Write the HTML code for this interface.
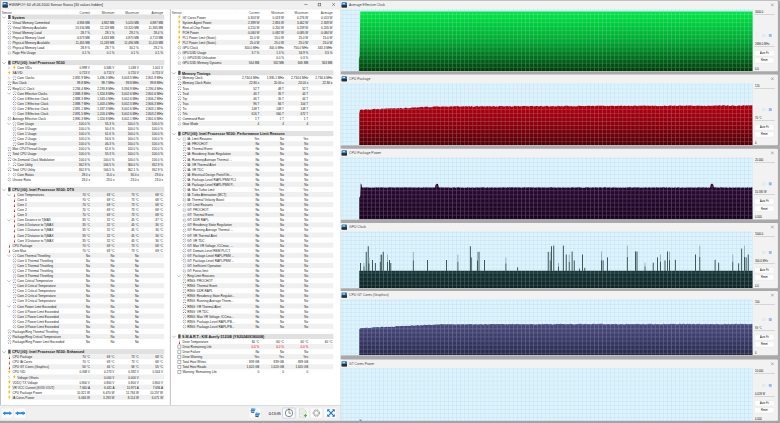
<!DOCTYPE html>
<html><head><meta charset="utf-8"><title>HWiNFO Sensor Status</title>
<style>
html,body{margin:0;padding:0;background:#c4c4c4;}
body{width:780px;height:423px;overflow:hidden;position:relative;}
svg{position:absolute;left:0;top:0;display:block;}
text{font-family:"Liberation Sans",sans-serif;white-space:pre;}
</style></head><body>
<svg width="780" height="423" viewBox="0 0 780 423">
<rect x="0" y="0" width="780" height="423" fill="#c4c4c4"/>
<defs><linearGradient id="g0" x1="0" y1="0" x2="0" y2="1"><stop offset="0" stop-color="#00e844"/><stop offset="0.5" stop-color="#00a830"/><stop offset="1" stop-color="#003c08"/></linearGradient><pattern id="p0" patternUnits="userSpaceOnUse" x="342.550" y="10.050" width="4.056" height="4.056"><rect x="0" y="0" width="0.5" height="4.056" fill="#c6e0f4"/><rect x="0.5" y="0" width="3.556" height="0.5" fill="#c6e0f4"/></pattern><pattern id="q0" patternUnits="userSpaceOnUse" x="342.550" y="10.050" width="4.056" height="4.056"><rect x="0" y="0" width="0.5" height="4.056" fill="rgba(215,225,255,0.33)"/><rect x="0.5" y="0" width="3.556" height="0.5" fill="rgba(215,225,255,0.33)"/></pattern><clipPath id="c0"><path d="M358.90 71.00 L358.90 59.00 L359.60 56.00 L360.30 11.60 L752.60 11.50 L752.60 71.00 Z"/></clipPath><linearGradient id="g1" x1="0" y1="0" x2="0" y2="1"><stop offset="0" stop-color="#b4000e"/><stop offset="0.5" stop-color="#8a000a"/><stop offset="1" stop-color="#520006"/></linearGradient><pattern id="p1" patternUnits="userSpaceOnUse" x="342.550" y="84.550" width="4.056" height="4.056"><rect x="0" y="0" width="0.5" height="4.056" fill="#c6e0f4"/><rect x="0.5" y="0" width="3.556" height="0.5" fill="#c6e0f4"/></pattern><pattern id="q1" patternUnits="userSpaceOnUse" x="342.550" y="84.550" width="4.056" height="4.056"><rect x="0" y="0" width="0.5" height="4.056" fill="rgba(215,225,255,0.33)"/><rect x="0.5" y="0" width="3.556" height="0.5" fill="rgba(215,225,255,0.33)"/></pattern><clipPath id="c1"><path d="M359.20 145.10 L359.20 113.50 L360.00 110.01 L361.20 110.11 L362.40 109.61 L363.60 110.08 L364.80 109.61 L366.00 109.72 L367.20 109.94 L368.40 109.49 L369.60 109.86 L370.80 109.45 L372.00 109.73 L373.20 109.66 L374.40 109.31 L375.60 108.89 L376.80 109.47 L378.00 109.33 L379.20 108.92 L380.40 108.58 L381.60 108.86 L382.80 108.97 L384.00 108.40 L385.20 109.19 L386.40 108.41 L387.60 108.87 L388.80 108.95 L390.00 108.92 L391.20 108.70 L392.40 108.19 L393.60 108.71 L394.80 108.30 L396.00 108.19 L397.20 108.38 L398.40 108.18 L399.60 108.56 L400.80 108.51 L402.00 108.33 L403.20 107.85 L404.40 108.03 L405.60 108.08 L406.80 107.78 L408.00 107.85 L409.20 107.94 L410.40 107.44 L411.60 107.48 L412.80 107.84 L414.00 107.49 L415.20 107.48 L416.40 107.12 L417.60 107.20 L418.80 107.54 L420.00 106.87 L421.20 107.59 L422.40 107.27 L423.60 106.92 L424.80 107.41 L426.00 107.05 L427.20 107.41 L428.40 106.79 L429.60 106.65 L430.80 106.78 L432.00 106.45 L433.20 106.91 L434.40 106.51 L435.60 106.55 L436.80 106.51 L438.00 106.57 L439.20 106.18 L440.40 106.05 L441.60 106.47 L442.80 106.29 L444.00 106.83 L445.20 106.25 L446.40 106.30 L447.60 105.98 L448.80 106.13 L450.00 106.62 L451.20 106.52 L452.40 106.26 L453.60 106.84 L454.80 106.44 L456.00 106.70 L457.20 106.74 L458.40 106.79 L459.60 106.15 L460.80 106.72 L462.00 106.61 L463.20 106.48 L464.40 106.05 L465.60 106.75 L466.80 106.42 L468.00 106.32 L469.20 106.02 L470.40 106.07 L471.60 106.03 L472.80 106.55 L474.00 106.43 L475.20 106.48 L476.40 106.00 L477.60 105.93 L478.80 106.65 L480.00 106.63 L481.20 106.57 L482.40 106.57 L483.60 106.34 L484.80 106.24 L486.00 106.53 L487.20 106.76 L488.40 106.38 L489.60 106.42 L490.80 106.24 L492.00 105.89 L493.20 106.13 L494.40 106.28 L495.60 106.18 L496.80 106.13 L498.00 106.68 L499.20 105.92 L500.40 106.02 L501.60 105.94 L502.80 106.00 L504.00 106.36 L505.20 106.35 L506.40 106.62 L507.60 106.13 L508.80 106.65 L510.00 106.64 L511.20 106.51 L512.40 106.55 L513.60 106.38 L514.80 106.64 L516.00 106.68 L517.20 106.54 L518.40 106.58 L519.60 106.34 L520.80 106.64 L522.00 105.88 L523.20 106.11 L524.40 106.52 L525.60 106.43 L526.80 106.34 L528.00 106.32 L529.20 106.53 L530.40 105.88 L531.60 105.74 L532.80 106.21 L534.00 106.19 L535.20 106.55 L536.40 106.53 L537.60 106.31 L538.80 106.38 L540.00 105.87 L541.20 106.46 L542.40 106.58 L543.60 105.75 L544.80 106.12 L546.00 106.46 L547.20 106.10 L548.40 106.56 L549.60 106.11 L550.80 105.70 L552.00 105.80 L553.20 105.95 L554.40 106.33 L555.60 106.24 L556.80 106.41 L558.00 105.86 L559.20 106.08 L560.40 105.85 L561.60 106.25 L562.80 106.35 L564.00 105.81 L565.20 105.65 L566.40 105.77 L567.60 105.81 L568.80 105.79 L570.00 105.86 L571.20 106.32 L572.40 106.05 L573.60 106.19 L574.80 106.49 L576.00 106.48 L577.20 106.25 L578.40 106.27 L579.60 105.87 L580.80 105.63 L582.00 106.09 L583.20 105.64 L584.40 105.59 L585.60 105.62 L586.80 106.15 L588.00 106.27 L589.20 106.27 L590.40 106.29 L591.60 106.28 L592.80 105.90 L594.00 105.65 L595.20 105.70 L596.40 106.02 L597.60 105.86 L598.80 105.72 L600.00 106.36 L601.20 105.84 L602.40 105.61 L603.60 105.72 L604.80 105.75 L606.00 105.99 L607.20 106.26 L608.40 105.70 L609.60 106.11 L610.80 105.69 L612.00 105.53 L613.20 106.04 L614.40 106.04 L615.60 105.54 L616.80 105.74 L618.00 106.23 L619.20 106.27 L620.40 106.24 L621.60 105.56 L622.80 105.65 L624.00 106.24 L625.20 105.62 L626.40 105.48 L627.60 105.77 L628.80 106.04 L630.00 105.86 L631.20 106.23 L632.40 106.33 L633.60 105.47 L634.80 105.75 L636.00 105.86 L637.20 105.49 L638.40 105.94 L639.60 105.54 L640.80 105.58 L642.00 106.13 L643.20 106.09 L644.40 106.05 L645.60 106.09 L646.80 105.78 L648.00 106.07 L649.20 105.92 L650.40 106.18 L651.60 105.47 L652.80 105.97 L654.00 105.87 L655.20 105.75 L656.40 105.46 L657.60 105.89 L658.80 105.44 L660.00 105.81 L661.20 105.78 L662.40 105.79 L663.60 106.24 L664.80 105.86 L666.00 106.08 L667.20 106.24 L668.40 105.52 L669.60 106.08 L670.80 105.81 L672.00 105.58 L673.20 105.73 L674.40 105.93 L675.60 105.75 L676.80 105.72 L678.00 105.51 L679.20 106.11 L680.40 105.70 L681.60 105.98 L682.80 105.95 L684.00 105.50 L685.20 105.74 L686.40 105.68 L687.60 105.50 L688.80 105.36 L690.00 105.78 L691.20 105.62 L692.40 105.72 L693.60 105.71 L694.80 105.54 L696.00 105.75 L697.20 105.68 L698.40 105.72 L699.60 105.30 L700.80 105.52 L702.00 105.36 L703.20 105.29 L704.40 105.90 L705.60 105.63 L706.80 105.28 L708.00 105.37 L709.20 106.00 L710.40 106.01 L711.60 105.72 L712.80 106.05 L714.00 105.89 L715.20 106.04 L716.40 105.50 L717.60 105.39 L718.80 105.29 L720.00 105.95 L721.20 105.44 L722.40 105.49 L723.60 105.95 L724.80 105.28 L726.00 105.20 L727.20 105.87 L728.40 105.21 L729.60 105.71 L730.80 105.62 L732.00 105.17 L733.20 105.31 L734.40 105.91 L735.60 105.66 L736.80 105.58 L738.00 105.74 L739.20 105.86 L740.40 105.75 L741.60 105.38 L742.80 106.01 L744.00 105.52 L745.20 105.62 L746.40 106.00 L747.60 105.71 L748.80 105.45 L750.00 105.54 L751.20 105.94 L752.40 105.11 L752.60 145.10 Z"/></clipPath><linearGradient id="g2" x1="0" y1="0" x2="0" y2="1"><stop offset="0" stop-color="#2a0830"/><stop offset="0.5" stop-color="#230628"/><stop offset="1" stop-color="#1a0420"/></linearGradient><pattern id="p2" patternUnits="userSpaceOnUse" x="342.550" y="157.950" width="4.056" height="4.056"><rect x="0" y="0" width="0.5" height="4.056" fill="#c6e0f4"/><rect x="0.5" y="0" width="3.556" height="0.5" fill="#c6e0f4"/></pattern><pattern id="q2" patternUnits="userSpaceOnUse" x="342.550" y="157.950" width="4.056" height="4.056"><rect x="0" y="0" width="0.5" height="4.056" fill="rgba(215,225,255,0.33)"/><rect x="0.5" y="0" width="3.556" height="0.5" fill="rgba(215,225,255,0.33)"/></pattern><clipPath id="c2"><path d="M359.20 219.30 L359.20 198.00 L360.20 196.00 L360.70 183.30 L361.50 184.50 L362.00 186.80 L362.00 187.38 L362.80 187.31 L363.60 187.66 L364.40 187.59 L365.20 187.68 L366.00 187.39 L366.80 187.59 L367.60 187.65 L368.40 187.53 L369.20 187.34 L370.00 187.37 L370.80 187.60 L371.60 187.64 L372.40 187.33 L373.20 187.47 L374.00 187.42 L374.80 187.66 L375.60 187.68 L376.40 187.42 L377.20 187.53 L378.00 187.67 L378.80 187.32 L379.60 187.45 L380.40 187.38 L381.20 187.67 L382.00 187.36 L382.80 187.67 L383.60 187.35 L384.40 187.52 L385.20 187.56 L386.00 187.48 L386.80 187.33 L387.60 187.59 L388.40 187.65 L389.20 187.49 L390.00 187.60 L390.80 187.66 L391.60 187.64 L392.40 187.68 L393.20 187.62 L394.00 187.58 L394.80 187.58 L395.60 187.40 L396.40 187.58 L397.20 187.50 L398.00 187.63 L398.80 187.56 L399.60 187.69 L400.40 187.60 L401.20 187.69 L402.00 187.41 L402.80 187.48 L403.60 187.62 L404.40 187.51 L405.20 187.33 L406.00 187.66 L406.80 187.37 L407.60 187.53 L408.40 187.50 L409.20 187.37 L410.00 187.54 L410.80 187.50 L411.60 187.42 L412.40 187.31 L413.20 187.56 L414.00 187.37 L414.80 187.42 L415.60 187.45 L416.40 187.54 L417.20 187.56 L418.00 187.68 L418.80 187.65 L419.60 187.67 L420.40 187.40 L421.20 187.60 L422.00 187.63 L422.80 187.67 L423.60 187.36 L424.40 187.35 L425.20 187.43 L426.00 187.59 L426.80 187.60 L427.60 187.58 L428.40 187.52 L429.20 187.64 L430.00 187.52 L430.80 187.59 L431.60 187.32 L432.40 187.31 L433.20 187.48 L434.00 187.60 L434.80 187.31 L435.60 184.60 L436.40 183.94 L437.20 183.76 L438.00 184.25 L438.80 187.51 L439.60 187.50 L440.40 187.62 L441.20 187.50 L442.00 187.70 L442.80 187.59 L443.60 187.66 L444.40 187.54 L445.20 187.68 L446.00 187.69 L446.80 187.58 L447.60 187.61 L448.40 187.47 L449.20 187.49 L450.00 187.40 L450.80 187.44 L451.60 187.41 L452.40 187.35 L453.20 187.54 L454.00 187.57 L454.80 187.31 L455.60 187.64 L456.40 187.41 L457.20 187.44 L458.00 187.68 L458.80 187.37 L459.60 187.34 L460.40 187.45 L461.20 187.41 L462.00 187.38 L462.80 187.64 L463.60 187.49 L464.40 187.50 L465.20 187.37 L466.00 187.38 L466.80 187.37 L467.60 187.47 L468.40 187.34 L469.20 187.43 L470.00 187.42 L470.80 187.61 L471.60 187.69 L472.40 187.65 L473.20 187.56 L474.00 187.66 L474.80 187.37 L475.60 187.48 L476.40 187.45 L477.20 187.45 L478.00 187.43 L478.80 187.50 L479.60 187.70 L480.40 187.38 L481.20 187.40 L482.00 187.50 L482.80 187.49 L483.60 187.44 L484.40 187.67 L485.20 187.41 L486.00 187.60 L486.80 187.67 L487.60 187.59 L488.40 187.41 L489.20 187.62 L490.00 187.40 L490.80 187.31 L491.60 187.50 L492.40 187.55 L493.20 187.51 L494.00 187.43 L494.80 187.39 L495.60 187.45 L496.40 187.44 L497.20 187.67 L498.00 187.64 L498.80 187.60 L499.60 187.40 L500.40 187.58 L501.20 187.47 L502.00 187.70 L502.80 187.68 L503.60 187.59 L504.40 187.43 L505.20 187.42 L506.00 187.43 L506.80 187.58 L507.60 187.49 L508.40 187.51 L509.20 187.51 L510.00 187.65 L510.80 187.34 L511.60 187.62 L512.40 187.31 L513.20 187.33 L514.00 187.69 L514.80 187.52 L515.60 187.37 L516.40 187.31 L517.20 187.52 L518.00 187.59 L518.80 187.62 L519.60 187.32 L520.40 187.62 L521.20 187.47 L522.00 187.64 L522.80 187.49 L523.60 187.32 L524.40 187.65 L525.20 187.37 L526.00 187.50 L526.80 187.35 L527.60 187.42 L528.40 187.61 L529.20 187.34 L530.00 187.51 L530.80 187.69 L531.60 187.70 L532.40 187.50 L533.20 187.52 L534.00 187.58 L534.80 187.64 L535.60 187.56 L536.40 187.57 L537.20 187.36 L538.00 187.70 L538.80 187.40 L539.60 187.36 L540.40 187.65 L541.20 187.33 L542.00 187.41 L542.80 187.34 L543.60 187.58 L544.40 187.55 L545.20 187.54 L546.00 187.30 L546.80 187.46 L547.60 187.56 L548.40 187.53 L549.20 187.59 L550.00 187.68 L550.80 187.66 L551.60 187.37 L552.40 187.59 L553.20 187.33 L554.00 187.60 L554.80 187.59 L555.60 187.50 L556.40 187.62 L557.20 187.55 L558.00 187.32 L558.80 187.35 L559.60 187.38 L560.40 187.45 L561.20 187.33 L562.00 187.32 L562.80 187.48 L563.60 187.41 L564.40 187.68 L565.20 187.41 L566.00 187.52 L566.80 187.40 L567.60 187.44 L568.40 187.59 L569.20 187.68 L570.00 187.33 L570.80 187.65 L571.60 187.51 L572.40 187.56 L573.20 187.58 L574.00 187.40 L574.80 187.31 L575.60 187.60 L576.40 187.44 L577.20 187.58 L578.00 187.48 L578.80 187.54 L579.60 187.63 L580.40 187.64 L581.20 187.62 L582.00 187.34 L582.80 187.50 L583.60 187.61 L584.40 187.34 L585.20 187.30 L586.00 187.52 L586.80 187.64 L587.60 187.62 L588.40 187.66 L589.20 187.56 L590.00 187.66 L590.80 187.60 L591.60 187.60 L592.40 187.47 L593.20 187.35 L594.00 187.40 L594.80 187.53 L595.60 187.53 L596.40 187.49 L597.20 187.55 L598.00 187.56 L598.80 187.68 L599.60 187.59 L600.40 187.31 L601.20 187.65 L602.00 187.50 L602.80 187.45 L603.60 187.35 L604.40 187.61 L605.20 187.59 L606.00 187.60 L606.80 187.54 L607.60 187.52 L608.40 187.32 L609.20 187.36 L610.00 187.35 L610.80 187.69 L611.60 187.69 L612.40 187.42 L613.20 187.34 L614.00 187.51 L614.80 187.47 L615.60 187.70 L616.40 187.54 L617.20 187.33 L618.00 187.37 L618.80 187.36 L619.60 187.31 L620.40 187.60 L621.20 187.66 L622.00 187.64 L622.80 187.49 L623.60 187.43 L624.40 187.32 L625.20 187.41 L626.00 187.44 L626.80 187.39 L627.60 187.52 L628.40 187.48 L629.20 187.68 L630.00 187.39 L630.80 187.61 L631.60 187.33 L632.40 187.44 L633.20 187.58 L634.00 187.65 L634.80 187.60 L635.60 187.45 L636.40 187.42 L637.20 187.66 L638.00 187.67 L638.80 187.49 L639.60 187.47 L640.40 187.54 L641.20 187.61 L642.00 187.46 L642.80 187.70 L643.60 187.58 L644.40 187.52 L645.20 187.32 L646.00 187.44 L646.80 187.35 L647.60 187.51 L648.40 187.61 L649.20 187.60 L650.00 187.32 L650.80 187.42 L651.60 187.58 L652.40 187.69 L653.20 187.50 L654.00 187.43 L654.80 187.53 L655.60 187.60 L656.40 187.43 L657.20 187.33 L658.00 187.61 L658.80 187.69 L659.60 187.56 L660.40 187.53 L661.20 187.43 L662.00 187.62 L662.80 187.38 L663.60 187.40 L664.40 187.50 L665.20 187.62 L666.00 187.31 L666.80 187.58 L667.60 187.37 L668.40 187.61 L669.20 187.61 L670.00 187.40 L670.80 187.58 L671.60 187.32 L672.40 187.50 L673.20 187.63 L674.00 187.61 L674.80 187.53 L675.60 187.43 L676.40 187.32 L677.20 187.64 L678.00 187.54 L678.80 187.61 L679.60 187.31 L680.40 187.64 L681.20 187.68 L682.00 187.68 L682.80 187.54 L683.60 187.34 L684.40 187.35 L685.20 187.41 L686.00 187.30 L686.80 187.33 L687.60 187.57 L688.40 187.63 L689.20 187.33 L690.00 187.40 L690.80 187.69 L691.60 187.43 L692.40 187.55 L693.20 187.55 L694.00 187.57 L694.80 187.63 L695.60 187.70 L696.40 187.59 L697.20 187.56 L698.00 187.32 L698.80 187.65 L699.60 187.31 L700.40 187.62 L701.20 187.56 L702.00 187.37 L702.80 187.37 L703.60 187.53 L704.40 187.68 L705.20 187.51 L706.00 187.55 L706.80 187.33 L707.60 187.62 L708.40 187.55 L709.20 187.34 L710.00 187.69 L710.80 184.40 L711.60 183.60 L712.40 183.61 L713.20 184.54 L714.00 187.69 L714.80 187.67 L715.60 187.33 L716.40 187.60 L717.20 187.40 L718.00 187.34 L718.80 187.56 L719.60 187.59 L720.40 187.32 L721.20 187.45 L722.00 187.60 L722.80 187.41 L723.60 187.57 L724.40 187.59 L725.20 187.70 L726.00 187.40 L726.80 187.33 L727.60 187.45 L728.40 187.32 L729.20 187.69 L730.00 187.61 L730.80 187.51 L731.60 187.32 L732.40 187.32 L733.20 187.55 L734.00 187.60 L734.80 187.53 L735.60 187.50 L736.40 187.33 L737.20 187.63 L738.00 187.38 L738.80 187.40 L739.60 187.37 L740.40 187.39 L741.20 187.46 L742.00 187.57 L742.80 187.57 L743.60 187.56 L744.40 187.39 L745.20 187.67 L746.00 187.62 L746.80 187.40 L747.60 187.60 L748.40 187.67 L749.20 187.69 L750.00 187.48 L750.80 187.57 L751.60 187.31 L752.40 187.35 L752.60 219.30 Z"/></clipPath><linearGradient id="g3" x1="0" y1="0" x2="0" y2="1"><stop offset="0" stop-color="#173434"/><stop offset="0.5" stop-color="#122c2c"/><stop offset="1" stop-color="#0e2424"/></linearGradient><pattern id="p3" patternUnits="userSpaceOnUse" x="342.550" y="232.050" width="4.056" height="4.056"><rect x="0" y="0" width="0.5" height="4.056" fill="#c6e0f4"/><rect x="0.5" y="0" width="3.556" height="0.5" fill="#c6e0f4"/></pattern><pattern id="q3" patternUnits="userSpaceOnUse" x="342.550" y="232.050" width="4.056" height="4.056"><rect x="0" y="0" width="0.5" height="4.056" fill="rgba(215,225,255,0.33)"/><rect x="0.5" y="0" width="3.556" height="0.5" fill="rgba(215,225,255,0.33)"/></pattern><clipPath id="c3"><path d="M359.20 288.00 L359.20 270.80 L752.60 270.80 L752.60 288.00 Z"/></clipPath><linearGradient id="g4" x1="0" y1="0" x2="0" y2="1"><stop offset="0" stop-color="#4c4c7c"/><stop offset="0.5" stop-color="#3a3a66"/><stop offset="1" stop-color="#28284a"/></linearGradient><pattern id="p4" patternUnits="userSpaceOnUse" x="342.550" y="300.050" width="4.056" height="4.056"><rect x="0" y="0" width="0.5" height="4.056" fill="#c6e0f4"/><rect x="0.5" y="0" width="3.556" height="0.5" fill="#c6e0f4"/></pattern><pattern id="q4" patternUnits="userSpaceOnUse" x="342.550" y="300.050" width="4.056" height="4.056"><rect x="0" y="0" width="0.5" height="4.056" fill="rgba(215,225,255,0.33)"/><rect x="0.5" y="0" width="3.556" height="0.5" fill="rgba(215,225,255,0.33)"/></pattern><clipPath id="c4"><path d="M359.20 355.10 L359.20 329.50 L360.00 327.91 L361.20 328.35 L362.40 328.42 L363.60 328.35 L364.80 328.01 L366.00 327.80 L367.20 327.93 L368.40 328.02 L369.60 327.83 L370.80 327.63 L372.00 327.53 L373.20 327.42 L374.40 327.29 L375.60 327.35 L376.80 327.68 L378.00 327.11 L379.20 327.43 L380.40 327.18 L381.60 327.26 L382.80 326.94 L384.00 327.26 L385.20 327.17 L386.40 327.11 L387.60 327.11 L388.80 326.54 L390.00 326.70 L391.20 326.81 L392.40 326.70 L393.60 326.23 L394.80 326.50 L396.00 326.64 L397.20 326.17 L398.40 326.22 L399.60 325.93 L400.80 326.49 L402.00 326.17 L403.20 325.87 L404.40 325.79 L405.60 325.68 L406.80 326.23 L408.00 325.99 L409.20 326.06 L410.40 325.95 L411.60 325.34 L412.80 325.55 L414.00 325.25 L415.20 325.58 L416.40 325.17 L417.60 325.41 L418.80 325.48 L420.00 325.06 L421.20 324.88 L422.40 325.41 L423.60 325.00 L424.80 324.93 L426.00 325.15 L427.20 324.98 L428.40 325.08 L429.60 324.98 L430.80 324.88 L432.00 324.58 L433.20 324.48 L434.40 324.74 L435.60 324.81 L436.80 324.53 L438.00 324.23 L439.20 324.51 L440.40 324.38 L441.60 324.46 L442.80 324.04 L444.00 324.21 L445.20 324.55 L446.40 324.52 L447.60 324.32 L448.80 324.21 L450.00 324.14 L451.20 324.53 L452.40 324.47 L453.60 324.10 L454.80 324.30 L456.00 324.39 L457.20 324.37 L458.40 323.92 L459.60 324.36 L460.80 324.18 L462.00 324.33 L463.20 324.29 L464.40 323.97 L465.60 323.88 L466.80 324.32 L468.00 324.44 L469.20 324.06 L470.40 324.43 L471.60 324.57 L472.80 323.94 L474.00 324.27 L475.20 323.99 L476.40 324.28 L477.60 323.95 L478.80 324.24 L480.00 324.45 L481.20 324.55 L482.40 324.17 L483.60 324.11 L484.80 323.92 L486.00 324.49 L487.20 324.12 L488.40 324.29 L489.60 324.20 L490.80 324.45 L492.00 324.35 L493.20 324.18 L494.40 323.90 L495.60 324.47 L496.80 324.20 L498.00 323.98 L499.20 323.87 L500.40 324.40 L501.60 324.45 L502.80 323.88 L504.00 323.86 L505.20 324.20 L506.40 324.50 L507.60 323.89 L508.80 324.26 L510.00 323.90 L511.20 324.10 L512.40 323.95 L513.60 324.42 L514.80 323.98 L516.00 324.37 L517.20 324.24 L518.40 323.93 L519.60 323.94 L520.80 324.39 L522.00 324.37 L523.20 324.24 L524.40 324.16 L525.60 324.25 L526.80 324.43 L528.00 324.34 L529.20 324.01 L530.40 323.88 L531.60 324.48 L532.80 324.12 L534.00 323.98 L535.20 324.48 L536.40 323.92 L537.60 324.42 L538.80 324.09 L540.00 324.12 L541.20 324.06 L542.40 324.29 L543.60 324.21 L544.80 324.09 L546.00 324.20 L547.20 324.04 L548.40 324.18 L549.60 324.19 L550.80 324.48 L552.00 324.06 L553.20 324.15 L554.40 324.33 L555.60 323.95 L556.80 323.94 L558.00 324.17 L559.20 324.36 L560.40 324.15 L561.60 324.41 L562.80 324.39 L564.00 324.18 L565.20 324.42 L566.40 324.17 L567.60 324.12 L568.80 324.45 L570.00 324.03 L571.20 324.42 L572.40 323.96 L573.60 323.93 L574.80 324.11 L576.00 324.43 L577.20 324.12 L578.40 324.20 L579.60 323.80 L580.80 324.37 L582.00 323.86 L583.20 323.77 L584.40 323.95 L585.60 323.89 L586.80 324.32 L588.00 323.77 L589.20 324.11 L590.40 323.79 L591.60 323.81 L592.80 324.34 L594.00 323.90 L595.20 323.80 L596.40 324.40 L597.60 324.20 L598.80 323.92 L600.00 324.34 L601.20 323.82 L602.40 324.25 L603.60 323.87 L604.80 324.34 L606.00 324.09 L607.20 323.80 L608.40 324.29 L609.60 324.25 L610.80 324.08 L612.00 324.21 L613.20 324.41 L614.40 324.30 L615.60 324.32 L616.80 323.77 L618.00 323.95 L619.20 323.80 L620.40 324.31 L621.60 323.88 L622.80 324.34 L624.00 324.05 L625.20 323.98 L626.40 324.17 L627.60 323.81 L628.80 324.03 L630.00 324.01 L631.20 323.80 L632.40 324.34 L633.60 323.72 L634.80 323.97 L636.00 324.14 L637.20 323.85 L638.40 324.22 L639.60 323.71 L640.80 324.00 L642.00 324.15 L643.20 323.87 L644.40 324.09 L645.60 324.28 L646.80 323.88 L648.00 324.37 L649.20 323.82 L650.40 324.22 L651.60 323.95 L652.80 323.71 L654.00 323.98 L655.20 323.93 L656.40 324.17 L657.60 324.39 L658.80 324.37 L660.00 324.28 L661.20 323.96 L662.40 324.08 L663.60 324.03 L664.80 323.76 L666.00 324.29 L667.20 324.22 L668.40 323.92 L669.60 324.36 L670.80 324.38 L672.00 324.13 L673.20 324.30 L674.40 324.12 L675.60 324.22 L676.80 323.96 L678.00 323.96 L679.20 324.23 L680.40 323.93 L681.60 324.04 L682.80 324.27 L684.00 323.71 L685.20 324.19 L686.40 324.26 L687.60 324.29 L688.80 323.91 L690.00 323.75 L691.20 323.81 L692.40 324.08 L693.60 324.17 L694.80 324.35 L696.00 323.90 L697.20 323.96 L698.40 324.11 L699.60 323.90 L700.80 324.04 L702.00 323.69 L703.20 323.83 L704.40 324.17 L705.60 323.71 L706.80 324.31 L708.00 323.97 L709.20 324.06 L710.40 324.17 L711.60 324.30 L712.80 323.79 L714.00 324.33 L715.20 323.95 L716.40 323.68 L717.60 324.23 L718.80 324.19 L720.00 323.91 L721.20 323.97 L722.40 323.88 L723.60 323.76 L724.80 324.20 L726.00 324.11 L727.20 324.11 L728.40 324.29 L729.60 323.70 L730.80 323.77 L732.00 323.82 L733.20 324.31 L734.40 323.73 L735.60 323.79 L736.80 323.99 L738.00 323.79 L739.20 324.00 L740.40 324.15 L741.60 324.24 L742.80 324.15 L744.00 324.28 L745.20 324.07 L746.40 323.78 L747.60 323.82 L748.80 323.71 L750.00 323.80 L751.20 324.11 L752.40 323.91 L752.60 355.10 Z"/></clipPath><pattern id="p5" patternUnits="userSpaceOnUse" x="342.550" y="368.450" width="4.056" height="4.056"><rect x="0" y="0" width="0.5" height="4.056" fill="#c6e0f4"/><rect x="0.5" y="0" width="3.556" height="0.5" fill="#c6e0f4"/></pattern><pattern id="q5" patternUnits="userSpaceOnUse" x="342.550" y="368.450" width="4.056" height="4.056"><rect x="0" y="0" width="0.5" height="4.056" fill="rgba(215,225,255,0.33)"/><rect x="0.5" y="0" width="3.556" height="0.5" fill="rgba(215,225,255,0.33)"/></pattern></defs>
<rect x="340.5" y="0" width="439.5" height="423" fill="#a9a9a9"/>
<rect x="340.5" y="0" width="439.5" height="0.9" fill="#c4c4c4"/>
<rect x="340.5" y="0.90" width="437.40" height="70.30" rx="1.2" fill="#f2f2f2"/>
<rect x="340.5" y="0.90" width="2" height="70.30" fill="#f2f2f2"/>
<rect x="341.6" y="2.30" width="5.4" height="5.2" rx="0.8" fill="#2a74b8"/>
<rect x="341.6" y="5.10" width="5.4" height="2.4" fill="#2e2e2e"/>
<rect x="342.6" y="3.20" width="2.4" height="1.1" fill="#d0e8ff"/>
<text transform="translate(349.00,6.20) scale(0.95,1)" font-size="3.6" fill="#555" stroke="#555" stroke-width="0.03">Average Effective Clock</text>
<path d="M771.10 3.60 L773.70 6.20 M773.70 3.60 L771.10 6.20" stroke="#555" stroke-width="0.4"/>
<rect x="340.9" y="8.90" width="411.70" height="62.10" fill="#ddf4fc"/>
<rect x="340.9" y="8.90" width="411.70" height="62.10" fill="url(#p0)"/>
<rect x="340.5" y="8.90" width="0.6" height="62.10" fill="#b4c8d4"/>
<path d="M358.90 71.00 L358.90 59.00 L359.60 56.00 L360.30 11.60 L752.60 11.50 L752.60 71.00 Z" fill="url(#g0)"/>
<rect x="340.9" y="8.90" width="411.70" height="62.10" fill="url(#q0)" clip-path="url(#c0)"/>
<text transform="translate(755.00,12.80) scale(0.9,1)" font-size="3.0" fill="#333" stroke="#333" stroke-width="0.02">3000.0</text>
<rect x="754.2" y="14.30" width="20.6" height="0.35" fill="#a0a0a0"/>
<rect x="756.3" y="34.20" width="2.6" height="2.6" fill="#f6f8f6" stroke="#e0e0e0" stroke-width="0.25"/>
<rect x="762.5" y="34.20" width="2.6" height="2.6" fill="#d8f0fa" stroke="#d0e0e8" stroke-width="0.25"/>
<rect x="769.0" y="34.20" width="2.6" height="2.6" fill="#9cb8e8" stroke="#88a8d8" stroke-width="0.25"/>
<text transform="translate(755.00,44.80) scale(0.9,1)" font-size="3.0" fill="#333" stroke="#333" stroke-width="0.02">2686.0 MHz</text>
<rect x="754.2" y="46.10" width="20.6" height="0.35" fill="#a0a0a0"/>
<rect x="754.6" y="50.50" width="19.6" height="5.4" rx="0.6" fill="#fdfdfd" stroke="#dadada" stroke-width="0.3"/>
<text transform="translate(764.40,54.10) scale(0.9,1)" font-size="2.8" fill="#222" text-anchor="middle" stroke="#222" stroke-width="0.02">Auto Fit</text>
<rect x="754.6" y="57.70" width="19.6" height="5.4" rx="0.6" fill="#fdfdfd" stroke="#dadada" stroke-width="0.3"/>
<text transform="translate(764.40,61.30) scale(0.9,1)" font-size="2.8" fill="#222" text-anchor="middle" stroke="#222" stroke-width="0.02">Reset</text>
<text transform="translate(755.00,69.60) scale(0.9,1)" font-size="3.0" fill="#333" stroke="#333" stroke-width="0.02">0.0</text>
<rect x="340.5" y="74.50" width="437.40" height="70.80" rx="1.2" fill="#f2f2f2"/>
<rect x="340.5" y="74.50" width="2" height="70.80" fill="#f2f2f2"/>
<rect x="341.6" y="76.15" width="5.4" height="5.2" rx="0.8" fill="#2a74b8"/>
<rect x="341.6" y="78.95" width="5.4" height="2.4" fill="#2e2e2e"/>
<rect x="342.6" y="77.05" width="2.4" height="1.1" fill="#d0e8ff"/>
<text transform="translate(349.00,80.05) scale(0.95,1)" font-size="3.6" fill="#555" stroke="#555" stroke-width="0.03">CPU Package</text>
<path d="M771.10 77.45 L773.70 80.05 M773.70 77.45 L771.10 80.05" stroke="#555" stroke-width="0.4"/>
<rect x="340.9" y="83.00" width="411.70" height="62.10" fill="#ddf4fc"/>
<rect x="340.9" y="83.00" width="411.70" height="62.10" fill="url(#p1)"/>
<rect x="340.5" y="83.00" width="0.6" height="62.10" fill="#b4c8d4"/>
<path d="M359.20 145.10 L359.20 113.50 L360.00 109.91 L361.20 109.54 L362.40 109.73 L363.60 109.91 L364.80 109.52 L366.00 109.18 L367.20 109.80 L368.40 109.15 L369.60 109.88 L370.80 109.61 L372.00 109.58 L373.20 109.07 L374.40 108.84 L375.60 108.97 L376.80 109.29 L378.00 108.74 L379.20 109.19 L380.40 109.22 L381.60 108.57 L382.80 108.76 L384.00 108.66 L385.20 108.63 L386.40 108.30 L387.60 108.70 L388.80 108.32 L390.00 108.40 L391.20 108.20 L392.40 108.53 L393.60 108.22 L394.80 108.31 L396.00 108.49 L397.20 108.53 L398.40 108.11 L399.60 108.55 L400.80 107.75 L402.00 108.38 L403.20 108.44 L404.40 108.32 L405.60 107.53 L406.80 108.00 L408.00 108.13 L409.20 108.18 L410.40 108.12 L411.60 107.48 L412.80 107.49 L414.00 107.38 L415.20 107.29 L416.40 107.84 L417.60 107.32 L418.80 107.47 L420.00 107.01 L421.20 106.96 L422.40 106.85 L423.60 107.54 L424.80 106.76 L426.00 106.67 L427.20 106.59 L428.40 107.30 L429.60 107.16 L430.80 107.19 L432.00 107.21 L433.20 106.43 L434.40 106.41 L435.60 106.52 L436.80 106.29 L438.00 106.42 L439.20 106.68 L440.40 106.81 L441.60 106.81 L442.80 106.21 L444.00 106.70 L445.20 106.60 L446.40 106.50 L447.60 106.86 L448.80 106.64 L450.00 106.62 L451.20 106.22 L452.40 106.53 L453.60 106.57 L454.80 105.99 L456.00 106.40 L457.20 106.08 L458.40 106.29 L459.60 106.82 L460.80 106.47 L462.00 106.44 L463.20 106.14 L464.40 106.52 L465.60 106.19 L466.80 106.34 L468.00 106.62 L469.20 106.04 L470.40 106.73 L471.60 106.07 L472.80 106.65 L474.00 106.80 L475.20 106.62 L476.40 106.11 L477.60 105.91 L478.80 106.78 L480.00 106.34 L481.20 106.34 L482.40 106.06 L483.60 106.61 L484.80 106.33 L486.00 106.45 L487.20 106.02 L488.40 106.53 L489.60 105.91 L490.80 106.50 L492.00 106.56 L493.20 106.12 L494.40 106.29 L495.60 106.64 L496.80 106.16 L498.00 106.66 L499.20 106.02 L500.40 106.10 L501.60 106.01 L502.80 106.15 L504.00 106.40 L505.20 106.35 L506.40 106.35 L507.60 105.90 L508.80 106.62 L510.00 105.90 L511.20 106.67 L512.40 106.51 L513.60 106.45 L514.80 105.87 L516.00 106.23 L517.20 106.34 L518.40 105.88 L519.60 106.46 L520.80 106.25 L522.00 106.19 L523.20 105.98 L524.40 105.98 L525.60 106.07 L526.80 106.34 L528.00 106.35 L529.20 106.50 L530.40 105.88 L531.60 106.04 L532.80 105.96 L534.00 106.48 L535.20 106.23 L536.40 105.93 L537.60 106.10 L538.80 106.50 L540.00 106.20 L541.20 105.81 L542.40 106.39 L543.60 106.43 L544.80 106.33 L546.00 105.96 L547.20 105.83 L548.40 106.45 L549.60 106.44 L550.80 106.36 L552.00 106.28 L553.20 106.10 L554.40 106.43 L555.60 106.27 L556.80 106.39 L558.00 105.68 L559.20 105.90 L560.40 106.46 L561.60 105.68 L562.80 106.45 L564.00 106.20 L565.20 105.65 L566.40 105.82 L567.60 105.87 L568.80 106.14 L570.00 106.35 L571.20 105.95 L572.40 106.42 L573.60 106.33 L574.80 106.16 L576.00 106.48 L577.20 106.15 L578.40 105.79 L579.60 105.87 L580.80 106.04 L582.00 105.92 L583.20 106.07 L584.40 106.36 L585.60 105.94 L586.80 106.11 L588.00 105.81 L589.20 105.65 L590.40 106.08 L591.60 105.95 L592.80 105.79 L594.00 106.08 L595.20 106.25 L596.40 105.80 L597.60 105.65 L598.80 105.75 L600.00 105.81 L601.20 105.67 L602.40 105.82 L603.60 105.85 L604.80 106.02 L606.00 106.14 L607.20 105.85 L608.40 106.33 L609.60 106.03 L610.80 105.70 L612.00 105.76 L613.20 105.83 L614.40 106.17 L615.60 106.01 L616.80 105.98 L618.00 105.83 L619.20 106.01 L620.40 105.77 L621.60 105.54 L622.80 106.21 L624.00 105.78 L625.20 105.67 L626.40 106.01 L627.60 105.92 L628.80 105.48 L630.00 106.32 L631.20 105.86 L632.40 106.20 L633.60 105.64 L634.80 105.49 L636.00 105.87 L637.20 106.24 L638.40 105.81 L639.60 105.84 L640.80 105.68 L642.00 105.86 L643.20 105.74 L644.40 105.56 L645.60 105.84 L646.80 105.93 L648.00 105.45 L649.20 106.11 L650.40 105.68 L651.60 105.94 L652.80 105.60 L654.00 106.17 L655.20 105.39 L656.40 105.96 L657.60 106.22 L658.80 106.02 L660.00 105.91 L661.20 106.25 L662.40 105.88 L663.60 105.88 L664.80 105.62 L666.00 105.93 L667.20 106.01 L668.40 106.04 L669.60 105.57 L670.80 105.39 L672.00 105.76 L673.20 106.03 L674.40 105.50 L675.60 105.87 L676.80 106.03 L678.00 106.10 L679.20 105.51 L680.40 105.48 L681.60 105.63 L682.80 105.78 L684.00 105.69 L685.20 105.99 L686.40 105.32 L687.60 105.87 L688.80 105.61 L690.00 105.44 L691.20 105.44 L692.40 105.75 L693.60 105.90 L694.80 105.67 L696.00 106.05 L697.20 105.41 L698.40 105.84 L699.60 105.39 L700.80 105.91 L702.00 105.81 L703.20 105.91 L704.40 105.75 L705.60 105.97 L706.80 106.13 L708.00 105.48 L709.20 105.87 L710.40 105.90 L711.60 105.84 L712.80 105.68 L714.00 105.72 L715.20 105.53 L716.40 105.51 L717.60 105.77 L718.80 105.26 L720.00 105.32 L721.20 106.04 L722.40 105.34 L723.60 105.27 L724.80 105.37 L726.00 105.95 L727.20 105.32 L728.40 105.50 L729.60 106.05 L730.80 106.05 L732.00 105.20 L733.20 105.46 L734.40 105.83 L735.60 105.96 L736.80 105.92 L738.00 105.83 L739.20 105.34 L740.40 105.72 L741.60 105.89 L742.80 105.21 L744.00 105.31 L745.20 105.87 L746.40 105.21 L747.60 105.47 L748.80 105.31 L750.00 105.40 L751.20 105.20 L752.40 105.29 L752.60 145.10 Z" fill="url(#g1)"/>
<rect x="340.9" y="83.00" width="411.70" height="62.10" fill="url(#q1)" clip-path="url(#c1)"/>
<text transform="translate(755.00,86.90) scale(0.9,1)" font-size="3.0" fill="#333" stroke="#333" stroke-width="0.02">120</text>
<rect x="754.2" y="88.40" width="20.6" height="0.35" fill="#a0a0a0"/>
<rect x="756.3" y="108.30" width="2.6" height="2.6" fill="#f6f8f6" stroke="#e0e0e0" stroke-width="0.25"/>
<rect x="762.5" y="108.30" width="2.6" height="2.6" fill="#d8f0fa" stroke="#d0e0e8" stroke-width="0.25"/>
<rect x="769.0" y="108.30" width="2.6" height="2.6" fill="#9cb8e8" stroke="#88a8d8" stroke-width="0.25"/>
<text transform="translate(755.00,118.90) scale(0.9,1)" font-size="3.0" fill="#333" stroke="#333" stroke-width="0.02">70 °C</text>
<rect x="754.2" y="120.20" width="20.6" height="0.35" fill="#a0a0a0"/>
<rect x="754.6" y="124.60" width="19.6" height="5.4" rx="0.6" fill="#fdfdfd" stroke="#dadada" stroke-width="0.3"/>
<text transform="translate(764.40,128.20) scale(0.9,1)" font-size="2.8" fill="#222" text-anchor="middle" stroke="#222" stroke-width="0.02">Auto Fit</text>
<rect x="754.6" y="131.80" width="19.6" height="5.4" rx="0.6" fill="#fdfdfd" stroke="#dadada" stroke-width="0.3"/>
<text transform="translate(764.40,135.40) scale(0.9,1)" font-size="2.8" fill="#222" text-anchor="middle" stroke="#222" stroke-width="0.02">Reset</text>
<text transform="translate(755.00,143.70) scale(0.9,1)" font-size="3.0" fill="#333" stroke="#333" stroke-width="0.02">0</text>
<rect x="340.5" y="148.70" width="437.40" height="70.80" rx="1.2" fill="#f2f2f2"/>
<rect x="340.5" y="148.70" width="2" height="70.80" fill="#f2f2f2"/>
<rect x="341.6" y="150.30" width="5.4" height="5.2" rx="0.8" fill="#2a74b8"/>
<rect x="341.6" y="153.10" width="5.4" height="2.4" fill="#2e2e2e"/>
<rect x="342.6" y="151.20" width="2.4" height="1.1" fill="#d0e8ff"/>
<text transform="translate(349.00,154.20) scale(0.95,1)" font-size="3.6" fill="#555" stroke="#555" stroke-width="0.03">CPU Package Power</text>
<path d="M771.10 151.60 L773.70 154.20 M773.70 151.60 L771.10 154.20" stroke="#555" stroke-width="0.4"/>
<rect x="340.9" y="157.10" width="411.70" height="62.20" fill="#ddf4fc"/>
<rect x="340.9" y="157.10" width="411.70" height="62.20" fill="url(#p2)"/>
<rect x="340.5" y="157.10" width="0.6" height="62.20" fill="#b4c8d4"/>
<path d="M359.20 219.30 L359.20 198.00 L360.20 196.00 L360.70 183.30 L361.50 184.50 L362.00 186.80 L362.00 187.36 L362.80 187.62 L363.60 187.42 L364.40 187.49 L365.20 187.40 L366.00 187.52 L366.80 187.35 L367.60 187.48 L368.40 187.59 L369.20 187.61 L370.00 187.64 L370.80 187.50 L371.60 187.68 L372.40 187.51 L373.20 187.64 L374.00 187.50 L374.80 187.50 L375.60 187.48 L376.40 187.35 L377.20 187.70 L378.00 187.36 L378.80 187.51 L379.60 187.47 L380.40 187.43 L381.20 187.36 L382.00 187.55 L382.80 187.53 L383.60 187.32 L384.40 187.67 L385.20 187.45 L386.00 187.45 L386.80 187.69 L387.60 187.46 L388.40 187.43 L389.20 187.33 L390.00 187.57 L390.80 187.31 L391.60 187.50 L392.40 187.51 L393.20 187.34 L394.00 187.69 L394.80 187.41 L395.60 187.45 L396.40 187.56 L397.20 187.36 L398.00 187.55 L398.80 187.51 L399.60 187.49 L400.40 187.39 L401.20 187.62 L402.00 187.53 L402.80 187.53 L403.60 187.48 L404.40 187.37 L405.20 187.58 L406.00 187.37 L406.80 187.54 L407.60 187.50 L408.40 187.59 L409.20 187.50 L410.00 187.31 L410.80 187.44 L411.60 187.38 L412.40 187.57 L413.20 187.57 L414.00 187.58 L414.80 187.47 L415.60 187.45 L416.40 187.39 L417.20 187.68 L418.00 187.41 L418.80 187.35 L419.60 187.48 L420.40 187.68 L421.20 187.58 L422.00 187.70 L422.80 187.62 L423.60 187.33 L424.40 187.46 L425.20 187.44 L426.00 187.38 L426.80 187.34 L427.60 187.46 L428.40 187.45 L429.20 187.45 L430.00 187.42 L430.80 187.46 L431.60 187.43 L432.40 187.61 L433.20 187.43 L434.00 187.52 L434.80 187.39 L435.60 184.68 L436.40 184.01 L437.20 183.75 L438.00 184.09 L438.80 187.33 L439.60 187.44 L440.40 187.55 L441.20 187.37 L442.00 187.39 L442.80 187.48 L443.60 187.60 L444.40 187.58 L445.20 187.53 L446.00 187.57 L446.80 187.53 L447.60 187.44 L448.40 187.33 L449.20 187.68 L450.00 187.47 L450.80 187.68 L451.60 187.65 L452.40 187.38 L453.20 187.47 L454.00 187.33 L454.80 187.52 L455.60 187.69 L456.40 187.55 L457.20 187.46 L458.00 187.32 L458.80 187.31 L459.60 187.51 L460.40 187.54 L461.20 187.66 L462.00 187.44 L462.80 187.62 L463.60 187.64 L464.40 187.69 L465.20 187.70 L466.00 187.43 L466.80 187.65 L467.60 187.31 L468.40 187.66 L469.20 187.35 L470.00 187.65 L470.80 187.69 L471.60 187.41 L472.40 187.60 L473.20 187.41 L474.00 187.63 L474.80 187.68 L475.60 187.39 L476.40 187.41 L477.20 187.36 L478.00 187.41 L478.80 187.67 L479.60 187.45 L480.40 187.42 L481.20 187.52 L482.00 187.33 L482.80 187.60 L483.60 187.31 L484.40 187.41 L485.20 187.70 L486.00 187.69 L486.80 187.44 L487.60 187.37 L488.40 187.67 L489.20 187.58 L490.00 187.41 L490.80 187.63 L491.60 187.36 L492.40 187.51 L493.20 187.68 L494.00 187.55 L494.80 187.47 L495.60 187.52 L496.40 187.43 L497.20 187.64 L498.00 187.38 L498.80 187.55 L499.60 187.44 L500.40 187.45 L501.20 187.53 L502.00 187.55 L502.80 187.39 L503.60 187.32 L504.40 187.39 L505.20 187.47 L506.00 187.58 L506.80 187.68 L507.60 187.31 L508.40 187.42 L509.20 187.37 L510.00 187.57 L510.80 187.46 L511.60 187.31 L512.40 187.37 L513.20 187.46 L514.00 187.58 L514.80 187.53 L515.60 187.34 L516.40 187.55 L517.20 187.43 L518.00 187.46 L518.80 187.34 L519.60 187.38 L520.40 187.59 L521.20 187.70 L522.00 187.59 L522.80 187.53 L523.60 187.47 L524.40 187.37 L525.20 187.35 L526.00 187.68 L526.80 187.37 L527.60 187.38 L528.40 187.35 L529.20 187.47 L530.00 187.59 L530.80 187.36 L531.60 187.38 L532.40 187.43 L533.20 187.33 L534.00 187.56 L534.80 187.67 L535.60 187.48 L536.40 187.38 L537.20 187.62 L538.00 187.40 L538.80 187.33 L539.60 187.61 L540.40 187.46 L541.20 187.43 L542.00 187.51 L542.80 187.62 L543.60 187.60 L544.40 187.40 L545.20 187.38 L546.00 187.52 L546.80 187.66 L547.60 187.38 L548.40 187.39 L549.20 187.61 L550.00 187.47 L550.80 187.34 L551.60 187.35 L552.40 187.49 L553.20 187.51 L554.00 187.46 L554.80 187.62 L555.60 187.62 L556.40 187.63 L557.20 187.42 L558.00 187.55 L558.80 187.47 L559.60 187.54 L560.40 187.49 L561.20 187.64 L562.00 187.68 L562.80 187.30 L563.60 187.55 L564.40 187.66 L565.20 187.45 L566.00 187.39 L566.80 187.64 L567.60 187.46 L568.40 187.56 L569.20 187.49 L570.00 187.69 L570.80 187.69 L571.60 187.30 L572.40 187.35 L573.20 187.51 L574.00 187.47 L574.80 187.60 L575.60 187.39 L576.40 187.53 L577.20 187.32 L578.00 187.39 L578.80 187.37 L579.60 187.31 L580.40 187.60 L581.20 187.68 L582.00 187.62 L582.80 187.63 L583.60 187.67 L584.40 187.68 L585.20 187.48 L586.00 187.35 L586.80 187.52 L587.60 187.32 L588.40 187.34 L589.20 187.67 L590.00 187.46 L590.80 187.54 L591.60 187.65 L592.40 187.32 L593.20 187.60 L594.00 187.47 L594.80 187.44 L595.60 187.32 L596.40 187.43 L597.20 187.54 L598.00 187.52 L598.80 187.64 L599.60 187.31 L600.40 187.30 L601.20 187.61 L602.00 187.68 L602.80 187.60 L603.60 187.56 L604.40 187.34 L605.20 187.34 L606.00 187.37 L606.80 187.68 L607.60 187.39 L608.40 187.42 L609.20 187.44 L610.00 187.31 L610.80 187.68 L611.60 187.64 L612.40 187.40 L613.20 187.32 L614.00 187.43 L614.80 187.58 L615.60 187.46 L616.40 187.40 L617.20 187.66 L618.00 187.57 L618.80 187.60 L619.60 187.65 L620.40 187.51 L621.20 187.63 L622.00 187.60 L622.80 187.64 L623.60 187.43 L624.40 187.69 L625.20 187.41 L626.00 187.62 L626.80 187.69 L627.60 187.33 L628.40 187.61 L629.20 187.33 L630.00 187.35 L630.80 187.34 L631.60 187.64 L632.40 187.52 L633.20 187.66 L634.00 187.33 L634.80 187.36 L635.60 187.45 L636.40 187.52 L637.20 187.56 L638.00 187.37 L638.80 187.51 L639.60 187.45 L640.40 187.64 L641.20 187.61 L642.00 187.68 L642.80 187.41 L643.60 187.48 L644.40 187.64 L645.20 187.35 L646.00 187.59 L646.80 187.54 L647.60 187.64 L648.40 187.59 L649.20 187.36 L650.00 187.57 L650.80 187.63 L651.60 187.50 L652.40 187.57 L653.20 187.34 L654.00 187.65 L654.80 187.31 L655.60 187.68 L656.40 187.34 L657.20 187.43 L658.00 187.62 L658.80 187.51 L659.60 187.59 L660.40 187.60 L661.20 187.62 L662.00 187.55 L662.80 187.30 L663.60 187.30 L664.40 187.33 L665.20 187.66 L666.00 187.58 L666.80 187.34 L667.60 187.68 L668.40 187.41 L669.20 187.58 L670.00 187.31 L670.80 187.69 L671.60 187.38 L672.40 187.56 L673.20 187.64 L674.00 187.70 L674.80 187.37 L675.60 187.49 L676.40 187.63 L677.20 187.53 L678.00 187.34 L678.80 187.61 L679.60 187.47 L680.40 187.64 L681.20 187.63 L682.00 187.39 L682.80 187.42 L683.60 187.62 L684.40 187.67 L685.20 187.67 L686.00 187.46 L686.80 187.50 L687.60 187.59 L688.40 187.62 L689.20 187.46 L690.00 187.42 L690.80 187.38 L691.60 187.47 L692.40 187.62 L693.20 187.67 L694.00 187.41 L694.80 187.54 L695.60 187.41 L696.40 187.68 L697.20 187.38 L698.00 187.57 L698.80 187.36 L699.60 187.35 L700.40 187.50 L701.20 187.69 L702.00 187.34 L702.80 187.51 L703.60 187.35 L704.40 187.59 L705.20 187.63 L706.00 187.37 L706.80 187.55 L707.60 187.63 L708.40 187.55 L709.20 187.46 L710.00 187.70 L710.80 184.35 L711.60 183.74 L712.40 183.71 L713.20 184.51 L714.00 187.41 L714.80 187.37 L715.60 187.35 L716.40 187.57 L717.20 187.42 L718.00 187.55 L718.80 187.40 L719.60 187.68 L720.40 187.35 L721.20 187.32 L722.00 187.50 L722.80 187.49 L723.60 187.49 L724.40 187.49 L725.20 187.69 L726.00 187.31 L726.80 187.61 L727.60 187.63 L728.40 187.66 L729.20 187.60 L730.00 187.37 L730.80 187.69 L731.60 187.66 L732.40 187.42 L733.20 187.62 L734.00 187.69 L734.80 187.46 L735.60 187.47 L736.40 187.49 L737.20 187.42 L738.00 187.66 L738.80 187.35 L739.60 187.41 L740.40 187.68 L741.20 187.65 L742.00 187.50 L742.80 187.50 L743.60 187.59 L744.40 187.65 L745.20 187.54 L746.00 187.65 L746.80 187.46 L747.60 187.36 L748.40 187.64 L749.20 187.47 L750.00 187.40 L750.80 187.63 L751.60 187.37 L752.40 187.32 L752.60 219.30 Z" fill="url(#g2)"/>
<rect x="340.9" y="157.10" width="411.70" height="62.20" fill="url(#q2)" clip-path="url(#c2)"/>
<text transform="translate(755.00,161.00) scale(0.9,1)" font-size="3.0" fill="#333" stroke="#333" stroke-width="0.02">20.000</text>
<rect x="754.2" y="162.50" width="20.6" height="0.35" fill="#a0a0a0"/>
<rect x="756.3" y="182.50" width="2.6" height="2.6" fill="#f6f8f6" stroke="#e0e0e0" stroke-width="0.25"/>
<rect x="762.5" y="182.50" width="2.6" height="2.6" fill="#d8f0fa" stroke="#d0e0e8" stroke-width="0.25"/>
<rect x="769.0" y="182.50" width="2.6" height="2.6" fill="#9cb8e8" stroke="#88a8d8" stroke-width="0.25"/>
<text transform="translate(755.00,193.10) scale(0.9,1)" font-size="3.0" fill="#333" stroke="#333" stroke-width="0.02">10.383 W</text>
<rect x="754.2" y="194.40" width="20.6" height="0.35" fill="#a0a0a0"/>
<rect x="754.6" y="198.80" width="19.6" height="5.4" rx="0.6" fill="#fdfdfd" stroke="#dadada" stroke-width="0.3"/>
<text transform="translate(764.40,202.40) scale(0.9,1)" font-size="2.8" fill="#222" text-anchor="middle" stroke="#222" stroke-width="0.02">Auto Fit</text>
<rect x="754.6" y="206.00" width="19.6" height="5.4" rx="0.6" fill="#fdfdfd" stroke="#dadada" stroke-width="0.3"/>
<text transform="translate(764.40,209.60) scale(0.9,1)" font-size="2.8" fill="#222" text-anchor="middle" stroke="#222" stroke-width="0.02">Reset</text>
<text transform="translate(755.00,217.90) scale(0.9,1)" font-size="3.0" fill="#333" stroke="#333" stroke-width="0.02">0.000</text>
<rect x="340.5" y="222.90" width="437.40" height="65.30" rx="1.2" fill="#f2f2f2"/>
<rect x="340.5" y="222.90" width="2" height="65.30" fill="#f2f2f2"/>
<rect x="341.6" y="224.45" width="5.4" height="5.2" rx="0.8" fill="#2a74b8"/>
<rect x="341.6" y="227.25" width="5.4" height="2.4" fill="#2e2e2e"/>
<rect x="342.6" y="225.35" width="2.4" height="1.1" fill="#d0e8ff"/>
<text transform="translate(349.00,228.35) scale(0.95,1)" font-size="3.6" fill="#555" stroke="#555" stroke-width="0.03">GPU Clock</text>
<path d="M771.10 225.75 L773.70 228.35 M773.70 225.75 L771.10 228.35" stroke="#555" stroke-width="0.4"/>
<rect x="340.9" y="231.20" width="411.70" height="56.80" fill="#ddf4fc"/>
<rect x="340.9" y="231.20" width="411.70" height="56.80" fill="url(#p3)"/>
<rect x="340.5" y="231.20" width="0.6" height="56.80" fill="#b4c8d4"/>
<rect x="360.20" y="263.00" width="0.8" height="7.90" fill="#163434"/>
<rect x="363.60" y="263.00" width="0.8" height="3.56" fill="#86aaaa"/>
<rect x="363.60" y="266.56" width="0.8" height="4.34" fill="#163434"/>
<rect x="365.80" y="251.80" width="0.8" height="19.10" fill="#163434"/>
<rect x="367.80" y="246.20" width="0.8" height="24.70" fill="#163434"/>
<rect x="368.60" y="257.40" width="0.8" height="6.07" fill="#86aaaa"/>
<rect x="368.60" y="263.47" width="0.8" height="7.43" fill="#163434"/>
<rect x="372.00" y="260.00" width="0.8" height="10.90" fill="#163434"/>
<rect x="374.90" y="263.00" width="0.8" height="7.90" fill="#163434"/>
<rect x="379.90" y="254.60" width="0.8" height="7.34" fill="#86aaaa"/>
<rect x="379.90" y="261.94" width="0.8" height="8.96" fill="#163434"/>
<rect x="381.30" y="254.60" width="0.8" height="16.30" fill="#163434"/>
<rect x="382.80" y="251.80" width="0.8" height="19.10" fill="#163434"/>
<rect x="387.00" y="254.60" width="0.8" height="7.34" fill="#86aaaa"/>
<rect x="387.00" y="261.94" width="0.8" height="8.96" fill="#163434"/>
<rect x="389.00" y="260.00" width="0.8" height="10.90" fill="#163434"/>
<rect x="390.40" y="263.00" width="0.8" height="7.90" fill="#163434"/>
<rect x="412.90" y="251.80" width="0.8" height="8.59" fill="#86aaaa"/>
<rect x="412.90" y="260.39" width="0.8" height="10.50" fill="#163434"/>
<rect x="427.00" y="260.00" width="0.8" height="10.90" fill="#163434"/>
<rect x="446.20" y="260.00" width="0.8" height="10.90" fill="#163434"/>
<rect x="457.50" y="254.60" width="0.8" height="7.34" fill="#86aaaa"/>
<rect x="457.50" y="261.94" width="0.8" height="8.96" fill="#163434"/>
<rect x="469.90" y="246.20" width="0.8" height="24.70" fill="#163434"/>
<rect x="470.80" y="257.40" width="0.8" height="13.50" fill="#163434"/>
<rect x="477.00" y="251.80" width="0.8" height="8.59" fill="#86aaaa"/>
<rect x="477.00" y="260.39" width="0.8" height="10.50" fill="#163434"/>
<rect x="478.60" y="251.80" width="0.8" height="19.10" fill="#163434"/>
<rect x="484.00" y="260.00" width="0.8" height="10.90" fill="#163434"/>
<rect x="505.50" y="257.40" width="0.8" height="6.07" fill="#86aaaa"/>
<rect x="505.50" y="263.47" width="0.8" height="7.43" fill="#163434"/>
<rect x="517.30" y="267.30" width="0.8" height="3.60" fill="#163434"/>
<rect x="547.80" y="251.80" width="0.8" height="19.10" fill="#163434"/>
<rect x="549.80" y="251.80" width="0.8" height="8.59" fill="#86aaaa"/>
<rect x="549.80" y="260.39" width="0.8" height="10.50" fill="#163434"/>
<rect x="551.20" y="246.20" width="0.8" height="24.70" fill="#163434"/>
<rect x="553.40" y="245.60" width="0.8" height="25.30" fill="#163434"/>
<rect x="558.20" y="263.00" width="0.8" height="3.56" fill="#86aaaa"/>
<rect x="558.20" y="266.56" width="0.8" height="4.34" fill="#163434"/>
<rect x="562.90" y="245.60" width="0.8" height="25.30" fill="#163434"/>
<rect x="565.80" y="254.50" width="0.8" height="16.40" fill="#163434"/>
<rect x="568.80" y="254.50" width="0.8" height="7.38" fill="#86aaaa"/>
<rect x="568.80" y="261.88" width="0.8" height="9.02" fill="#163434"/>
<rect x="571.70" y="251.50" width="0.8" height="19.40" fill="#163434"/>
<rect x="573.80" y="260.40" width="0.8" height="10.50" fill="#163434"/>
<rect x="579.10" y="267.80" width="0.8" height="1.39" fill="#86aaaa"/>
<rect x="579.10" y="269.19" width="0.8" height="1.70" fill="#163434"/>
<rect x="582.00" y="254.50" width="0.8" height="16.40" fill="#163434"/>
<rect x="584.40" y="267.80" width="0.8" height="3.10" fill="#163434"/>
<rect x="601.20" y="251.50" width="0.8" height="8.73" fill="#86aaaa"/>
<rect x="601.20" y="260.23" width="0.8" height="10.67" fill="#163434"/>
<rect x="602.70" y="260.40" width="0.8" height="10.50" fill="#163434"/>
<rect x="607.10" y="257.40" width="0.8" height="13.50" fill="#163434"/>
<rect x="626.90" y="245.60" width="0.8" height="11.39" fill="#86aaaa"/>
<rect x="626.90" y="256.99" width="0.8" height="13.91" fill="#163434"/>
<rect x="635.10" y="251.50" width="0.8" height="19.40" fill="#163434"/>
<rect x="636.60" y="251.50" width="0.8" height="19.40" fill="#163434"/>
<rect x="644.60" y="262.70" width="0.8" height="3.69" fill="#86aaaa"/>
<rect x="644.60" y="266.39" width="0.8" height="4.51" fill="#163434"/>
<rect x="652.80" y="262.70" width="0.8" height="8.20" fill="#163434"/>
<rect x="657.20" y="257.40" width="0.8" height="13.50" fill="#163434"/>
<rect x="660.20" y="254.50" width="0.8" height="7.38" fill="#86aaaa"/>
<rect x="660.20" y="261.88" width="0.8" height="9.02" fill="#163434"/>
<rect x="664.60" y="260.40" width="0.8" height="10.50" fill="#163434"/>
<rect x="667.00" y="251.50" width="0.8" height="19.40" fill="#163434"/>
<rect x="669.00" y="251.50" width="0.8" height="8.73" fill="#86aaaa"/>
<rect x="669.00" y="260.23" width="0.8" height="10.67" fill="#163434"/>
<rect x="674.90" y="259.80" width="0.8" height="11.10" fill="#163434"/>
<rect x="695.00" y="254.50" width="0.8" height="16.40" fill="#163434"/>
<rect x="699.40" y="245.60" width="0.8" height="11.39" fill="#86aaaa"/>
<rect x="699.40" y="256.99" width="0.8" height="13.91" fill="#163434"/>
<rect x="714.70" y="259.80" width="0.8" height="11.10" fill="#163434"/>
<rect x="718.30" y="262.70" width="0.8" height="8.20" fill="#163434"/>
<rect x="732.40" y="254.50" width="0.8" height="7.38" fill="#86aaaa"/>
<rect x="732.40" y="261.88" width="0.8" height="9.02" fill="#163434"/>
<rect x="738.30" y="263.30" width="0.8" height="7.60" fill="#163434"/>
<rect x="741.30" y="248.60" width="0.8" height="22.30" fill="#163434"/>
<rect x="744.20" y="245.60" width="0.8" height="11.39" fill="#86aaaa"/>
<rect x="744.20" y="256.99" width="0.8" height="13.91" fill="#163434"/>
<rect x="745.70" y="257.40" width="0.8" height="13.50" fill="#163434"/>
<rect x="747.80" y="254.50" width="0.8" height="16.40" fill="#163434"/>
<path d="M359.20 288.00 L359.20 270.80 L752.60 270.80 L752.60 288.00 Z" fill="url(#g3)"/>
<rect x="340.9" y="231.20" width="411.70" height="56.80" fill="url(#q3)" clip-path="url(#c3)"/>
<text transform="translate(755.00,235.10) scale(0.9,1)" font-size="3.0" fill="#333" stroke="#333" stroke-width="0.02">1000.0</text>
<rect x="754.2" y="236.60" width="20.6" height="0.35" fill="#a0a0a0"/>
<rect x="756.3" y="251.20" width="2.6" height="2.6" fill="#f6f8f6" stroke="#e0e0e0" stroke-width="0.25"/>
<rect x="762.5" y="251.20" width="2.6" height="2.6" fill="#d8f0fa" stroke="#d0e0e8" stroke-width="0.25"/>
<rect x="769.0" y="251.20" width="2.6" height="2.6" fill="#9cb8e8" stroke="#88a8d8" stroke-width="0.25"/>
<text transform="translate(755.00,261.80) scale(0.9,1)" font-size="3.0" fill="#333" stroke="#333" stroke-width="0.02">300.0 MHz</text>
<rect x="754.2" y="263.10" width="20.6" height="0.35" fill="#a0a0a0"/>
<rect x="754.6" y="267.50" width="19.6" height="5.4" rx="0.6" fill="#fdfdfd" stroke="#dadada" stroke-width="0.3"/>
<text transform="translate(764.40,271.10) scale(0.9,1)" font-size="2.8" fill="#222" text-anchor="middle" stroke="#222" stroke-width="0.02">Auto Fit</text>
<rect x="754.6" y="274.70" width="19.6" height="5.4" rx="0.6" fill="#fdfdfd" stroke="#dadada" stroke-width="0.3"/>
<text transform="translate(764.40,278.30) scale(0.9,1)" font-size="2.8" fill="#222" text-anchor="middle" stroke="#222" stroke-width="0.02">Reset</text>
<text transform="translate(755.00,286.60) scale(0.9,1)" font-size="3.0" fill="#333" stroke="#333" stroke-width="0.02">0.0</text>
<rect x="340.5" y="291.00" width="437.40" height="64.30" rx="1.2" fill="#f2f2f2"/>
<rect x="340.5" y="291.00" width="2" height="64.30" fill="#f2f2f2"/>
<rect x="341.6" y="292.50" width="5.4" height="5.2" rx="0.8" fill="#2a74b8"/>
<rect x="341.6" y="295.30" width="5.4" height="2.4" fill="#2e2e2e"/>
<rect x="342.6" y="293.40" width="2.4" height="1.1" fill="#d0e8ff"/>
<text transform="translate(349.00,296.40) scale(0.95,1)" font-size="3.6" fill="#555" stroke="#555" stroke-width="0.03">CPU GT Cores (Graphics)</text>
<path d="M771.10 293.80 L773.70 296.40 M773.70 293.80 L771.10 296.40" stroke="#555" stroke-width="0.4"/>
<rect x="340.9" y="299.20" width="411.70" height="55.90" fill="#ddf4fc"/>
<rect x="340.9" y="299.20" width="411.70" height="55.90" fill="url(#p4)"/>
<rect x="340.5" y="299.20" width="0.6" height="55.90" fill="#b4c8d4"/>
<path d="M359.20 355.10 L359.20 329.50 L360.00 328.33 L361.20 328.25 L362.40 327.89 L363.60 328.05 L364.80 328.08 L366.00 327.64 L367.20 327.70 L368.40 327.94 L369.60 327.95 L370.80 327.83 L372.00 327.70 L373.20 327.25 L374.40 327.32 L375.60 327.18 L376.80 327.19 L378.00 327.11 L379.20 327.60 L380.40 327.22 L381.60 326.85 L382.80 326.81 L384.00 327.23 L385.20 327.04 L386.40 326.84 L387.60 326.96 L388.80 326.79 L390.00 327.05 L391.20 326.74 L392.40 326.63 L393.60 326.91 L394.80 326.76 L396.00 326.12 L397.20 326.20 L398.40 326.02 L399.60 326.18 L400.80 325.99 L402.00 325.88 L403.20 325.82 L404.40 326.36 L405.60 325.87 L406.80 326.07 L408.00 325.73 L409.20 325.95 L410.40 325.70 L411.60 325.37 L412.80 325.53 L414.00 325.72 L415.20 325.48 L416.40 325.48 L417.60 325.05 L418.80 325.46 L420.00 325.39 L421.20 325.09 L422.40 325.40 L423.60 325.00 L424.80 324.69 L426.00 324.94 L427.20 325.05 L428.40 324.85 L429.60 324.75 L430.80 324.96 L432.00 324.91 L433.20 324.85 L434.40 324.67 L435.60 324.54 L436.80 324.56 L438.00 324.53 L439.20 324.58 L440.40 324.22 L441.60 324.01 L442.80 324.17 L444.00 324.20 L445.20 324.14 L446.40 324.45 L447.60 324.10 L448.80 324.27 L450.00 324.21 L451.20 324.16 L452.40 324.26 L453.60 324.37 L454.80 324.42 L456.00 324.43 L457.20 324.22 L458.40 324.31 L459.60 324.17 L460.80 324.57 L462.00 324.33 L463.20 323.97 L464.40 324.41 L465.60 324.19 L466.80 324.23 L468.00 324.37 L469.20 323.88 L470.40 324.36 L471.60 324.03 L472.80 324.46 L474.00 324.52 L475.20 323.96 L476.40 324.26 L477.60 324.52 L478.80 324.29 L480.00 324.25 L481.20 324.05 L482.40 324.48 L483.60 324.40 L484.80 323.89 L486.00 324.04 L487.20 324.45 L488.40 324.32 L489.60 324.31 L490.80 324.08 L492.00 324.12 L493.20 323.95 L494.40 323.97 L495.60 324.18 L496.80 324.03 L498.00 324.02 L499.20 324.01 L500.40 324.21 L501.60 323.99 L502.80 324.04 L504.00 323.90 L505.20 324.45 L506.40 323.93 L507.60 324.53 L508.80 324.00 L510.00 324.12 L511.20 324.18 L512.40 323.86 L513.60 324.13 L514.80 324.24 L516.00 323.98 L517.20 323.91 L518.40 324.10 L519.60 324.26 L520.80 324.21 L522.00 324.20 L523.20 324.01 L524.40 324.31 L525.60 324.24 L526.80 324.13 L528.00 324.25 L529.20 324.29 L530.40 323.96 L531.60 323.92 L532.80 324.16 L534.00 324.20 L535.20 324.38 L536.40 324.29 L537.60 324.40 L538.80 324.10 L540.00 324.10 L541.20 324.44 L542.40 323.86 L543.60 324.27 L544.80 323.91 L546.00 323.91 L547.20 323.83 L548.40 324.35 L549.60 324.20 L550.80 323.86 L552.00 324.48 L553.20 324.46 L554.40 324.09 L555.60 324.14 L556.80 323.84 L558.00 323.95 L559.20 324.11 L560.40 323.79 L561.60 324.12 L562.80 324.12 L564.00 324.00 L565.20 324.21 L566.40 324.23 L567.60 324.06 L568.80 324.23 L570.00 323.81 L571.20 324.00 L572.40 324.11 L573.60 324.40 L574.80 324.21 L576.00 324.19 L577.20 324.08 L578.40 324.07 L579.60 323.85 L580.80 323.79 L582.00 324.12 L583.20 324.15 L584.40 324.02 L585.60 323.76 L586.80 324.22 L588.00 324.09 L589.20 323.89 L590.40 324.34 L591.60 324.23 L592.80 323.77 L594.00 323.87 L595.20 324.09 L596.40 324.37 L597.60 323.82 L598.80 323.96 L600.00 323.87 L601.20 323.75 L602.40 323.82 L603.60 324.15 L604.80 324.33 L606.00 324.24 L607.20 324.08 L608.40 324.08 L609.60 324.31 L610.80 324.31 L612.00 323.99 L613.20 324.01 L614.40 324.19 L615.60 323.74 L616.80 323.98 L618.00 324.40 L619.20 324.14 L620.40 323.88 L621.60 324.21 L622.80 323.94 L624.00 324.42 L625.20 324.21 L626.40 323.83 L627.60 324.01 L628.80 323.95 L630.00 324.28 L631.20 324.07 L632.40 324.03 L633.60 324.23 L634.80 323.96 L636.00 324.04 L637.20 323.71 L638.40 324.01 L639.60 324.12 L640.80 324.32 L642.00 324.30 L643.20 323.87 L644.40 324.33 L645.60 324.33 L646.80 324.28 L648.00 324.03 L649.20 323.82 L650.40 323.97 L651.60 323.83 L652.80 324.35 L654.00 324.39 L655.20 323.85 L656.40 324.17 L657.60 323.89 L658.80 324.14 L660.00 324.27 L661.20 324.20 L662.40 324.32 L663.60 323.75 L664.80 323.98 L666.00 324.14 L667.20 324.07 L668.40 324.11 L669.60 324.34 L670.80 323.75 L672.00 323.97 L673.20 323.70 L674.40 324.07 L675.60 323.94 L676.80 324.20 L678.00 324.34 L679.20 323.72 L680.40 323.77 L681.60 324.15 L682.80 323.74 L684.00 323.79 L685.20 324.15 L686.40 323.94 L687.60 323.69 L688.80 324.01 L690.00 323.69 L691.20 324.19 L692.40 324.08 L693.60 323.85 L694.80 324.20 L696.00 324.14 L697.20 323.74 L698.40 324.01 L699.60 323.80 L700.80 324.18 L702.00 324.23 L703.20 324.10 L704.40 324.22 L705.60 323.66 L706.80 324.14 L708.00 323.95 L709.20 324.26 L710.40 323.97 L711.60 324.07 L712.80 324.06 L714.00 324.29 L715.20 324.25 L716.40 323.76 L717.60 324.09 L718.80 324.16 L720.00 324.20 L721.20 324.13 L722.40 324.16 L723.60 324.30 L724.80 323.86 L726.00 324.09 L727.20 324.21 L728.40 323.83 L729.60 324.26 L730.80 324.13 L732.00 323.73 L733.20 324.23 L734.40 324.01 L735.60 323.73 L736.80 323.75 L738.00 324.20 L739.20 324.07 L740.40 323.81 L741.60 324.05 L742.80 323.64 L744.00 324.16 L745.20 323.64 L746.40 323.95 L747.60 324.15 L748.80 323.99 L750.00 324.21 L751.20 323.81 L752.40 324.12 L752.60 355.10 Z" fill="url(#g4)"/>
<rect x="340.9" y="299.20" width="411.70" height="55.90" fill="url(#q4)" clip-path="url(#c4)"/>
<text transform="translate(755.00,303.10) scale(0.9,1)" font-size="3.0" fill="#333" stroke="#333" stroke-width="0.02">100</text>
<rect x="754.2" y="304.60" width="20.6" height="0.35" fill="#a0a0a0"/>
<rect x="756.3" y="318.30" width="2.6" height="2.6" fill="#f6f8f6" stroke="#e0e0e0" stroke-width="0.25"/>
<rect x="762.5" y="318.30" width="2.6" height="2.6" fill="#d8f0fa" stroke="#d0e0e8" stroke-width="0.25"/>
<rect x="769.0" y="318.30" width="2.6" height="2.6" fill="#9cb8e8" stroke="#88a8d8" stroke-width="0.25"/>
<text transform="translate(755.00,328.90) scale(0.9,1)" font-size="3.0" fill="#333" stroke="#333" stroke-width="0.02">56 °C</text>
<rect x="754.2" y="330.20" width="20.6" height="0.35" fill="#a0a0a0"/>
<rect x="754.6" y="334.60" width="19.6" height="5.4" rx="0.6" fill="#fdfdfd" stroke="#dadada" stroke-width="0.3"/>
<text transform="translate(764.40,338.20) scale(0.9,1)" font-size="2.8" fill="#222" text-anchor="middle" stroke="#222" stroke-width="0.02">Auto Fit</text>
<rect x="754.6" y="341.80" width="19.6" height="5.4" rx="0.6" fill="#fdfdfd" stroke="#dadada" stroke-width="0.3"/>
<text transform="translate(764.40,345.40) scale(0.9,1)" font-size="2.8" fill="#222" text-anchor="middle" stroke="#222" stroke-width="0.02">Reset</text>
<text transform="translate(755.00,353.70) scale(0.9,1)" font-size="3.0" fill="#333" stroke="#333" stroke-width="0.02">0</text>
<rect x="340.5" y="359.50" width="437.40" height="61.50" rx="1.2" fill="#f2f2f2"/>
<rect x="340.5" y="359.50" width="2" height="61.50" fill="#f2f2f2"/>
<rect x="341.6" y="361.25" width="5.4" height="5.2" rx="0.8" fill="#2a74b8"/>
<rect x="341.6" y="364.05" width="5.4" height="2.4" fill="#2e2e2e"/>
<rect x="342.6" y="362.15" width="2.4" height="1.1" fill="#d0e8ff"/>
<text transform="translate(349.00,365.15) scale(0.95,1)" font-size="3.6" fill="#555" stroke="#555" stroke-width="0.03">GT Cores Power</text>
<path d="M771.10 362.55 L773.70 365.15 M773.70 362.55 L771.10 365.15" stroke="#555" stroke-width="0.4"/>
<rect x="340.9" y="368.20" width="411.70" height="52.80" fill="#ddf4fc"/>
<rect x="340.9" y="368.20" width="411.70" height="52.80" fill="url(#p5)"/>
<rect x="340.5" y="368.20" width="0.6" height="52.80" fill="#b4c8d4"/>
<rect x="359.6" y="419.6" width="1.8" height="1.4" fill="#4a8ad0"/>
<text transform="translate(755.00,372.10) scale(0.9,1)" font-size="3.0" fill="#333" stroke="#333" stroke-width="0.02">10.000</text>
<rect x="754.2" y="373.60" width="20.6" height="0.35" fill="#a0a0a0"/>
<rect x="756.3" y="384.20" width="2.6" height="2.6" fill="#f6f8f6" stroke="#e0e0e0" stroke-width="0.25"/>
<rect x="762.5" y="384.20" width="2.6" height="2.6" fill="#d8f0fa" stroke="#d0e0e8" stroke-width="0.25"/>
<rect x="769.0" y="384.20" width="2.6" height="2.6" fill="#9cb8e8" stroke="#88a8d8" stroke-width="0.25"/>
<text transform="translate(755.00,394.80) scale(0.9,1)" font-size="3.0" fill="#333" stroke="#333" stroke-width="0.02">0.028 W</text>
<rect x="754.2" y="396.10" width="20.6" height="0.35" fill="#a0a0a0"/>
<rect x="754.6" y="400.50" width="19.6" height="5.4" rx="0.6" fill="#fdfdfd" stroke="#dadada" stroke-width="0.3"/>
<text transform="translate(764.40,404.10) scale(0.9,1)" font-size="2.8" fill="#222" text-anchor="middle" stroke="#222" stroke-width="0.02">Auto Fit</text>
<rect x="754.6" y="407.70" width="19.6" height="5.4" rx="0.6" fill="#fdfdfd" stroke="#dadada" stroke-width="0.3"/>
<text transform="translate(764.40,411.30) scale(0.9,1)" font-size="2.8" fill="#222" text-anchor="middle" stroke="#222" stroke-width="0.02">Reset</text>
<text transform="translate(755.00,419.60) scale(0.9,1)" font-size="3.0" fill="#333" stroke="#333" stroke-width="0.02">0.000</text>
<rect x="0" y="420.8" width="780" height="2.2" fill="#a4a4a4"/>
<rect x="0" y="0.9" width="340.5" height="8.1" fill="#f0f0f0"/>
<rect x="0" y="9" width="340.5" height="396" fill="#ffffff"/>
<rect x="0" y="8.9" width="340.5" height="0.4" fill="#e2e2e2"/>
<rect x="2.6" y="2.1" width="5.2" height="5.4" rx="0.8" fill="#2a6fb0"/>
<rect x="2.6" y="5.3" width="5.2" height="2.2" fill="#303030"/>
<rect x="3.5" y="3.0" width="2.2" height="1.2" fill="#cfe6ff"/>
<text transform="translate(8.80,6.10) scale(0.955,1)" font-size="3.75" fill="#2a2a2a">HWiNFO® 64 v8.06-5500 Sensor Status [30 values hidden]</text>
<rect x="304.3" y="4.5" width="3.2" height="0.45" fill="#333"/>
<rect x="318.1" y="3.2" width="2.7" height="2.7" fill="none" stroke="#333" stroke-width="0.45"/>
<path d="M332.2 3.1 L335.0 5.9 M335.0 3.1 L332.2 5.9" stroke="#333" stroke-width="0.45"/>
<text transform="translate(1.80,13.60) scale(0.9,1)" font-size="3.5" fill="#555" stroke="#555" stroke-width="0.03">Sensor</text>
<text transform="translate(89.90,13.60) scale(0.9,1)" font-size="3.5" fill="#555" text-anchor="end" stroke="#555" stroke-width="0.03">Current</text>
<text transform="translate(114.40,13.60) scale(0.9,1)" font-size="3.5" fill="#555" text-anchor="end" stroke="#555" stroke-width="0.03">Minimum</text>
<text transform="translate(138.80,13.60) scale(0.9,1)" font-size="3.5" fill="#555" text-anchor="end" stroke="#555" stroke-width="0.03">Maximum</text>
<text transform="translate(163.00,13.60) scale(0.9,1)" font-size="3.5" fill="#555" text-anchor="end" stroke="#555" stroke-width="0.03">Average</text>
<rect x="66.60" y="9.6" width="0.3" height="4.6" fill="#ececec"/>
<rect x="90.80" y="9.6" width="0.3" height="4.6" fill="#ececec"/>
<rect x="115.20" y="9.6" width="0.3" height="4.6" fill="#ececec"/>
<rect x="139.60" y="9.6" width="0.3" height="4.6" fill="#ececec"/>
<text transform="translate(171.80,13.60) scale(0.9,1)" font-size="3.5" fill="#555" stroke="#555" stroke-width="0.03">Sensor</text>
<text transform="translate(259.30,13.60) scale(0.9,1)" font-size="3.5" fill="#555" text-anchor="end" stroke="#555" stroke-width="0.03">Current</text>
<text transform="translate(283.90,13.60) scale(0.9,1)" font-size="3.5" fill="#555" text-anchor="end" stroke="#555" stroke-width="0.03">Minimum</text>
<text transform="translate(308.20,13.60) scale(0.9,1)" font-size="3.5" fill="#555" text-anchor="end" stroke="#555" stroke-width="0.03">Maximum</text>
<text transform="translate(332.40,13.60) scale(0.9,1)" font-size="3.5" fill="#555" text-anchor="end" stroke="#555" stroke-width="0.03">Average</text>
<rect x="236.60" y="9.6" width="0.3" height="4.6" fill="#ececec"/>
<rect x="260.80" y="9.6" width="0.3" height="4.6" fill="#ececec"/>
<rect x="285.20" y="9.6" width="0.3" height="4.6" fill="#ececec"/>
<rect x="309.60" y="9.6" width="0.3" height="4.6" fill="#ececec"/>
<rect x="169.9" y="9.3" width="0.7" height="395.7" fill="#a8a8a8"/>
<rect x="0" y="0.9" width="0.7" height="420" fill="#a8a8a8"/>
<rect x="11.40" y="14.46" width="152.90" height="5.07" fill="#e1e1e1"/>
<path d="M2.30 16.70 L4.00 18.20 L5.70 16.70" fill="none" stroke="#606060" stroke-width="0.4"/>
<rect x="8.20" y="15.00" width="2.4" height="4.0" fill="#505050"/>
<text transform="translate(12.00,18.75) scale(1.06,1)" font-size="3.4" fill="#1a1a1a" font-weight="bold">System</text>
<rect x="11.70" y="19.54" width="152.60" height="5.07" fill="#f0f0f0"/>
<path d="M7.90 22.17 A1.6 1.6 0 0 1 11.10 22.17" fill="none" stroke="#8a90a0" stroke-width="0.5"/><circle cx="8.60" cy="23.57" r="0.5" fill="#5a6272"/><circle cx="10.40" cy="23.57" r="0.5" fill="#5a6272"/><circle cx="9.50" cy="22.17" r="0.4" fill="#8a90a0"/>
<text transform="translate(12.40,23.62) scale(0.94,1)" font-size="3.35" fill="#222">Virtual Memory Committed</text>
<text transform="translate(89.90,23.62) scale(0.91,1)" font-size="3.35" fill="#222" text-anchor="end">4,936 MB</text>
<text transform="translate(114.40,23.62) scale(0.91,1)" font-size="3.35" fill="#222" text-anchor="end">4,832 MB</text>
<text transform="translate(138.80,23.62) scale(0.91,1)" font-size="3.35" fill="#222" text-anchor="end">5,020 MB</text>
<text transform="translate(163.00,23.62) scale(0.91,1)" font-size="3.35" fill="#222" text-anchor="end">4,887 MB</text>
<path d="M7.90 27.24 A1.6 1.6 0 0 1 11.10 27.24" fill="none" stroke="#8a90a0" stroke-width="0.5"/><circle cx="8.60" cy="28.64" r="0.5" fill="#5a6272"/><circle cx="10.40" cy="28.64" r="0.5" fill="#5a6272"/><circle cx="9.50" cy="27.24" r="0.4" fill="#8a90a0"/>
<text transform="translate(12.40,28.69) scale(0.94,1)" font-size="3.35" fill="#222">Virtual Memory Available</text>
<text transform="translate(89.90,28.69) scale(0.91,1)" font-size="3.35" fill="#222" text-anchor="end">13,316 MB</text>
<text transform="translate(114.40,28.69) scale(0.91,1)" font-size="3.35" fill="#222" text-anchor="end">12,119 MB</text>
<text transform="translate(138.80,28.69) scale(0.91,1)" font-size="3.35" fill="#222" text-anchor="end">13,320 MB</text>
<text transform="translate(163.00,28.69) scale(0.91,1)" font-size="3.35" fill="#222" text-anchor="end">11,365 MB</text>
<rect x="11.70" y="29.68" width="152.60" height="5.07" fill="#f0f0f0"/>
<path d="M7.90 32.31 A1.6 1.6 0 0 1 11.10 32.31" fill="none" stroke="#8a90a0" stroke-width="0.5"/><circle cx="8.60" cy="33.71" r="0.5" fill="#5a6272"/><circle cx="10.40" cy="33.71" r="0.5" fill="#5a6272"/><circle cx="9.50" cy="32.31" r="0.4" fill="#8a90a0"/>
<text transform="translate(12.40,33.76) scale(0.94,1)" font-size="3.35" fill="#222">Virtual Memory Load</text>
<text transform="translate(89.90,33.76) scale(0.91,1)" font-size="3.35" fill="#222" text-anchor="end">28.7 %</text>
<text transform="translate(114.40,33.76) scale(0.91,1)" font-size="3.35" fill="#222" text-anchor="end">28.1 %</text>
<text transform="translate(138.80,33.76) scale(0.91,1)" font-size="3.35" fill="#222" text-anchor="end">29.2 %</text>
<text transform="translate(163.00,33.76) scale(0.91,1)" font-size="3.35" fill="#222" text-anchor="end">28.4 %</text>
<circle cx="8.60" cy="36.68" r="0.48" fill="#5e6676"/><circle cx="10.20" cy="36.68" r="0.48" fill="#5e6676"/><circle cx="8.60" cy="38.58" r="0.48" fill="#5e6676"/><circle cx="10.20" cy="38.58" r="0.48" fill="#5e6676"/><circle cx="9.40" cy="35.68" r="0.4" fill="#a8aebb"/><circle cx="9.40" cy="37.63" r="0.4" fill="#a8aebb"/><circle cx="9.40" cy="39.48" r="0.4" fill="#a8aebb"/><circle cx="7.80" cy="37.63" r="0.4" fill="#a8aebb"/><circle cx="11.00" cy="37.63" r="0.4" fill="#a8aebb"/>
<text transform="translate(12.40,38.83) scale(0.94,1)" font-size="3.35" fill="#222">Physical Memory Used</text>
<text transform="translate(89.90,38.83) scale(0.91,1)" font-size="3.35" fill="#222" text-anchor="end">4,673 MB</text>
<text transform="translate(114.40,38.83) scale(0.91,1)" font-size="3.35" fill="#222" text-anchor="end">4,633 MB</text>
<text transform="translate(138.80,38.83) scale(0.91,1)" font-size="3.35" fill="#222" text-anchor="end">4,870 MB</text>
<text transform="translate(163.00,38.83) scale(0.91,1)" font-size="3.35" fill="#222" text-anchor="end">4,713 MB</text>
<rect x="11.70" y="39.81" width="152.60" height="5.07" fill="#f0f0f0"/>
<circle cx="8.60" cy="41.75" r="0.48" fill="#5e6676"/><circle cx="10.20" cy="41.75" r="0.48" fill="#5e6676"/><circle cx="8.60" cy="43.65" r="0.48" fill="#5e6676"/><circle cx="10.20" cy="43.65" r="0.48" fill="#5e6676"/><circle cx="9.40" cy="40.75" r="0.4" fill="#a8aebb"/><circle cx="9.40" cy="42.70" r="0.4" fill="#a8aebb"/><circle cx="9.40" cy="44.55" r="0.4" fill="#a8aebb"/><circle cx="7.80" cy="42.70" r="0.4" fill="#a8aebb"/><circle cx="11.00" cy="42.70" r="0.4" fill="#a8aebb"/>
<text transform="translate(12.40,43.90) scale(0.94,1)" font-size="3.35" fill="#222">Physical Memory Available</text>
<text transform="translate(89.90,43.90) scale(0.91,1)" font-size="3.35" fill="#222" text-anchor="end">11,455 MB</text>
<text transform="translate(114.40,43.90) scale(0.91,1)" font-size="3.35" fill="#222" text-anchor="end">11,249 MB</text>
<text transform="translate(138.80,43.90) scale(0.91,1)" font-size="3.35" fill="#222" text-anchor="end">11,494 MB</text>
<text transform="translate(163.00,43.90) scale(0.91,1)" font-size="3.35" fill="#222" text-anchor="end">11,415 MB</text>
<circle cx="8.60" cy="46.82" r="0.48" fill="#5e6676"/><circle cx="10.20" cy="46.82" r="0.48" fill="#5e6676"/><circle cx="8.60" cy="48.72" r="0.48" fill="#5e6676"/><circle cx="10.20" cy="48.72" r="0.48" fill="#5e6676"/><circle cx="9.40" cy="45.82" r="0.4" fill="#a8aebb"/><circle cx="9.40" cy="47.77" r="0.4" fill="#a8aebb"/><circle cx="9.40" cy="49.62" r="0.4" fill="#a8aebb"/><circle cx="7.80" cy="47.77" r="0.4" fill="#a8aebb"/><circle cx="11.00" cy="47.77" r="0.4" fill="#a8aebb"/>
<text transform="translate(12.40,48.97) scale(0.94,1)" font-size="3.35" fill="#222">Physical Memory Load</text>
<text transform="translate(89.90,48.97) scale(0.91,1)" font-size="3.35" fill="#222" text-anchor="end">28.9 %</text>
<text transform="translate(114.40,48.97) scale(0.91,1)" font-size="3.35" fill="#222" text-anchor="end">28.7 %</text>
<text transform="translate(138.80,48.97) scale(0.91,1)" font-size="3.35" fill="#222" text-anchor="end">30.2 %</text>
<text transform="translate(163.00,48.97) scale(0.91,1)" font-size="3.35" fill="#222" text-anchor="end">29.2 %</text>
<rect x="11.70" y="49.95" width="152.60" height="5.07" fill="#f0f0f0"/>
<circle cx="8.60" cy="51.89" r="0.48" fill="#5e6676"/><circle cx="10.20" cy="51.89" r="0.48" fill="#5e6676"/><circle cx="8.60" cy="53.79" r="0.48" fill="#5e6676"/><circle cx="10.20" cy="53.79" r="0.48" fill="#5e6676"/><circle cx="9.40" cy="50.89" r="0.4" fill="#a8aebb"/><circle cx="9.40" cy="52.84" r="0.4" fill="#a8aebb"/><circle cx="9.40" cy="54.69" r="0.4" fill="#a8aebb"/><circle cx="7.80" cy="52.84" r="0.4" fill="#a8aebb"/><circle cx="11.00" cy="52.84" r="0.4" fill="#a8aebb"/>
<text transform="translate(12.40,54.04) scale(0.94,1)" font-size="3.35" fill="#222">Page File Usage</text>
<text transform="translate(89.90,54.04) scale(0.91,1)" font-size="3.35" fill="#222" text-anchor="end">0.1 %</text>
<text transform="translate(114.40,54.04) scale(0.91,1)" font-size="3.35" fill="#222" text-anchor="end">0.1 %</text>
<text transform="translate(138.80,54.04) scale(0.91,1)" font-size="3.35" fill="#222" text-anchor="end">0.1 %</text>
<text transform="translate(163.00,54.04) scale(0.91,1)" font-size="3.35" fill="#222" text-anchor="end">0.1 %</text>
<rect x="11.40" y="60.09" width="152.90" height="5.07" fill="#e1e1e1"/>
<path d="M2.30 62.33 L4.00 63.83 L5.70 62.33" fill="none" stroke="#606060" stroke-width="0.4"/>
<rect x="8.20" y="60.63" width="2.4" height="4.0" fill="#505050"/>
<text transform="translate(12.00,64.38) scale(1.06,1)" font-size="3.4" fill="#1a1a1a" font-weight="bold">CPU [#0]: Intel Processor N100</text>
<path d="M8.20 66.50 L9.50 67.90 L8.20 69.30" fill="none" stroke="#606060" stroke-width="0.4"/>
<path d="M14.50 65.10 L13.00 68.00 L14.10 68.00 L13.50 70.30 L15.60 67.10 L14.50 67.10 Z" fill="#f0b400"/>
<text transform="translate(17.20,69.25) scale(0.94,1)" font-size="3.35" fill="#222">Core VIDs</text>
<text transform="translate(89.90,69.25) scale(0.91,1)" font-size="3.35" fill="#222" text-anchor="end">0.999 V</text>
<text transform="translate(114.40,69.25) scale(0.91,1)" font-size="3.35" fill="#222" text-anchor="end">0.585 V</text>
<text transform="translate(138.80,69.25) scale(0.91,1)" font-size="3.35" fill="#222" text-anchor="end">1.038 V</text>
<text transform="translate(163.00,69.25) scale(0.91,1)" font-size="3.35" fill="#222" text-anchor="end">1.001 V</text>
<rect x="11.70" y="70.24" width="152.60" height="5.07" fill="#f0f0f0"/>
<path d="M9.50 70.17 L8.00 73.07 L9.10 73.07 L8.50 75.37 L10.60 72.17 L9.50 72.17 Z" fill="#f0b400"/>
<text transform="translate(12.40,74.32) scale(0.94,1)" font-size="3.35" fill="#222">SA VID</text>
<text transform="translate(89.90,74.32) scale(0.91,1)" font-size="3.35" fill="#222" text-anchor="end">0.713 V</text>
<text transform="translate(114.40,74.32) scale(0.91,1)" font-size="3.35" fill="#222" text-anchor="end">0.713 V</text>
<text transform="translate(138.80,74.32) scale(0.91,1)" font-size="3.35" fill="#222" text-anchor="end">0.720 V</text>
<text transform="translate(163.00,74.32) scale(0.91,1)" font-size="3.35" fill="#222" text-anchor="end">0.715 V</text>
<path d="M8.20 76.64 L9.50 78.04 L8.20 79.44" fill="none" stroke="#606060" stroke-width="0.4"/>
<path d="M12.90 77.94 A1.6 1.6 0 0 1 16.10 77.94" fill="none" stroke="#8a90a0" stroke-width="0.5"/><circle cx="13.60" cy="79.34" r="0.5" fill="#5a6272"/><circle cx="15.40" cy="79.34" r="0.5" fill="#5a6272"/><circle cx="14.50" cy="77.94" r="0.4" fill="#8a90a0"/>
<text transform="translate(17.20,79.39) scale(0.94,1)" font-size="3.35" fill="#222">Core Clocks</text>
<text transform="translate(89.90,79.39) scale(0.91,1)" font-size="3.35" fill="#222" text-anchor="end">2,892.9 MHz</text>
<text transform="translate(114.40,79.39) scale(0.91,1)" font-size="3.35" fill="#222" text-anchor="end">1,496.3 MHz</text>
<text transform="translate(138.80,79.39) scale(0.91,1)" font-size="3.35" fill="#222" text-anchor="end">3,003.5 MHz</text>
<text transform="translate(163.00,79.39) scale(0.91,1)" font-size="3.35" fill="#222" text-anchor="end">2,801.9 MHz</text>
<rect x="11.70" y="80.38" width="152.60" height="5.07" fill="#f0f0f0"/>
<path d="M7.90 83.01 A1.6 1.6 0 0 1 11.10 83.01" fill="none" stroke="#8a90a0" stroke-width="0.5"/><circle cx="8.60" cy="84.41" r="0.5" fill="#5a6272"/><circle cx="10.40" cy="84.41" r="0.5" fill="#5a6272"/><circle cx="9.50" cy="83.01" r="0.4" fill="#8a90a0"/>
<text transform="translate(12.40,84.46) scale(0.94,1)" font-size="3.35" fill="#222">Bus Clock</text>
<text transform="translate(89.90,84.46) scale(0.91,1)" font-size="3.35" fill="#222" text-anchor="end">99.8 MHz</text>
<text transform="translate(114.40,84.46) scale(0.91,1)" font-size="3.35" fill="#222" text-anchor="end">99.7 MHz</text>
<text transform="translate(138.80,84.46) scale(0.91,1)" font-size="3.35" fill="#222" text-anchor="end">99.8 MHz</text>
<text transform="translate(163.00,84.46) scale(0.91,1)" font-size="3.35" fill="#222" text-anchor="end">99.8 MHz</text>
<path d="M7.90 88.08 A1.6 1.6 0 0 1 11.10 88.08" fill="none" stroke="#8a90a0" stroke-width="0.5"/><circle cx="8.60" cy="89.48" r="0.5" fill="#5a6272"/><circle cx="10.40" cy="89.48" r="0.5" fill="#5a6272"/><circle cx="9.50" cy="88.08" r="0.4" fill="#8a90a0"/>
<text transform="translate(12.40,89.53) scale(0.94,1)" font-size="3.35" fill="#222">Ring/LLC Clock</text>
<text transform="translate(89.90,89.53) scale(0.91,1)" font-size="3.35" fill="#222" text-anchor="end">2,294.4 MHz</text>
<text transform="translate(114.40,89.53) scale(0.91,1)" font-size="3.35" fill="#222" text-anchor="end">2,293.8 MHz</text>
<text transform="translate(138.80,89.53) scale(0.91,1)" font-size="3.35" fill="#222" text-anchor="end">3,394.9 MHz</text>
<text transform="translate(163.00,89.53) scale(0.91,1)" font-size="3.35" fill="#222" text-anchor="end">2,294.4 MHz</text>
<rect x="16.50" y="90.52" width="147.80" height="5.07" fill="#f0f0f0"/>
<path d="M7.30 92.75 L9.00 94.25 L10.70 92.75" fill="none" stroke="#606060" stroke-width="0.4"/>
<path d="M12.90 93.15 A1.6 1.6 0 0 1 16.10 93.15" fill="none" stroke="#8a90a0" stroke-width="0.5"/><circle cx="13.60" cy="94.55" r="0.5" fill="#5a6272"/><circle cx="15.40" cy="94.55" r="0.5" fill="#5a6272"/><circle cx="14.50" cy="93.15" r="0.4" fill="#8a90a0"/>
<text transform="translate(17.20,94.60) scale(0.94,1)" font-size="3.35" fill="#222">Core Effective Clocks</text>
<text transform="translate(89.90,94.60) scale(0.91,1)" font-size="3.35" fill="#222" text-anchor="end">2,888.3 MHz</text>
<text transform="translate(114.40,94.60) scale(0.91,1)" font-size="3.35" fill="#222" text-anchor="end">1,324.8 MHz</text>
<text transform="translate(138.80,94.60) scale(0.91,1)" font-size="3.35" fill="#222" text-anchor="end">3,002.6 MHz</text>
<text transform="translate(163.00,94.60) scale(0.91,1)" font-size="3.35" fill="#222" text-anchor="end">2,801.6 MHz</text>
<circle cx="13.60" cy="97.52" r="0.48" fill="#5e6676"/><circle cx="15.20" cy="97.52" r="0.48" fill="#5e6676"/><circle cx="13.60" cy="99.42" r="0.48" fill="#5e6676"/><circle cx="15.20" cy="99.42" r="0.48" fill="#5e6676"/><circle cx="14.40" cy="96.52" r="0.4" fill="#a8aebb"/><circle cx="14.40" cy="98.47" r="0.4" fill="#a8aebb"/><circle cx="14.40" cy="100.32" r="0.4" fill="#a8aebb"/><circle cx="12.80" cy="98.47" r="0.4" fill="#a8aebb"/><circle cx="16.00" cy="98.47" r="0.4" fill="#a8aebb"/>
<text transform="translate(17.20,99.67) scale(0.94,1)" font-size="3.35" fill="#222">Core 0 Effective Clock</text>
<text transform="translate(89.90,99.67) scale(0.91,1)" font-size="3.35" fill="#222" text-anchor="end">2,888.3 MHz</text>
<text transform="translate(114.40,99.67) scale(0.91,1)" font-size="3.35" fill="#222" text-anchor="end">1,343.4 MHz</text>
<text transform="translate(138.80,99.67) scale(0.91,1)" font-size="3.35" fill="#222" text-anchor="end">3,002.6 MHz</text>
<text transform="translate(163.00,99.67) scale(0.91,1)" font-size="3.35" fill="#222" text-anchor="end">2,806.2 MHz</text>
<rect x="16.50" y="100.66" width="147.80" height="5.07" fill="#f0f0f0"/>
<circle cx="13.60" cy="102.59" r="0.48" fill="#5e6676"/><circle cx="15.20" cy="102.59" r="0.48" fill="#5e6676"/><circle cx="13.60" cy="104.49" r="0.48" fill="#5e6676"/><circle cx="15.20" cy="104.49" r="0.48" fill="#5e6676"/><circle cx="14.40" cy="101.59" r="0.4" fill="#a8aebb"/><circle cx="14.40" cy="103.54" r="0.4" fill="#a8aebb"/><circle cx="14.40" cy="105.39" r="0.4" fill="#a8aebb"/><circle cx="12.80" cy="103.54" r="0.4" fill="#a8aebb"/><circle cx="16.00" cy="103.54" r="0.4" fill="#a8aebb"/>
<text transform="translate(17.20,104.74) scale(0.94,1)" font-size="3.35" fill="#222">Core 1 Effective Clock</text>
<text transform="translate(89.90,104.74) scale(0.91,1)" font-size="3.35" fill="#222" text-anchor="end">2,888.7 MHz</text>
<text transform="translate(114.40,104.74) scale(0.91,1)" font-size="3.35" fill="#222" text-anchor="end">1,403.4 MHz</text>
<text transform="translate(138.80,104.74) scale(0.91,1)" font-size="3.35" fill="#222" text-anchor="end">3,002.5 MHz</text>
<text transform="translate(163.00,104.74) scale(0.91,1)" font-size="3.35" fill="#222" text-anchor="end">2,806.3 MHz</text>
<circle cx="13.60" cy="107.66" r="0.48" fill="#5e6676"/><circle cx="15.20" cy="107.66" r="0.48" fill="#5e6676"/><circle cx="13.60" cy="109.56" r="0.48" fill="#5e6676"/><circle cx="15.20" cy="109.56" r="0.48" fill="#5e6676"/><circle cx="14.40" cy="106.66" r="0.4" fill="#a8aebb"/><circle cx="14.40" cy="108.61" r="0.4" fill="#a8aebb"/><circle cx="14.40" cy="110.46" r="0.4" fill="#a8aebb"/><circle cx="12.80" cy="108.61" r="0.4" fill="#a8aebb"/><circle cx="16.00" cy="108.61" r="0.4" fill="#a8aebb"/>
<text transform="translate(17.20,109.81) scale(0.94,1)" font-size="3.35" fill="#222">Core 2 Effective Clock</text>
<text transform="translate(89.90,109.81) scale(0.91,1)" font-size="3.35" fill="#222" text-anchor="end">2,891.1 MHz</text>
<text transform="translate(114.40,109.81) scale(0.91,1)" font-size="3.35" fill="#222" text-anchor="end">1,337.3 MHz</text>
<text transform="translate(138.80,109.81) scale(0.91,1)" font-size="3.35" fill="#222" text-anchor="end">3,002.6 MHz</text>
<text transform="translate(163.00,109.81) scale(0.91,1)" font-size="3.35" fill="#222" text-anchor="end">2,803.1 MHz</text>
<rect x="16.50" y="110.80" width="147.80" height="5.07" fill="#f0f0f0"/>
<circle cx="13.60" cy="112.73" r="0.48" fill="#5e6676"/><circle cx="15.20" cy="112.73" r="0.48" fill="#5e6676"/><circle cx="13.60" cy="114.63" r="0.48" fill="#5e6676"/><circle cx="15.20" cy="114.63" r="0.48" fill="#5e6676"/><circle cx="14.40" cy="111.73" r="0.4" fill="#a8aebb"/><circle cx="14.40" cy="113.68" r="0.4" fill="#a8aebb"/><circle cx="14.40" cy="115.53" r="0.4" fill="#a8aebb"/><circle cx="12.80" cy="113.68" r="0.4" fill="#a8aebb"/><circle cx="16.00" cy="113.68" r="0.4" fill="#a8aebb"/>
<text transform="translate(17.20,114.88) scale(0.94,1)" font-size="3.35" fill="#222">Core 3 Effective Clock</text>
<text transform="translate(89.90,114.88) scale(0.91,1)" font-size="3.35" fill="#222" text-anchor="end">2,891.5 MHz</text>
<text transform="translate(114.40,114.88) scale(0.91,1)" font-size="3.35" fill="#222" text-anchor="end">1,203.4 MHz</text>
<text transform="translate(138.80,114.88) scale(0.91,1)" font-size="3.35" fill="#222" text-anchor="end">3,002.6 MHz</text>
<text transform="translate(163.00,114.88) scale(0.91,1)" font-size="3.35" fill="#222" text-anchor="end">2,803.2 MHz</text>
<circle cx="8.60" cy="117.80" r="0.48" fill="#5e6676"/><circle cx="10.20" cy="117.80" r="0.48" fill="#5e6676"/><circle cx="8.60" cy="119.70" r="0.48" fill="#5e6676"/><circle cx="10.20" cy="119.70" r="0.48" fill="#5e6676"/><circle cx="9.40" cy="116.80" r="0.4" fill="#a8aebb"/><circle cx="9.40" cy="118.75" r="0.4" fill="#a8aebb"/><circle cx="9.40" cy="120.60" r="0.4" fill="#a8aebb"/><circle cx="7.80" cy="118.75" r="0.4" fill="#a8aebb"/><circle cx="11.00" cy="118.75" r="0.4" fill="#a8aebb"/>
<text transform="translate(12.40,119.95) scale(0.94,1)" font-size="3.35" fill="#222">Average Effective Clock</text>
<text transform="translate(89.90,119.95) scale(0.91,1)" font-size="3.35" fill="#222" text-anchor="end">2,890.3 MHz</text>
<text transform="translate(114.40,119.95) scale(0.91,1)" font-size="3.35" fill="#222" text-anchor="end">1,324.8 MHz</text>
<text transform="translate(138.80,119.95) scale(0.91,1)" font-size="3.35" fill="#222" text-anchor="end">3,002.1 MHz</text>
<text transform="translate(163.00,119.95) scale(0.91,1)" font-size="3.35" fill="#222" text-anchor="end">2,801.6 MHz</text>
<rect x="16.50" y="120.94" width="147.80" height="5.07" fill="#f0f0f0"/>
<path d="M7.30 123.17 L9.00 124.67 L10.70 123.17" fill="none" stroke="#606060" stroke-width="0.4"/>
<path d="M12.90 123.57 A1.6 1.6 0 0 1 16.10 123.57" fill="none" stroke="#8a90a0" stroke-width="0.5"/><circle cx="13.60" cy="124.97" r="0.5" fill="#5a6272"/><circle cx="15.40" cy="124.97" r="0.5" fill="#5a6272"/><circle cx="14.50" cy="123.57" r="0.4" fill="#8a90a0"/>
<text transform="translate(17.20,125.02) scale(0.94,1)" font-size="3.35" fill="#222">Core Usage</text>
<text transform="translate(89.90,125.02) scale(0.91,1)" font-size="3.35" fill="#222" text-anchor="end">100.0 %</text>
<text transform="translate(114.40,125.02) scale(0.91,1)" font-size="3.35" fill="#222" text-anchor="end">55.3 %</text>
<text transform="translate(138.80,125.02) scale(0.91,1)" font-size="3.35" fill="#222" text-anchor="end">100.0 %</text>
<text transform="translate(163.00,125.02) scale(0.91,1)" font-size="3.35" fill="#222" text-anchor="end">100.0 %</text>
<path d="M12.90 128.64 A1.6 1.6 0 0 1 16.10 128.64" fill="none" stroke="#8a90a0" stroke-width="0.5"/><circle cx="13.60" cy="130.04" r="0.5" fill="#5a6272"/><circle cx="15.40" cy="130.04" r="0.5" fill="#5a6272"/><circle cx="14.50" cy="128.64" r="0.4" fill="#8a90a0"/>
<text transform="translate(17.20,130.09) scale(0.94,1)" font-size="3.35" fill="#222">Core 0 Usage</text>
<text transform="translate(89.90,130.09) scale(0.91,1)" font-size="3.35" fill="#222" text-anchor="end">100.0 %</text>
<text transform="translate(114.40,130.09) scale(0.91,1)" font-size="3.35" fill="#222" text-anchor="end">50.4 %</text>
<text transform="translate(138.80,130.09) scale(0.91,1)" font-size="3.35" fill="#222" text-anchor="end">100.0 %</text>
<text transform="translate(163.00,130.09) scale(0.91,1)" font-size="3.35" fill="#222" text-anchor="end">100.0 %</text>
<rect x="16.50" y="131.08" width="147.80" height="5.07" fill="#f0f0f0"/>
<path d="M12.90 133.71 A1.6 1.6 0 0 1 16.10 133.71" fill="none" stroke="#8a90a0" stroke-width="0.5"/><circle cx="13.60" cy="135.11" r="0.5" fill="#5a6272"/><circle cx="15.40" cy="135.11" r="0.5" fill="#5a6272"/><circle cx="14.50" cy="133.71" r="0.4" fill="#8a90a0"/>
<text transform="translate(17.20,135.16) scale(0.94,1)" font-size="3.35" fill="#222">Core 1 Usage</text>
<text transform="translate(89.90,135.16) scale(0.91,1)" font-size="3.35" fill="#222" text-anchor="end">100.0 %</text>
<text transform="translate(114.40,135.16) scale(0.91,1)" font-size="3.35" fill="#222" text-anchor="end">61.6 %</text>
<text transform="translate(138.80,135.16) scale(0.91,1)" font-size="3.35" fill="#222" text-anchor="end">100.0 %</text>
<text transform="translate(163.00,135.16) scale(0.91,1)" font-size="3.35" fill="#222" text-anchor="end">100.0 %</text>
<path d="M12.90 138.78 A1.6 1.6 0 0 1 16.10 138.78" fill="none" stroke="#8a90a0" stroke-width="0.5"/><circle cx="13.60" cy="140.18" r="0.5" fill="#5a6272"/><circle cx="15.40" cy="140.18" r="0.5" fill="#5a6272"/><circle cx="14.50" cy="138.78" r="0.4" fill="#8a90a0"/>
<text transform="translate(17.20,140.23) scale(0.94,1)" font-size="3.35" fill="#222">Core 2 Usage</text>
<text transform="translate(89.90,140.23) scale(0.91,1)" font-size="3.35" fill="#222" text-anchor="end">100.0 %</text>
<text transform="translate(114.40,140.23) scale(0.91,1)" font-size="3.35" fill="#222" text-anchor="end">54.6 %</text>
<text transform="translate(138.80,140.23) scale(0.91,1)" font-size="3.35" fill="#222" text-anchor="end">100.0 %</text>
<text transform="translate(163.00,140.23) scale(0.91,1)" font-size="3.35" fill="#222" text-anchor="end">100.0 %</text>
<rect x="16.50" y="141.22" width="147.80" height="5.07" fill="#f0f0f0"/>
<path d="M12.90 143.85 A1.6 1.6 0 0 1 16.10 143.85" fill="none" stroke="#8a90a0" stroke-width="0.5"/><circle cx="13.60" cy="145.25" r="0.5" fill="#5a6272"/><circle cx="15.40" cy="145.25" r="0.5" fill="#5a6272"/><circle cx="14.50" cy="143.85" r="0.4" fill="#8a90a0"/>
<text transform="translate(17.20,145.30) scale(0.94,1)" font-size="3.35" fill="#222">Core 3 Usage</text>
<text transform="translate(89.90,145.30) scale(0.91,1)" font-size="3.35" fill="#222" text-anchor="end">100.0 %</text>
<text transform="translate(114.40,145.30) scale(0.91,1)" font-size="3.35" fill="#222" text-anchor="end">46.3 %</text>
<text transform="translate(138.80,145.30) scale(0.91,1)" font-size="3.35" fill="#222" text-anchor="end">100.0 %</text>
<text transform="translate(163.00,145.30) scale(0.91,1)" font-size="3.35" fill="#222" text-anchor="end">100.0 %</text>
<path d="M7.90 148.92 A1.6 1.6 0 0 1 11.10 148.92" fill="none" stroke="#8a90a0" stroke-width="0.5"/><circle cx="8.60" cy="150.32" r="0.5" fill="#5a6272"/><circle cx="10.40" cy="150.32" r="0.5" fill="#5a6272"/><circle cx="9.50" cy="148.92" r="0.4" fill="#8a90a0"/>
<text transform="translate(12.40,150.37) scale(0.94,1)" font-size="3.35" fill="#222">Max CPU/Thread Usage</text>
<text transform="translate(89.90,150.37) scale(0.91,1)" font-size="3.35" fill="#222" text-anchor="end">100.0 %</text>
<text transform="translate(114.40,150.37) scale(0.91,1)" font-size="3.35" fill="#222" text-anchor="end">61.6 %</text>
<text transform="translate(138.80,150.37) scale(0.91,1)" font-size="3.35" fill="#222" text-anchor="end">100.0 %</text>
<text transform="translate(163.00,150.37) scale(0.91,1)" font-size="3.35" fill="#222" text-anchor="end">100.0 %</text>
<rect x="11.70" y="151.36" width="152.60" height="5.07" fill="#f0f0f0"/>
<path d="M7.90 153.99 A1.6 1.6 0 0 1 11.10 153.99" fill="none" stroke="#8a90a0" stroke-width="0.5"/><circle cx="8.60" cy="155.39" r="0.5" fill="#5a6272"/><circle cx="10.40" cy="155.39" r="0.5" fill="#5a6272"/><circle cx="9.50" cy="153.99" r="0.4" fill="#8a90a0"/>
<text transform="translate(12.40,155.44) scale(0.94,1)" font-size="3.35" fill="#222">Total CPU Usage</text>
<text transform="translate(89.90,155.44) scale(0.91,1)" font-size="3.35" fill="#222" text-anchor="end">100.0 %</text>
<text transform="translate(114.40,155.44) scale(0.91,1)" font-size="3.35" fill="#222" text-anchor="end">55.3 %</text>
<text transform="translate(138.80,155.44) scale(0.91,1)" font-size="3.35" fill="#222" text-anchor="end">100.0 %</text>
<text transform="translate(163.00,155.44) scale(0.91,1)" font-size="3.35" fill="#222" text-anchor="end">100.0 %</text>
<path d="M7.90 159.06 A1.6 1.6 0 0 1 11.10 159.06" fill="none" stroke="#8a90a0" stroke-width="0.5"/><circle cx="8.60" cy="160.46" r="0.5" fill="#5a6272"/><circle cx="10.40" cy="160.46" r="0.5" fill="#5a6272"/><circle cx="9.50" cy="159.06" r="0.4" fill="#8a90a0"/>
<text transform="translate(12.40,160.51) scale(0.94,1)" font-size="3.35" fill="#222">On-Demand Clock Modulation</text>
<text transform="translate(89.90,160.51) scale(0.91,1)" font-size="3.35" fill="#222" text-anchor="end">100.0 %</text>
<text transform="translate(114.40,160.51) scale(0.91,1)" font-size="3.35" fill="#222" text-anchor="end">100.0 %</text>
<text transform="translate(138.80,160.51) scale(0.91,1)" font-size="3.35" fill="#222" text-anchor="end">100.0 %</text>
<text transform="translate(163.00,160.51) scale(0.91,1)" font-size="3.35" fill="#222" text-anchor="end">100.0 %</text>
<rect x="16.50" y="161.50" width="147.80" height="5.07" fill="#f0f0f0"/>
<path d="M8.20 162.83 L9.50 164.23 L8.20 165.63" fill="none" stroke="#606060" stroke-width="0.4"/>
<path d="M12.90 164.13 A1.6 1.6 0 0 1 16.10 164.13" fill="none" stroke="#8a90a0" stroke-width="0.5"/><circle cx="13.60" cy="165.53" r="0.5" fill="#5a6272"/><circle cx="15.40" cy="165.53" r="0.5" fill="#5a6272"/><circle cx="14.50" cy="164.13" r="0.4" fill="#8a90a0"/>
<text transform="translate(17.20,165.58) scale(0.94,1)" font-size="3.35" fill="#222">Core Utility</text>
<text transform="translate(89.90,165.58) scale(0.91,1)" font-size="3.35" fill="#222" text-anchor="end">362.9 %</text>
<text transform="translate(114.40,165.58) scale(0.91,1)" font-size="3.35" fill="#222" text-anchor="end">166.5 %</text>
<text transform="translate(138.80,165.58) scale(0.91,1)" font-size="3.35" fill="#222" text-anchor="end">360.0 %</text>
<text transform="translate(163.00,165.58) scale(0.91,1)" font-size="3.35" fill="#222" text-anchor="end">362.9 %</text>
<path d="M7.90 169.20 A1.6 1.6 0 0 1 11.10 169.20" fill="none" stroke="#8a90a0" stroke-width="0.5"/><circle cx="8.60" cy="170.60" r="0.5" fill="#5a6272"/><circle cx="10.40" cy="170.60" r="0.5" fill="#5a6272"/><circle cx="9.50" cy="169.20" r="0.4" fill="#8a90a0"/>
<text transform="translate(12.40,170.65) scale(0.94,1)" font-size="3.35" fill="#222">Total CPU Utility</text>
<text transform="translate(89.90,170.65) scale(0.91,1)" font-size="3.35" fill="#222" text-anchor="end">362.9 %</text>
<text transform="translate(114.40,170.65) scale(0.91,1)" font-size="3.35" fill="#222" text-anchor="end">166.5 %</text>
<text transform="translate(138.80,170.65) scale(0.91,1)" font-size="3.35" fill="#222" text-anchor="end">362.1 %</text>
<text transform="translate(163.00,170.65) scale(0.91,1)" font-size="3.35" fill="#222" text-anchor="end">362.9 %</text>
<rect x="16.50" y="171.64" width="147.80" height="5.07" fill="#f0f0f0"/>
<path d="M8.20 172.97 L9.50 174.37 L8.20 175.77" fill="none" stroke="#606060" stroke-width="0.4"/>
<circle cx="13.60" cy="173.57" r="0.48" fill="#5e6676"/><circle cx="15.20" cy="173.57" r="0.48" fill="#5e6676"/><circle cx="13.60" cy="175.47" r="0.48" fill="#5e6676"/><circle cx="15.20" cy="175.47" r="0.48" fill="#5e6676"/><circle cx="14.40" cy="172.57" r="0.4" fill="#a8aebb"/><circle cx="14.40" cy="174.52" r="0.4" fill="#a8aebb"/><circle cx="14.40" cy="176.37" r="0.4" fill="#a8aebb"/><circle cx="12.80" cy="174.52" r="0.4" fill="#a8aebb"/><circle cx="16.00" cy="174.52" r="0.4" fill="#a8aebb"/>
<text transform="translate(17.20,175.72) scale(0.94,1)" font-size="3.35" fill="#222">Core Ratios</text>
<text transform="translate(89.90,175.72) scale(0.91,1)" font-size="3.35" fill="#222" text-anchor="end">29.0 x</text>
<text transform="translate(114.40,175.72) scale(0.91,1)" font-size="3.35" fill="#222" text-anchor="end">15.0 x</text>
<text transform="translate(138.80,175.72) scale(0.91,1)" font-size="3.35" fill="#222" text-anchor="end">30.0 x</text>
<text transform="translate(163.00,175.72) scale(0.91,1)" font-size="3.35" fill="#222" text-anchor="end">29.0 x</text>
<circle cx="8.60" cy="178.64" r="0.48" fill="#5e6676"/><circle cx="10.20" cy="178.64" r="0.48" fill="#5e6676"/><circle cx="8.60" cy="180.54" r="0.48" fill="#5e6676"/><circle cx="10.20" cy="180.54" r="0.48" fill="#5e6676"/><circle cx="9.40" cy="177.64" r="0.4" fill="#a8aebb"/><circle cx="9.40" cy="179.59" r="0.4" fill="#a8aebb"/><circle cx="9.40" cy="181.44" r="0.4" fill="#a8aebb"/><circle cx="7.80" cy="179.59" r="0.4" fill="#a8aebb"/><circle cx="11.00" cy="179.59" r="0.4" fill="#a8aebb"/>
<text transform="translate(12.40,180.79) scale(0.94,1)" font-size="3.35" fill="#222">Uncore Ratio</text>
<text transform="translate(89.90,180.79) scale(0.91,1)" font-size="3.35" fill="#222" text-anchor="end">23.0 x</text>
<text transform="translate(114.40,180.79) scale(0.91,1)" font-size="3.35" fill="#222" text-anchor="end">23.0 x</text>
<text transform="translate(138.80,180.79) scale(0.91,1)" font-size="3.35" fill="#222" text-anchor="end">23.0 x</text>
<text transform="translate(163.00,180.79) scale(0.91,1)" font-size="3.35" fill="#222" text-anchor="end">23.0 x</text>
<rect x="11.40" y="186.84" width="152.90" height="5.07" fill="#e1e1e1"/>
<path d="M2.30 189.08 L4.00 190.58 L5.70 189.08" fill="none" stroke="#606060" stroke-width="0.4"/>
<rect x="8.20" y="187.38" width="2.4" height="4.0" fill="#505050"/>
<text transform="translate(12.00,191.13) scale(1.06,1)" font-size="3.4" fill="#1a1a1a" font-weight="bold">CPU [#0]: Intel Processor N100: DTS</text>
<rect x="16.50" y="191.92" width="147.80" height="5.07" fill="#f0f0f0"/>
<path d="M7.30 194.15 L9.00 195.65 L10.70 194.15" fill="none" stroke="#606060" stroke-width="0.4"/>
<path d="M14.45 193.65 L15.10 196.85 L13.80 196.85 Z" fill="#d0142a"/><rect x="14.20" y="193.35" width="0.5" height="0.6" fill="#f0a0a8"/>
<text transform="translate(17.20,196.00) scale(0.94,1)" font-size="3.35" fill="#222">Core Temperatures</text>
<text transform="translate(89.90,196.00) scale(0.91,1)" font-size="3.35" fill="#222" text-anchor="end">70 °C</text>
<text transform="translate(114.40,196.00) scale(0.91,1)" font-size="3.35" fill="#222" text-anchor="end">69 °C</text>
<text transform="translate(138.80,196.00) scale(0.91,1)" font-size="3.35" fill="#222" text-anchor="end">73 °C</text>
<text transform="translate(163.00,196.00) scale(0.91,1)" font-size="3.35" fill="#222" text-anchor="end">68 °C</text>
<path d="M14.45 198.72 L15.10 201.92 L13.80 201.92 Z" fill="#d0142a"/><rect x="14.20" y="198.42" width="0.5" height="0.6" fill="#f0a0a8"/>
<text transform="translate(17.20,201.07) scale(0.94,1)" font-size="3.35" fill="#222">Core 0</text>
<text transform="translate(89.90,201.07) scale(0.91,1)" font-size="3.35" fill="#222" text-anchor="end">70 °C</text>
<text transform="translate(114.40,201.07) scale(0.91,1)" font-size="3.35" fill="#222" text-anchor="end">69 °C</text>
<text transform="translate(138.80,201.07) scale(0.91,1)" font-size="3.35" fill="#222" text-anchor="end">73 °C</text>
<text transform="translate(163.00,201.07) scale(0.91,1)" font-size="3.35" fill="#222" text-anchor="end">68 °C</text>
<rect x="16.50" y="202.06" width="147.80" height="5.07" fill="#f0f0f0"/>
<path d="M14.45 203.79 L15.10 206.99 L13.80 206.99 Z" fill="#d0142a"/><rect x="14.20" y="203.49" width="0.5" height="0.6" fill="#f0a0a8"/>
<text transform="translate(17.20,206.14) scale(0.94,1)" font-size="3.35" fill="#222">Core 1</text>
<text transform="translate(89.90,206.14) scale(0.91,1)" font-size="3.35" fill="#222" text-anchor="end">70 °C</text>
<text transform="translate(114.40,206.14) scale(0.91,1)" font-size="3.35" fill="#222" text-anchor="end">69 °C</text>
<text transform="translate(138.80,206.14) scale(0.91,1)" font-size="3.35" fill="#222" text-anchor="end">73 °C</text>
<text transform="translate(163.00,206.14) scale(0.91,1)" font-size="3.35" fill="#222" text-anchor="end">68 °C</text>
<path d="M14.45 208.86 L15.10 212.06 L13.80 212.06 Z" fill="#d0142a"/><rect x="14.20" y="208.56" width="0.5" height="0.6" fill="#f0a0a8"/>
<text transform="translate(17.20,211.21) scale(0.94,1)" font-size="3.35" fill="#222">Core 2</text>
<text transform="translate(89.90,211.21) scale(0.91,1)" font-size="3.35" fill="#222" text-anchor="end">70 °C</text>
<text transform="translate(114.40,211.21) scale(0.91,1)" font-size="3.35" fill="#222" text-anchor="end">69 °C</text>
<text transform="translate(138.80,211.21) scale(0.91,1)" font-size="3.35" fill="#222" text-anchor="end">73 °C</text>
<text transform="translate(163.00,211.21) scale(0.91,1)" font-size="3.35" fill="#222" text-anchor="end">68 °C</text>
<rect x="16.50" y="212.20" width="147.80" height="5.07" fill="#f0f0f0"/>
<path d="M14.45 213.93 L15.10 217.13 L13.80 217.13 Z" fill="#d0142a"/><rect x="14.20" y="213.63" width="0.5" height="0.6" fill="#f0a0a8"/>
<text transform="translate(17.20,216.28) scale(0.94,1)" font-size="3.35" fill="#222">Core 3</text>
<text transform="translate(89.90,216.28) scale(0.91,1)" font-size="3.35" fill="#222" text-anchor="end">70 °C</text>
<text transform="translate(114.40,216.28) scale(0.91,1)" font-size="3.35" fill="#222" text-anchor="end">69 °C</text>
<text transform="translate(138.80,216.28) scale(0.91,1)" font-size="3.35" fill="#222" text-anchor="end">73 °C</text>
<text transform="translate(163.00,216.28) scale(0.91,1)" font-size="3.35" fill="#222" text-anchor="end">68 °C</text>
<path d="M7.30 219.50 L9.00 221.00 L10.70 219.50" fill="none" stroke="#606060" stroke-width="0.4"/>
<path d="M14.45 219.00 L15.10 222.20 L13.80 222.20 Z" fill="#d0142a"/><rect x="14.20" y="218.70" width="0.5" height="0.6" fill="#f0a0a8"/>
<text transform="translate(17.20,221.35) scale(0.94,1)" font-size="3.35" fill="#222">Core Distance to TjMAX</text>
<text transform="translate(89.90,221.35) scale(0.91,1)" font-size="3.35" fill="#222" text-anchor="end">35 °C</text>
<text transform="translate(114.40,221.35) scale(0.91,1)" font-size="3.35" fill="#222" text-anchor="end">32 °C</text>
<text transform="translate(138.80,221.35) scale(0.91,1)" font-size="3.35" fill="#222" text-anchor="end">45 °C</text>
<text transform="translate(163.00,221.35) scale(0.91,1)" font-size="3.35" fill="#222" text-anchor="end">37 °C</text>
<rect x="16.50" y="222.34" width="147.80" height="5.07" fill="#f0f0f0"/>
<path d="M14.45 224.07 L15.10 227.27 L13.80 227.27 Z" fill="#d0142a"/><rect x="14.20" y="223.77" width="0.5" height="0.6" fill="#f0a0a8"/>
<text transform="translate(17.20,226.42) scale(0.94,1)" font-size="3.35" fill="#222">Core 0 Distance to TjMAX</text>
<text transform="translate(89.90,226.42) scale(0.91,1)" font-size="3.35" fill="#222" text-anchor="end">35 °C</text>
<text transform="translate(114.40,226.42) scale(0.91,1)" font-size="3.35" fill="#222" text-anchor="end">32 °C</text>
<text transform="translate(138.80,226.42) scale(0.91,1)" font-size="3.35" fill="#222" text-anchor="end">45 °C</text>
<text transform="translate(163.00,226.42) scale(0.91,1)" font-size="3.35" fill="#222" text-anchor="end">36 °C</text>
<path d="M14.45 229.14 L15.10 232.34 L13.80 232.34 Z" fill="#d0142a"/><rect x="14.20" y="228.84" width="0.5" height="0.6" fill="#f0a0a8"/>
<text transform="translate(17.20,231.49) scale(0.94,1)" font-size="3.35" fill="#222">Core 1 Distance to TjMAX</text>
<text transform="translate(89.90,231.49) scale(0.91,1)" font-size="3.35" fill="#222" text-anchor="end">35 °C</text>
<text transform="translate(114.40,231.49) scale(0.91,1)" font-size="3.35" fill="#222" text-anchor="end">32 °C</text>
<text transform="translate(138.80,231.49) scale(0.91,1)" font-size="3.35" fill="#222" text-anchor="end">45 °C</text>
<text transform="translate(163.00,231.49) scale(0.91,1)" font-size="3.35" fill="#222" text-anchor="end">36 °C</text>
<rect x="16.50" y="232.48" width="147.80" height="5.07" fill="#f0f0f0"/>
<path d="M14.45 234.21 L15.10 237.41 L13.80 237.41 Z" fill="#d0142a"/><rect x="14.20" y="233.91" width="0.5" height="0.6" fill="#f0a0a8"/>
<text transform="translate(17.20,236.56) scale(0.94,1)" font-size="3.35" fill="#222">Core 2 Distance to TjMAX</text>
<text transform="translate(89.90,236.56) scale(0.91,1)" font-size="3.35" fill="#222" text-anchor="end">35 °C</text>
<text transform="translate(114.40,236.56) scale(0.91,1)" font-size="3.35" fill="#222" text-anchor="end">32 °C</text>
<text transform="translate(138.80,236.56) scale(0.91,1)" font-size="3.35" fill="#222" text-anchor="end">45 °C</text>
<text transform="translate(163.00,236.56) scale(0.91,1)" font-size="3.35" fill="#222" text-anchor="end">36 °C</text>
<path d="M14.45 239.28 L15.10 242.48 L13.80 242.48 Z" fill="#d0142a"/><rect x="14.20" y="238.98" width="0.5" height="0.6" fill="#f0a0a8"/>
<text transform="translate(17.20,241.63) scale(0.94,1)" font-size="3.35" fill="#222">Core 3 Distance to TjMAX</text>
<text transform="translate(89.90,241.63) scale(0.91,1)" font-size="3.35" fill="#222" text-anchor="end">35 °C</text>
<text transform="translate(114.40,241.63) scale(0.91,1)" font-size="3.35" fill="#222" text-anchor="end">32 °C</text>
<text transform="translate(138.80,241.63) scale(0.91,1)" font-size="3.35" fill="#222" text-anchor="end">45 °C</text>
<text transform="translate(163.00,241.63) scale(0.91,1)" font-size="3.35" fill="#222" text-anchor="end">36 °C</text>
<rect x="11.70" y="242.62" width="152.60" height="5.07" fill="#f0f0f0"/>
<path d="M9.45 244.35 L10.10 247.55 L8.80 247.55 Z" fill="#d0142a"/><rect x="9.20" y="244.05" width="0.5" height="0.6" fill="#f0a0a8"/>
<text transform="translate(12.40,246.70) scale(0.94,1)" font-size="3.35" fill="#222">CPU Package</text>
<text transform="translate(89.90,246.70) scale(0.91,1)" font-size="3.35" fill="#222" text-anchor="end">70 °C</text>
<text transform="translate(114.40,246.70) scale(0.91,1)" font-size="3.35" fill="#222" text-anchor="end">69 °C</text>
<text transform="translate(138.80,246.70) scale(0.91,1)" font-size="3.35" fill="#222" text-anchor="end">73 °C</text>
<text transform="translate(163.00,246.70) scale(0.91,1)" font-size="3.35" fill="#222" text-anchor="end">68 °C</text>
<path d="M9.45 249.42 L10.10 252.62 L8.80 252.62 Z" fill="#d0142a"/><rect x="9.20" y="249.12" width="0.5" height="0.6" fill="#f0a0a8"/>
<text transform="translate(12.40,251.77) scale(0.94,1)" font-size="3.35" fill="#222">Core Max</text>
<text transform="translate(89.90,251.77) scale(0.91,1)" font-size="3.35" fill="#222" text-anchor="end">70 °C</text>
<text transform="translate(114.40,251.77) scale(0.91,1)" font-size="3.35" fill="#222" text-anchor="end">69 °C</text>
<text transform="translate(138.80,251.77) scale(0.91,1)" font-size="3.35" fill="#222" text-anchor="end">73 °C</text>
<text transform="translate(163.00,251.77) scale(0.91,1)" font-size="3.35" fill="#222" text-anchor="end">69 °C</text>
<rect x="16.50" y="252.76" width="147.80" height="5.07" fill="#f0f0f0"/>
<path d="M7.30 254.99 L9.00 256.49 L10.70 254.99" fill="none" stroke="#606060" stroke-width="0.4"/>
<path d="M12.90 255.39 A1.6 1.6 0 0 1 16.10 255.39" fill="none" stroke="#8a90a0" stroke-width="0.5"/><circle cx="13.60" cy="256.79" r="0.5" fill="#5a6272"/><circle cx="15.40" cy="256.79" r="0.5" fill="#5a6272"/><circle cx="14.50" cy="255.39" r="0.4" fill="#8a90a0"/>
<text transform="translate(17.20,256.84) scale(0.94,1)" font-size="3.35" fill="#222">Core Thermal Throttling</text>
<text transform="translate(89.90,256.84) scale(0.91,1)" font-size="3.35" fill="#222" text-anchor="end">No</text>
<text transform="translate(114.40,256.84) scale(0.91,1)" font-size="3.35" fill="#222" text-anchor="end">No</text>
<text transform="translate(138.80,256.84) scale(0.91,1)" font-size="3.35" fill="#222" text-anchor="end">No</text>
<path d="M12.90 260.46 A1.6 1.6 0 0 1 16.10 260.46" fill="none" stroke="#8a90a0" stroke-width="0.5"/><circle cx="13.60" cy="261.86" r="0.5" fill="#5a6272"/><circle cx="15.40" cy="261.86" r="0.5" fill="#5a6272"/><circle cx="14.50" cy="260.46" r="0.4" fill="#8a90a0"/>
<text transform="translate(17.20,261.91) scale(0.94,1)" font-size="3.35" fill="#222">Core 0 Thermal Throttling</text>
<text transform="translate(89.90,261.91) scale(0.91,1)" font-size="3.35" fill="#222" text-anchor="end">No</text>
<text transform="translate(114.40,261.91) scale(0.91,1)" font-size="3.35" fill="#222" text-anchor="end">No</text>
<text transform="translate(138.80,261.91) scale(0.91,1)" font-size="3.35" fill="#222" text-anchor="end">No</text>
<rect x="16.50" y="262.89" width="147.80" height="5.07" fill="#f0f0f0"/>
<path d="M12.90 265.53 A1.6 1.6 0 0 1 16.10 265.53" fill="none" stroke="#8a90a0" stroke-width="0.5"/><circle cx="13.60" cy="266.93" r="0.5" fill="#5a6272"/><circle cx="15.40" cy="266.93" r="0.5" fill="#5a6272"/><circle cx="14.50" cy="265.53" r="0.4" fill="#8a90a0"/>
<text transform="translate(17.20,266.98) scale(0.94,1)" font-size="3.35" fill="#222">Core 1 Thermal Throttling</text>
<text transform="translate(89.90,266.98) scale(0.91,1)" font-size="3.35" fill="#222" text-anchor="end">No</text>
<text transform="translate(114.40,266.98) scale(0.91,1)" font-size="3.35" fill="#222" text-anchor="end">No</text>
<text transform="translate(138.80,266.98) scale(0.91,1)" font-size="3.35" fill="#222" text-anchor="end">No</text>
<path d="M12.90 270.60 A1.6 1.6 0 0 1 16.10 270.60" fill="none" stroke="#8a90a0" stroke-width="0.5"/><circle cx="13.60" cy="272.00" r="0.5" fill="#5a6272"/><circle cx="15.40" cy="272.00" r="0.5" fill="#5a6272"/><circle cx="14.50" cy="270.60" r="0.4" fill="#8a90a0"/>
<text transform="translate(17.20,272.05) scale(0.94,1)" font-size="3.35" fill="#222">Core 2 Thermal Throttling</text>
<text transform="translate(89.90,272.05) scale(0.91,1)" font-size="3.35" fill="#222" text-anchor="end">No</text>
<text transform="translate(114.40,272.05) scale(0.91,1)" font-size="3.35" fill="#222" text-anchor="end">No</text>
<text transform="translate(138.80,272.05) scale(0.91,1)" font-size="3.35" fill="#222" text-anchor="end">No</text>
<rect x="16.50" y="273.03" width="147.80" height="5.07" fill="#f0f0f0"/>
<path d="M12.90 275.67 A1.6 1.6 0 0 1 16.10 275.67" fill="none" stroke="#8a90a0" stroke-width="0.5"/><circle cx="13.60" cy="277.07" r="0.5" fill="#5a6272"/><circle cx="15.40" cy="277.07" r="0.5" fill="#5a6272"/><circle cx="14.50" cy="275.67" r="0.4" fill="#8a90a0"/>
<text transform="translate(17.20,277.12) scale(0.94,1)" font-size="3.35" fill="#222">Core 3 Thermal Throttling</text>
<text transform="translate(89.90,277.12) scale(0.91,1)" font-size="3.35" fill="#222" text-anchor="end">No</text>
<text transform="translate(114.40,277.12) scale(0.91,1)" font-size="3.35" fill="#222" text-anchor="end">No</text>
<text transform="translate(138.80,277.12) scale(0.91,1)" font-size="3.35" fill="#222" text-anchor="end">No</text>
<path d="M7.30 280.34 L9.00 281.84 L10.70 280.34" fill="none" stroke="#606060" stroke-width="0.4"/>
<path d="M12.90 280.74 A1.6 1.6 0 0 1 16.10 280.74" fill="none" stroke="#8a90a0" stroke-width="0.5"/><circle cx="13.60" cy="282.14" r="0.5" fill="#5a6272"/><circle cx="15.40" cy="282.14" r="0.5" fill="#5a6272"/><circle cx="14.50" cy="280.74" r="0.4" fill="#8a90a0"/>
<text transform="translate(17.20,282.19) scale(0.94,1)" font-size="3.35" fill="#222">Core Critical Temperature</text>
<text transform="translate(89.90,282.19) scale(0.91,1)" font-size="3.35" fill="#222" text-anchor="end">No</text>
<text transform="translate(114.40,282.19) scale(0.91,1)" font-size="3.35" fill="#222" text-anchor="end">No</text>
<text transform="translate(138.80,282.19) scale(0.91,1)" font-size="3.35" fill="#222" text-anchor="end">No</text>
<rect x="16.50" y="283.18" width="147.80" height="5.07" fill="#f0f0f0"/>
<path d="M12.90 285.81 A1.6 1.6 0 0 1 16.10 285.81" fill="none" stroke="#8a90a0" stroke-width="0.5"/><circle cx="13.60" cy="287.21" r="0.5" fill="#5a6272"/><circle cx="15.40" cy="287.21" r="0.5" fill="#5a6272"/><circle cx="14.50" cy="285.81" r="0.4" fill="#8a90a0"/>
<text transform="translate(17.20,287.26) scale(0.94,1)" font-size="3.35" fill="#222">Core 0 Critical Temperature</text>
<text transform="translate(89.90,287.26) scale(0.91,1)" font-size="3.35" fill="#222" text-anchor="end">No</text>
<text transform="translate(114.40,287.26) scale(0.91,1)" font-size="3.35" fill="#222" text-anchor="end">No</text>
<text transform="translate(138.80,287.26) scale(0.91,1)" font-size="3.35" fill="#222" text-anchor="end">No</text>
<path d="M12.90 290.88 A1.6 1.6 0 0 1 16.10 290.88" fill="none" stroke="#8a90a0" stroke-width="0.5"/><circle cx="13.60" cy="292.28" r="0.5" fill="#5a6272"/><circle cx="15.40" cy="292.28" r="0.5" fill="#5a6272"/><circle cx="14.50" cy="290.88" r="0.4" fill="#8a90a0"/>
<text transform="translate(17.20,292.33) scale(0.94,1)" font-size="3.35" fill="#222">Core 1 Critical Temperature</text>
<text transform="translate(89.90,292.33) scale(0.91,1)" font-size="3.35" fill="#222" text-anchor="end">No</text>
<text transform="translate(114.40,292.33) scale(0.91,1)" font-size="3.35" fill="#222" text-anchor="end">No</text>
<text transform="translate(138.80,292.33) scale(0.91,1)" font-size="3.35" fill="#222" text-anchor="end">No</text>
<rect x="16.50" y="293.31" width="147.80" height="5.07" fill="#f0f0f0"/>
<path d="M12.90 295.95 A1.6 1.6 0 0 1 16.10 295.95" fill="none" stroke="#8a90a0" stroke-width="0.5"/><circle cx="13.60" cy="297.35" r="0.5" fill="#5a6272"/><circle cx="15.40" cy="297.35" r="0.5" fill="#5a6272"/><circle cx="14.50" cy="295.95" r="0.4" fill="#8a90a0"/>
<text transform="translate(17.20,297.40) scale(0.94,1)" font-size="3.35" fill="#222">Core 2 Critical Temperature</text>
<text transform="translate(89.90,297.40) scale(0.91,1)" font-size="3.35" fill="#222" text-anchor="end">No</text>
<text transform="translate(114.40,297.40) scale(0.91,1)" font-size="3.35" fill="#222" text-anchor="end">No</text>
<text transform="translate(138.80,297.40) scale(0.91,1)" font-size="3.35" fill="#222" text-anchor="end">No</text>
<path d="M12.90 301.02 A1.6 1.6 0 0 1 16.10 301.02" fill="none" stroke="#8a90a0" stroke-width="0.5"/><circle cx="13.60" cy="302.42" r="0.5" fill="#5a6272"/><circle cx="15.40" cy="302.42" r="0.5" fill="#5a6272"/><circle cx="14.50" cy="301.02" r="0.4" fill="#8a90a0"/>
<text transform="translate(17.20,302.47) scale(0.94,1)" font-size="3.35" fill="#222">Core 3 Critical Temperature</text>
<text transform="translate(89.90,302.47) scale(0.91,1)" font-size="3.35" fill="#222" text-anchor="end">No</text>
<text transform="translate(114.40,302.47) scale(0.91,1)" font-size="3.35" fill="#222" text-anchor="end">No</text>
<text transform="translate(138.80,302.47) scale(0.91,1)" font-size="3.35" fill="#222" text-anchor="end">No</text>
<rect x="16.50" y="303.45" width="147.80" height="5.07" fill="#f0f0f0"/>
<path d="M7.30 305.69 L9.00 307.19 L10.70 305.69" fill="none" stroke="#606060" stroke-width="0.4"/>
<circle cx="13.60" cy="305.39" r="0.48" fill="#5e6676"/><circle cx="15.20" cy="305.39" r="0.48" fill="#5e6676"/><circle cx="13.60" cy="307.29" r="0.48" fill="#5e6676"/><circle cx="15.20" cy="307.29" r="0.48" fill="#5e6676"/><circle cx="14.40" cy="304.39" r="0.4" fill="#a8aebb"/><circle cx="14.40" cy="306.34" r="0.4" fill="#a8aebb"/><circle cx="14.40" cy="308.19" r="0.4" fill="#a8aebb"/><circle cx="12.80" cy="306.34" r="0.4" fill="#a8aebb"/><circle cx="16.00" cy="306.34" r="0.4" fill="#a8aebb"/>
<text transform="translate(17.20,307.54) scale(0.94,1)" font-size="3.35" fill="#222">Core Power Limit Exceeded</text>
<text transform="translate(89.90,307.54) scale(0.91,1)" font-size="3.35" fill="#222" text-anchor="end">No</text>
<text transform="translate(114.40,307.54) scale(0.91,1)" font-size="3.35" fill="#222" text-anchor="end">No</text>
<text transform="translate(138.80,307.54) scale(0.91,1)" font-size="3.35" fill="#222" text-anchor="end">No</text>
<circle cx="13.60" cy="310.46" r="0.48" fill="#5e6676"/><circle cx="15.20" cy="310.46" r="0.48" fill="#5e6676"/><circle cx="13.60" cy="312.36" r="0.48" fill="#5e6676"/><circle cx="15.20" cy="312.36" r="0.48" fill="#5e6676"/><circle cx="14.40" cy="309.46" r="0.4" fill="#a8aebb"/><circle cx="14.40" cy="311.41" r="0.4" fill="#a8aebb"/><circle cx="14.40" cy="313.26" r="0.4" fill="#a8aebb"/><circle cx="12.80" cy="311.41" r="0.4" fill="#a8aebb"/><circle cx="16.00" cy="311.41" r="0.4" fill="#a8aebb"/>
<text transform="translate(17.20,312.61) scale(0.94,1)" font-size="3.35" fill="#222">Core 0 Power Limit Exceeded</text>
<text transform="translate(89.90,312.61) scale(0.91,1)" font-size="3.35" fill="#222" text-anchor="end">No</text>
<text transform="translate(114.40,312.61) scale(0.91,1)" font-size="3.35" fill="#222" text-anchor="end">No</text>
<text transform="translate(138.80,312.61) scale(0.91,1)" font-size="3.35" fill="#222" text-anchor="end">No</text>
<rect x="16.50" y="313.59" width="147.80" height="5.07" fill="#f0f0f0"/>
<circle cx="13.60" cy="315.53" r="0.48" fill="#5e6676"/><circle cx="15.20" cy="315.53" r="0.48" fill="#5e6676"/><circle cx="13.60" cy="317.43" r="0.48" fill="#5e6676"/><circle cx="15.20" cy="317.43" r="0.48" fill="#5e6676"/><circle cx="14.40" cy="314.53" r="0.4" fill="#a8aebb"/><circle cx="14.40" cy="316.48" r="0.4" fill="#a8aebb"/><circle cx="14.40" cy="318.33" r="0.4" fill="#a8aebb"/><circle cx="12.80" cy="316.48" r="0.4" fill="#a8aebb"/><circle cx="16.00" cy="316.48" r="0.4" fill="#a8aebb"/>
<text transform="translate(17.20,317.68) scale(0.94,1)" font-size="3.35" fill="#222">Core 1 Power Limit Exceeded</text>
<text transform="translate(89.90,317.68) scale(0.91,1)" font-size="3.35" fill="#222" text-anchor="end">No</text>
<text transform="translate(114.40,317.68) scale(0.91,1)" font-size="3.35" fill="#222" text-anchor="end">No</text>
<text transform="translate(138.80,317.68) scale(0.91,1)" font-size="3.35" fill="#222" text-anchor="end">No</text>
<circle cx="13.60" cy="320.60" r="0.48" fill="#5e6676"/><circle cx="15.20" cy="320.60" r="0.48" fill="#5e6676"/><circle cx="13.60" cy="322.50" r="0.48" fill="#5e6676"/><circle cx="15.20" cy="322.50" r="0.48" fill="#5e6676"/><circle cx="14.40" cy="319.60" r="0.4" fill="#a8aebb"/><circle cx="14.40" cy="321.55" r="0.4" fill="#a8aebb"/><circle cx="14.40" cy="323.40" r="0.4" fill="#a8aebb"/><circle cx="12.80" cy="321.55" r="0.4" fill="#a8aebb"/><circle cx="16.00" cy="321.55" r="0.4" fill="#a8aebb"/>
<text transform="translate(17.20,322.75) scale(0.94,1)" font-size="3.35" fill="#222">Core 2 Power Limit Exceeded</text>
<text transform="translate(89.90,322.75) scale(0.91,1)" font-size="3.35" fill="#222" text-anchor="end">No</text>
<text transform="translate(114.40,322.75) scale(0.91,1)" font-size="3.35" fill="#222" text-anchor="end">No</text>
<text transform="translate(138.80,322.75) scale(0.91,1)" font-size="3.35" fill="#222" text-anchor="end">No</text>
<rect x="16.50" y="323.74" width="147.80" height="5.07" fill="#f0f0f0"/>
<circle cx="13.60" cy="325.67" r="0.48" fill="#5e6676"/><circle cx="15.20" cy="325.67" r="0.48" fill="#5e6676"/><circle cx="13.60" cy="327.57" r="0.48" fill="#5e6676"/><circle cx="15.20" cy="327.57" r="0.48" fill="#5e6676"/><circle cx="14.40" cy="324.67" r="0.4" fill="#a8aebb"/><circle cx="14.40" cy="326.62" r="0.4" fill="#a8aebb"/><circle cx="14.40" cy="328.47" r="0.4" fill="#a8aebb"/><circle cx="12.80" cy="326.62" r="0.4" fill="#a8aebb"/><circle cx="16.00" cy="326.62" r="0.4" fill="#a8aebb"/>
<text transform="translate(17.20,327.82) scale(0.94,1)" font-size="3.35" fill="#222">Core 3 Power Limit Exceeded</text>
<text transform="translate(89.90,327.82) scale(0.91,1)" font-size="3.35" fill="#222" text-anchor="end">No</text>
<text transform="translate(114.40,327.82) scale(0.91,1)" font-size="3.35" fill="#222" text-anchor="end">No</text>
<text transform="translate(138.80,327.82) scale(0.91,1)" font-size="3.35" fill="#222" text-anchor="end">No</text>
<path d="M7.90 331.44 A1.6 1.6 0 0 1 11.10 331.44" fill="none" stroke="#8a90a0" stroke-width="0.5"/><circle cx="8.60" cy="332.84" r="0.5" fill="#5a6272"/><circle cx="10.40" cy="332.84" r="0.5" fill="#5a6272"/><circle cx="9.50" cy="331.44" r="0.4" fill="#8a90a0"/>
<text transform="translate(12.40,332.89) scale(0.94,1)" font-size="3.35" fill="#222">Package/Ring Thermal Throttling</text>
<text transform="translate(89.90,332.89) scale(0.91,1)" font-size="3.35" fill="#222" text-anchor="end">No</text>
<text transform="translate(114.40,332.89) scale(0.91,1)" font-size="3.35" fill="#222" text-anchor="end">No</text>
<text transform="translate(138.80,332.89) scale(0.91,1)" font-size="3.35" fill="#222" text-anchor="end">No</text>
<rect x="11.70" y="333.88" width="152.60" height="5.07" fill="#f0f0f0"/>
<path d="M7.90 336.51 A1.6 1.6 0 0 1 11.10 336.51" fill="none" stroke="#8a90a0" stroke-width="0.5"/><circle cx="8.60" cy="337.91" r="0.5" fill="#5a6272"/><circle cx="10.40" cy="337.91" r="0.5" fill="#5a6272"/><circle cx="9.50" cy="336.51" r="0.4" fill="#8a90a0"/>
<text transform="translate(12.40,337.96) scale(0.94,1)" font-size="3.35" fill="#222">Package/Ring Critical Temperature</text>
<text transform="translate(89.90,337.96) scale(0.91,1)" font-size="3.35" fill="#222" text-anchor="end">No</text>
<text transform="translate(114.40,337.96) scale(0.91,1)" font-size="3.35" fill="#222" text-anchor="end">No</text>
<text transform="translate(138.80,337.96) scale(0.91,1)" font-size="3.35" fill="#222" text-anchor="end">No</text>
<path d="M7.90 341.58 A1.6 1.6 0 0 1 11.10 341.58" fill="none" stroke="#8a90a0" stroke-width="0.5"/><circle cx="8.60" cy="342.98" r="0.5" fill="#5a6272"/><circle cx="10.40" cy="342.98" r="0.5" fill="#5a6272"/><circle cx="9.50" cy="341.58" r="0.4" fill="#8a90a0"/>
<text transform="translate(12.40,343.03) scale(0.94,1)" font-size="3.35" fill="#222">Package/Ring Power Limit Exceeded</text>
<text transform="translate(89.90,343.03) scale(0.91,1)" font-size="3.35" fill="#222" text-anchor="end">No</text>
<text transform="translate(114.40,343.03) scale(0.91,1)" font-size="3.35" fill="#222" text-anchor="end">No</text>
<text transform="translate(138.80,343.03) scale(0.91,1)" font-size="3.35" fill="#222" text-anchor="end">No</text>
<rect x="11.40" y="349.08" width="152.90" height="5.07" fill="#e1e1e1"/>
<path d="M2.30 351.32 L4.00 352.82 L5.70 351.32" fill="none" stroke="#606060" stroke-width="0.4"/>
<rect x="8.20" y="349.62" width="2.4" height="4.0" fill="#505050"/>
<text transform="translate(12.00,353.37) scale(1.06,1)" font-size="3.4" fill="#1a1a1a" font-weight="bold">CPU [#0]: Intel Processor N100: Enhanced</text>
<rect x="11.70" y="354.15" width="152.60" height="5.07" fill="#f0f0f0"/>
<path d="M9.45 355.89 L10.10 359.09 L8.80 359.09 Z" fill="#d0142a"/><rect x="9.20" y="355.59" width="0.5" height="0.6" fill="#f0a0a8"/>
<text transform="translate(12.40,358.24) scale(0.94,1)" font-size="3.35" fill="#222">CPU Package</text>
<text transform="translate(89.90,358.24) scale(0.91,1)" font-size="3.35" fill="#222" text-anchor="end">70 °C</text>
<text transform="translate(114.40,358.24) scale(0.91,1)" font-size="3.35" fill="#222" text-anchor="end">69 °C</text>
<text transform="translate(138.80,358.24) scale(0.91,1)" font-size="3.35" fill="#222" text-anchor="end">73 °C</text>
<text transform="translate(163.00,358.24) scale(0.91,1)" font-size="3.35" fill="#222" text-anchor="end">68 °C</text>
<path d="M9.45 360.96 L10.10 364.16 L8.80 364.16 Z" fill="#d0142a"/><rect x="9.20" y="360.66" width="0.5" height="0.6" fill="#f0a0a8"/>
<text transform="translate(12.40,363.31) scale(0.94,1)" font-size="3.35" fill="#222">CPU IA Cores</text>
<text transform="translate(89.90,363.31) scale(0.91,1)" font-size="3.35" fill="#222" text-anchor="end">70 °C</text>
<text transform="translate(114.40,363.31) scale(0.91,1)" font-size="3.35" fill="#222" text-anchor="end">69 °C</text>
<text transform="translate(138.80,363.31) scale(0.91,1)" font-size="3.35" fill="#222" text-anchor="end">73 °C</text>
<text transform="translate(163.00,363.31) scale(0.91,1)" font-size="3.35" fill="#222" text-anchor="end">68 °C</text>
<rect x="11.70" y="364.30" width="152.60" height="5.07" fill="#f0f0f0"/>
<path d="M9.45 366.03 L10.10 369.23 L8.80 369.23 Z" fill="#d0142a"/><rect x="9.20" y="365.73" width="0.5" height="0.6" fill="#f0a0a8"/>
<text transform="translate(12.40,368.38) scale(0.94,1)" font-size="3.35" fill="#222">CPU GT Cores (Graphics)</text>
<text transform="translate(89.90,368.38) scale(0.91,1)" font-size="3.35" fill="#222" text-anchor="end">56 °C</text>
<text transform="translate(114.40,368.38) scale(0.91,1)" font-size="3.35" fill="#222" text-anchor="end">46 °C</text>
<text transform="translate(138.80,368.38) scale(0.91,1)" font-size="3.35" fill="#222" text-anchor="end">58 °C</text>
<text transform="translate(163.00,368.38) scale(0.91,1)" font-size="3.35" fill="#222" text-anchor="end">55 °C</text>
<path d="M9.50 369.30 L8.00 372.20 L9.10 372.20 L8.50 374.50 L10.60 371.30 L9.50 371.30 Z" fill="#f0b400"/>
<text transform="translate(12.40,373.45) scale(0.94,1)" font-size="3.35" fill="#222">CPU VID</text>
<text transform="translate(89.90,373.45) scale(0.91,1)" font-size="3.35" fill="#222" text-anchor="end">0.348 V</text>
<text transform="translate(114.40,373.45) scale(0.91,1)" font-size="3.35" fill="#222" text-anchor="end">0.273 V</text>
<text transform="translate(138.80,373.45) scale(0.91,1)" font-size="3.35" fill="#222" text-anchor="end">0.392 V</text>
<text transform="translate(163.00,373.45) scale(0.91,1)" font-size="3.35" fill="#222" text-anchor="end">0.344 V</text>
<rect x="16.50" y="374.44" width="147.80" height="5.07" fill="#f0f0f0"/>
<path d="M8.20 375.77 L9.50 377.17 L8.20 378.57" fill="none" stroke="#606060" stroke-width="0.4"/>
<path d="M14.50 374.37 L13.00 377.27 L14.10 377.27 L13.50 379.57 L15.60 376.37 L14.50 376.37 Z" fill="#f0b400"/>
<text transform="translate(17.20,378.52) scale(0.94,1)" font-size="3.35" fill="#222">Voltage Offsets</text>
<text transform="translate(114.40,378.52) scale(0.91,1)" font-size="3.35" fill="#222" text-anchor="end">0.000 V</text>
<text transform="translate(138.80,378.52) scale(0.91,1)" font-size="3.35" fill="#222" text-anchor="end">0.000 V</text>
<path d="M9.50 379.44 L8.00 382.34 L9.10 382.34 L8.50 384.64 L10.60 381.44 L9.50 381.44 Z" fill="#f0b400"/>
<text transform="translate(12.40,383.59) scale(0.94,1)" font-size="3.35" fill="#222">VDDQ TX Voltage</text>
<text transform="translate(89.90,383.59) scale(0.91,1)" font-size="3.35" fill="#222" text-anchor="end">0.800 V</text>
<text transform="translate(114.40,383.59) scale(0.91,1)" font-size="3.35" fill="#222" text-anchor="end">0.800 V</text>
<text transform="translate(138.80,383.59) scale(0.91,1)" font-size="3.35" fill="#222" text-anchor="end">0.800 V</text>
<text transform="translate(163.00,383.59) scale(0.91,1)" font-size="3.35" fill="#222" text-anchor="end">0.800 V</text>
<rect x="11.70" y="384.57" width="152.60" height="5.07" fill="#f0f0f0"/>
<path d="M9.50 384.51 L8.00 387.41 L9.10 387.41 L8.50 389.71 L10.60 386.51 L9.50 386.51 Z" fill="#f0b400"/>
<text transform="translate(12.40,388.66) scale(0.94,1)" font-size="3.35" fill="#222">VR VCC Current (SVID IOUT)</text>
<text transform="translate(89.90,388.66) scale(0.91,1)" font-size="3.35" fill="#222" text-anchor="end">7.660 A</text>
<text transform="translate(114.40,388.66) scale(0.91,1)" font-size="3.35" fill="#222" text-anchor="end">6.631 A</text>
<text transform="translate(138.80,388.66) scale(0.91,1)" font-size="3.35" fill="#222" text-anchor="end">10.971 A</text>
<text transform="translate(163.00,388.66) scale(0.91,1)" font-size="3.35" fill="#222" text-anchor="end">7.694 A</text>
<path d="M9.50 389.58 L8.00 392.48 L9.10 392.48 L8.50 394.78 L10.60 391.58 L9.50 391.58 Z" fill="#f0b400"/>
<text transform="translate(12.40,393.73) scale(0.94,1)" font-size="3.35" fill="#222">CPU Package Power</text>
<text transform="translate(89.90,393.73) scale(0.91,1)" font-size="3.35" fill="#222" text-anchor="end">10.321 W</text>
<text transform="translate(114.40,393.73) scale(0.91,1)" font-size="3.35" fill="#222" text-anchor="end">6.670 W</text>
<text transform="translate(138.80,393.73) scale(0.91,1)" font-size="3.35" fill="#222" text-anchor="end">11.784 W</text>
<text transform="translate(163.00,393.73) scale(0.91,1)" font-size="3.35" fill="#222" text-anchor="end">10.257 W</text>
<rect x="11.70" y="394.71" width="152.60" height="5.07" fill="#f0f0f0"/>
<path d="M9.50 394.65 L8.00 397.55 L9.10 397.55 L8.50 399.85 L10.60 396.65 L9.50 396.65 Z" fill="#f0b400"/>
<text transform="translate(12.40,398.80) scale(0.94,1)" font-size="3.35" fill="#222">IA Cores Power</text>
<text transform="translate(89.90,398.80) scale(0.91,1)" font-size="3.35" fill="#222" text-anchor="end">6.066 W</text>
<text transform="translate(114.40,398.80) scale(0.91,1)" font-size="3.35" fill="#222" text-anchor="end">3.293 W</text>
<text transform="translate(138.80,398.80) scale(0.91,1)" font-size="3.35" fill="#222" text-anchor="end">8.114 W</text>
<text transform="translate(163.00,398.80) scale(0.91,1)" font-size="3.35" fill="#222" text-anchor="end">6.071 W</text>
<path d="M179.50 14.40 L178.00 17.30 L179.10 17.30 L178.50 19.60 L180.60 16.40 L179.50 16.40 Z" fill="#f0b400"/>
<text transform="translate(182.40,18.55) scale(0.94,1)" font-size="3.35" fill="#222">GT Cores Power</text>
<text transform="translate(259.30,18.55) scale(0.91,1)" font-size="3.35" fill="#222" text-anchor="end">0.303 W</text>
<text transform="translate(283.90,18.55) scale(0.91,1)" font-size="3.35" fill="#222" text-anchor="end">0.019 W</text>
<text transform="translate(308.20,18.55) scale(0.91,1)" font-size="3.35" fill="#222" text-anchor="end">0.276 W</text>
<text transform="translate(332.40,18.55) scale(0.91,1)" font-size="3.35" fill="#222" text-anchor="end">0.013 W</text>
<rect x="181.70" y="19.54" width="151.60" height="5.07" fill="#f0f0f0"/>
<path d="M179.50 19.47 L178.00 22.37 L179.10 22.37 L178.50 24.67 L180.60 21.47 L179.50 21.47 Z" fill="#f0b400"/>
<text transform="translate(182.40,23.62) scale(0.94,1)" font-size="3.35" fill="#222">System Agent Power</text>
<text transform="translate(259.30,23.62) scale(0.91,1)" font-size="3.35" fill="#222" text-anchor="end">2.399 W</text>
<text transform="translate(283.90,23.62) scale(0.91,1)" font-size="3.35" fill="#222" text-anchor="end">2.855 W</text>
<text transform="translate(308.20,23.62) scale(0.91,1)" font-size="3.35" fill="#222" text-anchor="end">3.462 W</text>
<text transform="translate(332.40,23.62) scale(0.91,1)" font-size="3.35" fill="#222" text-anchor="end">2.309 W</text>
<path d="M179.50 24.54 L178.00 27.44 L179.10 27.44 L178.50 29.74 L180.60 26.54 L179.50 26.54 Z" fill="#f0b400"/>
<text transform="translate(182.40,28.69) scale(0.94,1)" font-size="3.35" fill="#222">Rest-of-Chip Power</text>
<text transform="translate(259.30,28.69) scale(0.91,1)" font-size="3.35" fill="#222" text-anchor="end">0.210 W</text>
<text transform="translate(283.90,28.69) scale(0.91,1)" font-size="3.35" fill="#222" text-anchor="end">0.200 W</text>
<text transform="translate(308.20,28.69) scale(0.91,1)" font-size="3.35" fill="#222" text-anchor="end">0.239 W</text>
<text transform="translate(332.40,28.69) scale(0.91,1)" font-size="3.35" fill="#222" text-anchor="end">0.205 W</text>
<rect x="181.70" y="29.68" width="151.60" height="5.07" fill="#f0f0f0"/>
<path d="M179.50 29.61 L178.00 32.51 L179.10 32.51 L178.50 34.81 L180.60 31.61 L179.50 31.61 Z" fill="#f0b400"/>
<text transform="translate(182.40,33.76) scale(0.94,1)" font-size="3.35" fill="#222">PCH Power</text>
<text transform="translate(259.30,33.76) scale(0.91,1)" font-size="3.35" fill="#222" text-anchor="end">0.084 W</text>
<text transform="translate(283.90,33.76) scale(0.91,1)" font-size="3.35" fill="#222" text-anchor="end">0.082 W</text>
<text transform="translate(308.20,33.76) scale(0.91,1)" font-size="3.35" fill="#222" text-anchor="end">0.085 W</text>
<text transform="translate(332.40,33.76) scale(0.91,1)" font-size="3.35" fill="#222" text-anchor="end">0.084 W</text>
<path d="M179.50 34.68 L178.00 37.58 L179.10 37.58 L178.50 39.88 L180.60 36.68 L179.50 36.68 Z" fill="#f0b400"/>
<text transform="translate(182.40,38.83) scale(0.94,1)" font-size="3.35" fill="#222">PL1 Power Limit (Static)</text>
<text transform="translate(259.30,38.83) scale(0.91,1)" font-size="3.35" fill="#222" text-anchor="end">15.0 W</text>
<text transform="translate(283.90,38.83) scale(0.91,1)" font-size="3.35" fill="#222" text-anchor="end">15.0 W</text>
<text transform="translate(308.20,38.83) scale(0.91,1)" font-size="3.35" fill="#222" text-anchor="end">15.0 W</text>
<text transform="translate(332.40,38.83) scale(0.91,1)" font-size="3.35" fill="#222" text-anchor="end">15.0 W</text>
<rect x="181.70" y="39.81" width="151.60" height="5.07" fill="#f0f0f0"/>
<path d="M179.50 39.75 L178.00 42.65 L179.10 42.65 L178.50 44.95 L180.60 41.75 L179.50 41.75 Z" fill="#f0b400"/>
<text transform="translate(182.40,43.90) scale(0.94,1)" font-size="3.35" fill="#222">PL2 Power Limit (Static)</text>
<text transform="translate(259.30,43.90) scale(0.91,1)" font-size="3.35" fill="#222" text-anchor="end">25.0 W</text>
<text transform="translate(283.90,43.90) scale(0.91,1)" font-size="3.35" fill="#222" text-anchor="end">25.0 W</text>
<text transform="translate(308.20,43.90) scale(0.91,1)" font-size="3.35" fill="#222" text-anchor="end">25.0 W</text>
<text transform="translate(332.40,43.90) scale(0.91,1)" font-size="3.35" fill="#222" text-anchor="end">25.0 W</text>
<circle cx="178.60" cy="46.82" r="0.48" fill="#5e6676"/><circle cx="180.20" cy="46.82" r="0.48" fill="#5e6676"/><circle cx="178.60" cy="48.72" r="0.48" fill="#5e6676"/><circle cx="180.20" cy="48.72" r="0.48" fill="#5e6676"/><circle cx="179.40" cy="45.82" r="0.4" fill="#a8aebb"/><circle cx="179.40" cy="47.77" r="0.4" fill="#a8aebb"/><circle cx="179.40" cy="49.62" r="0.4" fill="#a8aebb"/><circle cx="177.80" cy="47.77" r="0.4" fill="#a8aebb"/><circle cx="181.00" cy="47.77" r="0.4" fill="#a8aebb"/>
<text transform="translate(182.40,48.97) scale(0.94,1)" font-size="3.35" fill="#222">GPU Clock</text>
<text transform="translate(259.30,48.97) scale(0.91,1)" font-size="3.35" fill="#222" text-anchor="end">300.0 MHz</text>
<text transform="translate(283.90,48.97) scale(0.91,1)" font-size="3.35" fill="#222" text-anchor="end">300.0 MHz</text>
<text transform="translate(308.20,48.97) scale(0.91,1)" font-size="3.35" fill="#222" text-anchor="end">750.0 MHz</text>
<text transform="translate(332.40,48.97) scale(0.91,1)" font-size="3.35" fill="#222" text-anchor="end">343.3 MHz</text>
<rect x="181.70" y="49.95" width="151.60" height="5.07" fill="#f0f0f0"/>
<circle cx="178.60" cy="51.89" r="0.48" fill="#5e6676"/><circle cx="180.20" cy="51.89" r="0.48" fill="#5e6676"/><circle cx="178.60" cy="53.79" r="0.48" fill="#5e6676"/><circle cx="180.20" cy="53.79" r="0.48" fill="#5e6676"/><circle cx="179.40" cy="50.89" r="0.4" fill="#a8aebb"/><circle cx="179.40" cy="52.84" r="0.4" fill="#a8aebb"/><circle cx="179.40" cy="54.69" r="0.4" fill="#a8aebb"/><circle cx="177.80" cy="52.84" r="0.4" fill="#a8aebb"/><circle cx="181.00" cy="52.84" r="0.4" fill="#a8aebb"/>
<text transform="translate(182.40,54.04) scale(0.94,1)" font-size="3.35" fill="#222">GPU D3D Usage</text>
<text transform="translate(259.30,54.04) scale(0.91,1)" font-size="3.35" fill="#222" text-anchor="end">3.7 %</text>
<text transform="translate(283.90,54.04) scale(0.91,1)" font-size="3.35" fill="#222" text-anchor="end">1.3 %</text>
<text transform="translate(308.20,54.04) scale(0.91,1)" font-size="3.35" fill="#222" text-anchor="end">34.9 %</text>
<text transform="translate(332.40,54.04) scale(0.91,1)" font-size="3.35" fill="#222" text-anchor="end">3.5 %</text>
<path d="M178.20 56.36 L179.50 57.76 L178.20 59.16" fill="none" stroke="#606060" stroke-width="0.4"/>
<circle cx="183.60" cy="56.96" r="0.48" fill="#5e6676"/><circle cx="185.20" cy="56.96" r="0.48" fill="#5e6676"/><circle cx="183.60" cy="58.86" r="0.48" fill="#5e6676"/><circle cx="185.20" cy="58.86" r="0.48" fill="#5e6676"/><circle cx="184.40" cy="55.96" r="0.4" fill="#a8aebb"/><circle cx="184.40" cy="57.91" r="0.4" fill="#a8aebb"/><circle cx="184.40" cy="59.76" r="0.4" fill="#a8aebb"/><circle cx="182.80" cy="57.91" r="0.4" fill="#a8aebb"/><circle cx="186.00" cy="57.91" r="0.4" fill="#a8aebb"/>
<text transform="translate(187.20,59.11) scale(0.94,1)" font-size="3.35" fill="#222">GPU/D3D Utilisation</text>
<text transform="translate(283.90,59.11) scale(0.91,1)" font-size="3.35" fill="#222" text-anchor="end">0.0 %</text>
<text transform="translate(308.20,59.11) scale(0.91,1)" font-size="3.35" fill="#222" text-anchor="end">0.3 %</text>
<rect x="181.70" y="60.09" width="151.60" height="5.07" fill="#f0f0f0"/>
<circle cx="178.60" cy="62.03" r="0.48" fill="#5e6676"/><circle cx="180.20" cy="62.03" r="0.48" fill="#5e6676"/><circle cx="178.60" cy="63.93" r="0.48" fill="#5e6676"/><circle cx="180.20" cy="63.93" r="0.48" fill="#5e6676"/><circle cx="179.40" cy="61.03" r="0.4" fill="#a8aebb"/><circle cx="179.40" cy="62.98" r="0.4" fill="#a8aebb"/><circle cx="179.40" cy="64.83" r="0.4" fill="#a8aebb"/><circle cx="177.80" cy="62.98" r="0.4" fill="#a8aebb"/><circle cx="181.00" cy="62.98" r="0.4" fill="#a8aebb"/>
<text transform="translate(182.40,64.18) scale(0.94,1)" font-size="3.35" fill="#222">GPU D3D Memory Dynamic</text>
<text transform="translate(259.30,64.18) scale(0.91,1)" font-size="3.35" fill="#222" text-anchor="end">564 MB</text>
<text transform="translate(283.90,64.18) scale(0.91,1)" font-size="3.35" fill="#222" text-anchor="end">532 MB</text>
<text transform="translate(308.20,64.18) scale(0.91,1)" font-size="3.35" fill="#222" text-anchor="end">665 MB</text>
<text transform="translate(332.40,64.18) scale(0.91,1)" font-size="3.35" fill="#222" text-anchor="end">563 MB</text>
<rect x="181.40" y="70.24" width="151.90" height="5.07" fill="#e1e1e1"/>
<path d="M172.30 72.47 L174.00 73.97 L175.70 72.47" fill="none" stroke="#606060" stroke-width="0.4"/>
<rect x="178.20" y="70.77" width="2.4" height="4.0" fill="#505050"/>
<text transform="translate(182.00,74.52) scale(1.06,1)" font-size="3.4" fill="#1a1a1a" font-weight="bold">Memory Timings</text>
<path d="M177.90 77.94 A1.6 1.6 0 0 1 181.10 77.94" fill="none" stroke="#8a90a0" stroke-width="0.5"/><circle cx="178.60" cy="79.34" r="0.5" fill="#5a6272"/><circle cx="180.40" cy="79.34" r="0.5" fill="#5a6272"/><circle cx="179.50" cy="77.94" r="0.4" fill="#8a90a0"/>
<text transform="translate(182.40,79.39) scale(0.94,1)" font-size="3.35" fill="#222">Memory Clock</text>
<text transform="translate(259.30,79.39) scale(0.91,1)" font-size="3.35" fill="#222" text-anchor="end">2,734.6 MHz</text>
<text transform="translate(283.90,79.39) scale(0.91,1)" font-size="3.35" fill="#222" text-anchor="end">1,935.1 MHz</text>
<text transform="translate(308.20,79.39) scale(0.91,1)" font-size="3.35" fill="#222" text-anchor="end">2,734.6 MHz</text>
<text transform="translate(332.40,79.39) scale(0.91,1)" font-size="3.35" fill="#222" text-anchor="end">2,734.6 MHz</text>
<rect x="181.70" y="80.38" width="151.60" height="5.07" fill="#f0f0f0"/>
<path d="M177.90 83.01 A1.6 1.6 0 0 1 181.10 83.01" fill="none" stroke="#8a90a0" stroke-width="0.5"/><circle cx="178.60" cy="84.41" r="0.5" fill="#5a6272"/><circle cx="180.40" cy="84.41" r="0.5" fill="#5a6272"/><circle cx="179.50" cy="83.01" r="0.4" fill="#8a90a0"/>
<text transform="translate(182.40,84.46) scale(0.94,1)" font-size="3.35" fill="#222">Memory Clock Ratio</text>
<text transform="translate(259.30,84.46) scale(0.91,1)" font-size="3.35" fill="#222" text-anchor="end">22.80 x</text>
<text transform="translate(283.90,84.46) scale(0.91,1)" font-size="3.35" fill="#222" text-anchor="end">20.00 x</text>
<text transform="translate(308.20,84.46) scale(0.91,1)" font-size="3.35" fill="#222" text-anchor="end">24.00 x</text>
<text transform="translate(332.40,84.46) scale(0.91,1)" font-size="3.35" fill="#222" text-anchor="end">22.80 x</text>
<path d="M177.90 88.08 A1.6 1.6 0 0 1 181.10 88.08" fill="none" stroke="#8a90a0" stroke-width="0.5"/><circle cx="178.60" cy="89.48" r="0.5" fill="#5a6272"/><circle cx="180.40" cy="89.48" r="0.5" fill="#5a6272"/><circle cx="179.50" cy="88.08" r="0.4" fill="#8a90a0"/>
<text transform="translate(182.40,89.53) scale(0.94,1)" font-size="3.35" fill="#222">Tcas</text>
<text transform="translate(259.30,89.53) scale(0.91,1)" font-size="3.35" fill="#222" text-anchor="end">52 T</text>
<text transform="translate(283.90,89.53) scale(0.91,1)" font-size="3.35" fill="#222" text-anchor="end">48 T</text>
<text transform="translate(308.20,89.53) scale(0.91,1)" font-size="3.35" fill="#222" text-anchor="end">52 T</text>
<rect x="181.70" y="90.52" width="151.60" height="5.07" fill="#f0f0f0"/>
<path d="M177.90 93.15 A1.6 1.6 0 0 1 181.10 93.15" fill="none" stroke="#8a90a0" stroke-width="0.5"/><circle cx="178.60" cy="94.55" r="0.5" fill="#5a6272"/><circle cx="180.40" cy="94.55" r="0.5" fill="#5a6272"/><circle cx="179.50" cy="93.15" r="0.4" fill="#8a90a0"/>
<text transform="translate(182.40,94.60) scale(0.94,1)" font-size="3.35" fill="#222">Trcd</text>
<text transform="translate(259.30,94.60) scale(0.91,1)" font-size="3.35" fill="#222" text-anchor="end">46 T</text>
<text transform="translate(283.90,94.60) scale(0.91,1)" font-size="3.35" fill="#222" text-anchor="end">35 T</text>
<text transform="translate(308.20,94.60) scale(0.91,1)" font-size="3.35" fill="#222" text-anchor="end">44 T</text>
<path d="M177.90 98.22 A1.6 1.6 0 0 1 181.10 98.22" fill="none" stroke="#8a90a0" stroke-width="0.5"/><circle cx="178.60" cy="99.62" r="0.5" fill="#5a6272"/><circle cx="180.40" cy="99.62" r="0.5" fill="#5a6272"/><circle cx="179.50" cy="98.22" r="0.4" fill="#8a90a0"/>
<text transform="translate(182.40,99.67) scale(0.94,1)" font-size="3.35" fill="#222">Trp</text>
<text transform="translate(259.30,99.67) scale(0.91,1)" font-size="3.35" fill="#222" text-anchor="end">46 T</text>
<text transform="translate(283.90,99.67) scale(0.91,1)" font-size="3.35" fill="#222" text-anchor="end">35 T</text>
<text transform="translate(308.20,99.67) scale(0.91,1)" font-size="3.35" fill="#222" text-anchor="end">44 T</text>
<rect x="181.70" y="100.66" width="151.60" height="5.07" fill="#f0f0f0"/>
<path d="M177.90 103.29 A1.6 1.6 0 0 1 181.10 103.29" fill="none" stroke="#8a90a0" stroke-width="0.5"/><circle cx="178.60" cy="104.69" r="0.5" fill="#5a6272"/><circle cx="180.40" cy="104.69" r="0.5" fill="#5a6272"/><circle cx="179.50" cy="103.29" r="0.4" fill="#8a90a0"/>
<text transform="translate(182.40,104.74) scale(0.94,1)" font-size="3.35" fill="#222">Tras</text>
<text transform="translate(259.30,104.74) scale(0.91,1)" font-size="3.35" fill="#222" text-anchor="end">96 T</text>
<text transform="translate(283.90,104.74) scale(0.91,1)" font-size="3.35" fill="#222" text-anchor="end">84 T</text>
<text transform="translate(308.20,104.74) scale(0.91,1)" font-size="3.35" fill="#222" text-anchor="end">104 T</text>
<path d="M177.90 108.36 A1.6 1.6 0 0 1 181.10 108.36" fill="none" stroke="#8a90a0" stroke-width="0.5"/><circle cx="178.60" cy="109.76" r="0.5" fill="#5a6272"/><circle cx="180.40" cy="109.76" r="0.5" fill="#5a6272"/><circle cx="179.50" cy="108.36" r="0.4" fill="#8a90a0"/>
<text transform="translate(182.40,109.81) scale(0.94,1)" font-size="3.35" fill="#222">Trc</text>
<text transform="translate(259.30,109.81) scale(0.91,1)" font-size="3.35" fill="#222" text-anchor="end">148 T</text>
<text transform="translate(283.90,109.81) scale(0.91,1)" font-size="3.35" fill="#222" text-anchor="end">148 T</text>
<text transform="translate(308.20,109.81) scale(0.91,1)" font-size="3.35" fill="#222" text-anchor="end">148 T</text>
<rect x="181.70" y="110.80" width="151.60" height="5.07" fill="#f0f0f0"/>
<path d="M177.90 113.43 A1.6 1.6 0 0 1 181.10 113.43" fill="none" stroke="#8a90a0" stroke-width="0.5"/><circle cx="178.60" cy="114.83" r="0.5" fill="#5a6272"/><circle cx="180.40" cy="114.83" r="0.5" fill="#5a6272"/><circle cx="179.50" cy="113.43" r="0.4" fill="#8a90a0"/>
<text transform="translate(182.40,114.88) scale(0.94,1)" font-size="3.35" fill="#222">Trfc</text>
<text transform="translate(259.30,114.88) scale(0.91,1)" font-size="3.35" fill="#222" text-anchor="end">616 T</text>
<text transform="translate(283.90,114.88) scale(0.91,1)" font-size="3.35" fill="#222" text-anchor="end">560 T</text>
<text transform="translate(308.20,114.88) scale(0.91,1)" font-size="3.35" fill="#222" text-anchor="end">672 T</text>
<circle cx="178.60" cy="117.80" r="0.48" fill="#5e6676"/><circle cx="180.20" cy="117.80" r="0.48" fill="#5e6676"/><circle cx="178.60" cy="119.70" r="0.48" fill="#5e6676"/><circle cx="180.20" cy="119.70" r="0.48" fill="#5e6676"/><circle cx="179.40" cy="116.80" r="0.4" fill="#a8aebb"/><circle cx="179.40" cy="118.75" r="0.4" fill="#a8aebb"/><circle cx="179.40" cy="120.60" r="0.4" fill="#a8aebb"/><circle cx="177.80" cy="118.75" r="0.4" fill="#a8aebb"/><circle cx="181.00" cy="118.75" r="0.4" fill="#a8aebb"/>
<text transform="translate(182.40,119.95) scale(0.94,1)" font-size="3.35" fill="#222">Command Rate</text>
<text transform="translate(259.30,119.95) scale(0.91,1)" font-size="3.35" fill="#222" text-anchor="end">1 T</text>
<text transform="translate(283.90,119.95) scale(0.91,1)" font-size="3.35" fill="#222" text-anchor="end">1 T</text>
<text transform="translate(308.20,119.95) scale(0.91,1)" font-size="3.35" fill="#222" text-anchor="end">1 T</text>
<rect x="181.70" y="120.94" width="151.60" height="5.07" fill="#f0f0f0"/>
<circle cx="178.60" cy="122.87" r="0.48" fill="#5e6676"/><circle cx="180.20" cy="122.87" r="0.48" fill="#5e6676"/><circle cx="178.60" cy="124.77" r="0.48" fill="#5e6676"/><circle cx="180.20" cy="124.77" r="0.48" fill="#5e6676"/><circle cx="179.40" cy="121.87" r="0.4" fill="#a8aebb"/><circle cx="179.40" cy="123.82" r="0.4" fill="#a8aebb"/><circle cx="179.40" cy="125.67" r="0.4" fill="#a8aebb"/><circle cx="177.80" cy="123.82" r="0.4" fill="#a8aebb"/><circle cx="181.00" cy="123.82" r="0.4" fill="#a8aebb"/>
<text transform="translate(182.40,125.02) scale(0.94,1)" font-size="3.35" fill="#222">Gear Mode</text>
<text transform="translate(259.30,125.02) scale(0.91,1)" font-size="3.35" fill="#222" text-anchor="end">4</text>
<text transform="translate(283.90,125.02) scale(0.91,1)" font-size="3.35" fill="#222" text-anchor="end">4</text>
<text transform="translate(308.20,125.02) scale(0.91,1)" font-size="3.35" fill="#222" text-anchor="end">4</text>
<rect x="181.40" y="131.08" width="151.90" height="5.07" fill="#e1e1e1"/>
<path d="M172.30 133.31 L174.00 134.81 L175.70 133.31" fill="none" stroke="#606060" stroke-width="0.4"/>
<rect x="178.20" y="131.61" width="2.4" height="4.0" fill="#505050"/>
<text transform="translate(182.00,135.36) scale(1.06,1)" font-size="3.4" fill="#1a1a1a" font-weight="bold">CPU [#0]: Intel Processor N100: Performance Limit Reasons</text>
<path d="M177.30 138.38 L179.00 139.88 L180.70 138.38" fill="none" stroke="#606060" stroke-width="0.4"/>
<circle cx="183.60" cy="138.08" r="0.48" fill="#5e6676"/><circle cx="185.20" cy="138.08" r="0.48" fill="#5e6676"/><circle cx="183.60" cy="139.98" r="0.48" fill="#5e6676"/><circle cx="185.20" cy="139.98" r="0.48" fill="#5e6676"/><circle cx="184.40" cy="137.08" r="0.4" fill="#a8aebb"/><circle cx="184.40" cy="139.03" r="0.4" fill="#a8aebb"/><circle cx="184.40" cy="140.88" r="0.4" fill="#a8aebb"/><circle cx="182.80" cy="139.03" r="0.4" fill="#a8aebb"/><circle cx="186.00" cy="139.03" r="0.4" fill="#a8aebb"/>
<text transform="translate(187.20,140.23) scale(0.94,1)" font-size="3.35" fill="#222">IA: Limit Reasons</text>
<text transform="translate(259.30,140.23) scale(0.91,1)" font-size="3.35" fill="#222" text-anchor="end">Yes</text>
<text transform="translate(283.90,140.23) scale(0.91,1)" font-size="3.35" fill="#222" text-anchor="end">No</text>
<text transform="translate(308.20,140.23) scale(0.91,1)" font-size="3.35" fill="#222" text-anchor="end">Yes</text>
<rect x="186.50" y="141.22" width="146.80" height="5.07" fill="#f0f0f0"/>
<path d="M182.90 143.85 A1.6 1.6 0 0 1 186.10 143.85" fill="none" stroke="#8a90a0" stroke-width="0.5"/><circle cx="183.60" cy="145.25" r="0.5" fill="#5a6272"/><circle cx="185.40" cy="145.25" r="0.5" fill="#5a6272"/><circle cx="184.50" cy="143.85" r="0.4" fill="#8a90a0"/>
<text transform="translate(187.20,145.30) scale(0.94,1)" font-size="3.35" fill="#222">IA: PROCHOT</text>
<text transform="translate(259.30,145.30) scale(0.91,1)" font-size="3.35" fill="#222" text-anchor="end">No</text>
<text transform="translate(283.90,145.30) scale(0.91,1)" font-size="3.35" fill="#222" text-anchor="end">No</text>
<text transform="translate(308.20,145.30) scale(0.91,1)" font-size="3.35" fill="#222" text-anchor="end">No</text>
<path d="M182.90 148.92 A1.6 1.6 0 0 1 186.10 148.92" fill="none" stroke="#8a90a0" stroke-width="0.5"/><circle cx="183.60" cy="150.32" r="0.5" fill="#5a6272"/><circle cx="185.40" cy="150.32" r="0.5" fill="#5a6272"/><circle cx="184.50" cy="148.92" r="0.4" fill="#8a90a0"/>
<text transform="translate(187.20,150.37) scale(0.94,1)" font-size="3.35" fill="#222">IA: Thermal Event</text>
<text transform="translate(259.30,150.37) scale(0.91,1)" font-size="3.35" fill="#222" text-anchor="end">No</text>
<text transform="translate(283.90,150.37) scale(0.91,1)" font-size="3.35" fill="#222" text-anchor="end">No</text>
<text transform="translate(308.20,150.37) scale(0.91,1)" font-size="3.35" fill="#222" text-anchor="end">No</text>
<rect x="186.50" y="151.36" width="146.80" height="5.07" fill="#f0f0f0"/>
<path d="M182.90 153.99 A1.6 1.6 0 0 1 186.10 153.99" fill="none" stroke="#8a90a0" stroke-width="0.5"/><circle cx="183.60" cy="155.39" r="0.5" fill="#5a6272"/><circle cx="185.40" cy="155.39" r="0.5" fill="#5a6272"/><circle cx="184.50" cy="153.99" r="0.4" fill="#8a90a0"/>
<text transform="translate(187.20,155.44) scale(0.94,1)" font-size="3.35" fill="#222">IA: Residency State Regulation</text>
<text transform="translate(259.30,155.44) scale(0.91,1)" font-size="3.35" fill="#222" text-anchor="end">No</text>
<text transform="translate(283.90,155.44) scale(0.91,1)" font-size="3.35" fill="#222" text-anchor="end">No</text>
<text transform="translate(308.20,155.44) scale(0.91,1)" font-size="3.35" fill="#222" text-anchor="end">No</text>
<path d="M182.90 159.06 A1.6 1.6 0 0 1 186.10 159.06" fill="none" stroke="#8a90a0" stroke-width="0.5"/><circle cx="183.60" cy="160.46" r="0.5" fill="#5a6272"/><circle cx="185.40" cy="160.46" r="0.5" fill="#5a6272"/><circle cx="184.50" cy="159.06" r="0.4" fill="#8a90a0"/>
<text transform="translate(187.20,160.51) scale(0.94,1)" font-size="3.35" fill="#222">IA: Running Average Thermal ...</text>
<text transform="translate(259.30,160.51) scale(0.91,1)" font-size="3.35" fill="#222" text-anchor="end">No</text>
<text transform="translate(283.90,160.51) scale(0.91,1)" font-size="3.35" fill="#222" text-anchor="end">No</text>
<text transform="translate(308.20,160.51) scale(0.91,1)" font-size="3.35" fill="#222" text-anchor="end">No</text>
<rect x="186.50" y="161.50" width="146.80" height="5.07" fill="#f0f0f0"/>
<path d="M182.90 164.13 A1.6 1.6 0 0 1 186.10 164.13" fill="none" stroke="#8a90a0" stroke-width="0.5"/><circle cx="183.60" cy="165.53" r="0.5" fill="#5a6272"/><circle cx="185.40" cy="165.53" r="0.5" fill="#5a6272"/><circle cx="184.50" cy="164.13" r="0.4" fill="#8a90a0"/>
<text transform="translate(187.20,165.58) scale(0.94,1)" font-size="3.35" fill="#222">IA: VR Thermal Alert</text>
<text transform="translate(259.30,165.58) scale(0.91,1)" font-size="3.35" fill="#222" text-anchor="end">No</text>
<text transform="translate(283.90,165.58) scale(0.91,1)" font-size="3.35" fill="#222" text-anchor="end">No</text>
<text transform="translate(308.20,165.58) scale(0.91,1)" font-size="3.35" fill="#222" text-anchor="end">No</text>
<path d="M182.90 169.20 A1.6 1.6 0 0 1 186.10 169.20" fill="none" stroke="#8a90a0" stroke-width="0.5"/><circle cx="183.60" cy="170.60" r="0.5" fill="#5a6272"/><circle cx="185.40" cy="170.60" r="0.5" fill="#5a6272"/><circle cx="184.50" cy="169.20" r="0.4" fill="#8a90a0"/>
<text transform="translate(187.20,170.65) scale(0.94,1)" font-size="3.35" fill="#222">IA: VR TDC</text>
<text transform="translate(259.30,170.65) scale(0.91,1)" font-size="3.35" fill="#222" text-anchor="end">No</text>
<text transform="translate(283.90,170.65) scale(0.91,1)" font-size="3.35" fill="#222" text-anchor="end">No</text>
<text transform="translate(308.20,170.65) scale(0.91,1)" font-size="3.35" fill="#222" text-anchor="end">No</text>
<rect x="186.50" y="171.64" width="146.80" height="5.07" fill="#f0f0f0"/>
<path d="M182.90 174.27 A1.6 1.6 0 0 1 186.10 174.27" fill="none" stroke="#8a90a0" stroke-width="0.5"/><circle cx="183.60" cy="175.67" r="0.5" fill="#5a6272"/><circle cx="185.40" cy="175.67" r="0.5" fill="#5a6272"/><circle cx="184.50" cy="174.27" r="0.4" fill="#8a90a0"/>
<text transform="translate(187.20,175.72) scale(0.94,1)" font-size="3.35" fill="#222">IA: Electrical Design Point/Oth...</text>
<text transform="translate(259.30,175.72) scale(0.91,1)" font-size="3.35" fill="#222" text-anchor="end">No</text>
<text transform="translate(283.90,175.72) scale(0.91,1)" font-size="3.35" fill="#222" text-anchor="end">No</text>
<text transform="translate(308.20,175.72) scale(0.91,1)" font-size="3.35" fill="#222" text-anchor="end">No</text>
<path d="M182.90 179.34 A1.6 1.6 0 0 1 186.10 179.34" fill="none" stroke="#8a90a0" stroke-width="0.5"/><circle cx="183.60" cy="180.74" r="0.5" fill="#5a6272"/><circle cx="185.40" cy="180.74" r="0.5" fill="#5a6272"/><circle cx="184.50" cy="179.34" r="0.4" fill="#8a90a0"/>
<text transform="translate(187.20,180.79) scale(0.94,1)" font-size="3.35" fill="#222">IA: Package-Level RAPL/PBM PL1</text>
<text transform="translate(259.30,180.79) scale(0.91,1)" font-size="3.35" fill="#222" text-anchor="end">No</text>
<text transform="translate(283.90,180.79) scale(0.91,1)" font-size="3.35" fill="#222" text-anchor="end">No</text>
<text transform="translate(308.20,180.79) scale(0.91,1)" font-size="3.35" fill="#222" text-anchor="end">No</text>
<rect x="186.50" y="181.78" width="146.80" height="5.07" fill="#f0f0f0"/>
<path d="M182.90 184.41 A1.6 1.6 0 0 1 186.10 184.41" fill="none" stroke="#8a90a0" stroke-width="0.5"/><circle cx="183.60" cy="185.81" r="0.5" fill="#5a6272"/><circle cx="185.40" cy="185.81" r="0.5" fill="#5a6272"/><circle cx="184.50" cy="184.41" r="0.4" fill="#8a90a0"/>
<text transform="translate(187.20,185.86) scale(0.94,1)" font-size="3.35" fill="#222">IA: Package-Level RAPL/PBM P...</text>
<text transform="translate(259.30,185.86) scale(0.91,1)" font-size="3.35" fill="#222" text-anchor="end">No</text>
<text transform="translate(283.90,185.86) scale(0.91,1)" font-size="3.35" fill="#222" text-anchor="end">No</text>
<text transform="translate(308.20,185.86) scale(0.91,1)" font-size="3.35" fill="#222" text-anchor="end">No</text>
<circle cx="183.60" cy="188.78" r="0.48" fill="#5e6676"/><circle cx="185.20" cy="188.78" r="0.48" fill="#5e6676"/><circle cx="183.60" cy="190.68" r="0.48" fill="#5e6676"/><circle cx="185.20" cy="190.68" r="0.48" fill="#5e6676"/><circle cx="184.40" cy="187.78" r="0.4" fill="#a8aebb"/><circle cx="184.40" cy="189.73" r="0.4" fill="#a8aebb"/><circle cx="184.40" cy="191.58" r="0.4" fill="#a8aebb"/><circle cx="182.80" cy="189.73" r="0.4" fill="#a8aebb"/><circle cx="186.00" cy="189.73" r="0.4" fill="#a8aebb"/>
<text transform="translate(187.20,190.93) scale(0.94,1)" font-size="3.35" fill="#222">IA: Max Turbo Limit</text>
<text transform="translate(259.30,190.93) scale(0.91,1)" font-size="3.35" fill="#222" text-anchor="end">Yes</text>
<text transform="translate(283.90,190.93) scale(0.91,1)" font-size="3.35" fill="#222" text-anchor="end">Yes</text>
<text transform="translate(308.20,190.93) scale(0.91,1)" font-size="3.35" fill="#222" text-anchor="end">Yes</text>
<rect x="186.50" y="191.92" width="146.80" height="5.07" fill="#f0f0f0"/>
<circle cx="183.60" cy="193.85" r="0.48" fill="#5e6676"/><circle cx="185.20" cy="193.85" r="0.48" fill="#5e6676"/><circle cx="183.60" cy="195.75" r="0.48" fill="#5e6676"/><circle cx="185.20" cy="195.75" r="0.48" fill="#5e6676"/><circle cx="184.40" cy="192.85" r="0.4" fill="#a8aebb"/><circle cx="184.40" cy="194.80" r="0.4" fill="#a8aebb"/><circle cx="184.40" cy="196.65" r="0.4" fill="#a8aebb"/><circle cx="182.80" cy="194.80" r="0.4" fill="#a8aebb"/><circle cx="186.00" cy="194.80" r="0.4" fill="#a8aebb"/>
<text transform="translate(187.20,196.00) scale(0.94,1)" font-size="3.35" fill="#222">IA: Turbo Attenuation (MCT)</text>
<text transform="translate(259.30,196.00) scale(0.91,1)" font-size="3.35" fill="#222" text-anchor="end">No</text>
<text transform="translate(283.90,196.00) scale(0.91,1)" font-size="3.35" fill="#222" text-anchor="end">No</text>
<text transform="translate(308.20,196.00) scale(0.91,1)" font-size="3.35" fill="#222" text-anchor="end">No</text>
<circle cx="183.60" cy="198.92" r="0.48" fill="#5e6676"/><circle cx="185.20" cy="198.92" r="0.48" fill="#5e6676"/><circle cx="183.60" cy="200.82" r="0.48" fill="#5e6676"/><circle cx="185.20" cy="200.82" r="0.48" fill="#5e6676"/><circle cx="184.40" cy="197.92" r="0.4" fill="#a8aebb"/><circle cx="184.40" cy="199.87" r="0.4" fill="#a8aebb"/><circle cx="184.40" cy="201.72" r="0.4" fill="#a8aebb"/><circle cx="182.80" cy="199.87" r="0.4" fill="#a8aebb"/><circle cx="186.00" cy="199.87" r="0.4" fill="#a8aebb"/>
<text transform="translate(187.20,201.07) scale(0.94,1)" font-size="3.35" fill="#222">IA: Thermal Velocity Boost</text>
<text transform="translate(259.30,201.07) scale(0.91,1)" font-size="3.35" fill="#222" text-anchor="end">No</text>
<text transform="translate(283.90,201.07) scale(0.91,1)" font-size="3.35" fill="#222" text-anchor="end">No</text>
<text transform="translate(308.20,201.07) scale(0.91,1)" font-size="3.35" fill="#222" text-anchor="end">No</text>
<rect x="186.50" y="202.06" width="146.80" height="5.07" fill="#f0f0f0"/>
<path d="M177.30 204.29 L179.00 205.79 L180.70 204.29" fill="none" stroke="#606060" stroke-width="0.4"/>
<circle cx="183.60" cy="203.99" r="0.48" fill="#5e6676"/><circle cx="185.20" cy="203.99" r="0.48" fill="#5e6676"/><circle cx="183.60" cy="205.89" r="0.48" fill="#5e6676"/><circle cx="185.20" cy="205.89" r="0.48" fill="#5e6676"/><circle cx="184.40" cy="202.99" r="0.4" fill="#a8aebb"/><circle cx="184.40" cy="204.94" r="0.4" fill="#a8aebb"/><circle cx="184.40" cy="206.79" r="0.4" fill="#a8aebb"/><circle cx="182.80" cy="204.94" r="0.4" fill="#a8aebb"/><circle cx="186.00" cy="204.94" r="0.4" fill="#a8aebb"/>
<text transform="translate(187.20,206.14) scale(0.94,1)" font-size="3.35" fill="#222">GT: Limit Reasons</text>
<text transform="translate(259.30,206.14) scale(0.91,1)" font-size="3.35" fill="#222" text-anchor="end">No</text>
<text transform="translate(283.90,206.14) scale(0.91,1)" font-size="3.35" fill="#222" text-anchor="end">No</text>
<text transform="translate(308.20,206.14) scale(0.91,1)" font-size="3.35" fill="#222" text-anchor="end">No</text>
<circle cx="183.60" cy="209.06" r="0.48" fill="#5e6676"/><circle cx="185.20" cy="209.06" r="0.48" fill="#5e6676"/><circle cx="183.60" cy="210.96" r="0.48" fill="#5e6676"/><circle cx="185.20" cy="210.96" r="0.48" fill="#5e6676"/><circle cx="184.40" cy="208.06" r="0.4" fill="#a8aebb"/><circle cx="184.40" cy="210.01" r="0.4" fill="#a8aebb"/><circle cx="184.40" cy="211.86" r="0.4" fill="#a8aebb"/><circle cx="182.80" cy="210.01" r="0.4" fill="#a8aebb"/><circle cx="186.00" cy="210.01" r="0.4" fill="#a8aebb"/>
<text transform="translate(187.20,211.21) scale(0.94,1)" font-size="3.35" fill="#222">GT: PROCHOT</text>
<text transform="translate(259.30,211.21) scale(0.91,1)" font-size="3.35" fill="#222" text-anchor="end">No</text>
<text transform="translate(283.90,211.21) scale(0.91,1)" font-size="3.35" fill="#222" text-anchor="end">No</text>
<text transform="translate(308.20,211.21) scale(0.91,1)" font-size="3.35" fill="#222" text-anchor="end">No</text>
<rect x="186.50" y="212.20" width="146.80" height="5.07" fill="#f0f0f0"/>
<circle cx="183.60" cy="214.13" r="0.48" fill="#5e6676"/><circle cx="185.20" cy="214.13" r="0.48" fill="#5e6676"/><circle cx="183.60" cy="216.03" r="0.48" fill="#5e6676"/><circle cx="185.20" cy="216.03" r="0.48" fill="#5e6676"/><circle cx="184.40" cy="213.13" r="0.4" fill="#a8aebb"/><circle cx="184.40" cy="215.08" r="0.4" fill="#a8aebb"/><circle cx="184.40" cy="216.93" r="0.4" fill="#a8aebb"/><circle cx="182.80" cy="215.08" r="0.4" fill="#a8aebb"/><circle cx="186.00" cy="215.08" r="0.4" fill="#a8aebb"/>
<text transform="translate(187.20,216.28) scale(0.94,1)" font-size="3.35" fill="#222">GT: Thermal Event</text>
<text transform="translate(259.30,216.28) scale(0.91,1)" font-size="3.35" fill="#222" text-anchor="end">No</text>
<text transform="translate(283.90,216.28) scale(0.91,1)" font-size="3.35" fill="#222" text-anchor="end">No</text>
<text transform="translate(308.20,216.28) scale(0.91,1)" font-size="3.35" fill="#222" text-anchor="end">No</text>
<circle cx="183.60" cy="219.20" r="0.48" fill="#5e6676"/><circle cx="185.20" cy="219.20" r="0.48" fill="#5e6676"/><circle cx="183.60" cy="221.10" r="0.48" fill="#5e6676"/><circle cx="185.20" cy="221.10" r="0.48" fill="#5e6676"/><circle cx="184.40" cy="218.20" r="0.4" fill="#a8aebb"/><circle cx="184.40" cy="220.15" r="0.4" fill="#a8aebb"/><circle cx="184.40" cy="222.00" r="0.4" fill="#a8aebb"/><circle cx="182.80" cy="220.15" r="0.4" fill="#a8aebb"/><circle cx="186.00" cy="220.15" r="0.4" fill="#a8aebb"/>
<text transform="translate(187.20,221.35) scale(0.94,1)" font-size="3.35" fill="#222">GT: DDR RAPL</text>
<text transform="translate(259.30,221.35) scale(0.91,1)" font-size="3.35" fill="#222" text-anchor="end">No</text>
<text transform="translate(283.90,221.35) scale(0.91,1)" font-size="3.35" fill="#222" text-anchor="end">No</text>
<text transform="translate(308.20,221.35) scale(0.91,1)" font-size="3.35" fill="#222" text-anchor="end">No</text>
<rect x="186.50" y="222.34" width="146.80" height="5.07" fill="#f0f0f0"/>
<circle cx="183.60" cy="224.27" r="0.48" fill="#5e6676"/><circle cx="185.20" cy="224.27" r="0.48" fill="#5e6676"/><circle cx="183.60" cy="226.17" r="0.48" fill="#5e6676"/><circle cx="185.20" cy="226.17" r="0.48" fill="#5e6676"/><circle cx="184.40" cy="223.27" r="0.4" fill="#a8aebb"/><circle cx="184.40" cy="225.22" r="0.4" fill="#a8aebb"/><circle cx="184.40" cy="227.07" r="0.4" fill="#a8aebb"/><circle cx="182.80" cy="225.22" r="0.4" fill="#a8aebb"/><circle cx="186.00" cy="225.22" r="0.4" fill="#a8aebb"/>
<text transform="translate(187.20,226.42) scale(0.94,1)" font-size="3.35" fill="#222">GT: Residency State Regulation</text>
<text transform="translate(259.30,226.42) scale(0.91,1)" font-size="3.35" fill="#222" text-anchor="end">No</text>
<text transform="translate(283.90,226.42) scale(0.91,1)" font-size="3.35" fill="#222" text-anchor="end">No</text>
<text transform="translate(308.20,226.42) scale(0.91,1)" font-size="3.35" fill="#222" text-anchor="end">No</text>
<circle cx="183.60" cy="229.34" r="0.48" fill="#5e6676"/><circle cx="185.20" cy="229.34" r="0.48" fill="#5e6676"/><circle cx="183.60" cy="231.24" r="0.48" fill="#5e6676"/><circle cx="185.20" cy="231.24" r="0.48" fill="#5e6676"/><circle cx="184.40" cy="228.34" r="0.4" fill="#a8aebb"/><circle cx="184.40" cy="230.29" r="0.4" fill="#a8aebb"/><circle cx="184.40" cy="232.14" r="0.4" fill="#a8aebb"/><circle cx="182.80" cy="230.29" r="0.4" fill="#a8aebb"/><circle cx="186.00" cy="230.29" r="0.4" fill="#a8aebb"/>
<text transform="translate(187.20,231.49) scale(0.94,1)" font-size="3.35" fill="#222">GT: Running Average Thermal ...</text>
<text transform="translate(259.30,231.49) scale(0.91,1)" font-size="3.35" fill="#222" text-anchor="end">No</text>
<text transform="translate(283.90,231.49) scale(0.91,1)" font-size="3.35" fill="#222" text-anchor="end">No</text>
<text transform="translate(308.20,231.49) scale(0.91,1)" font-size="3.35" fill="#222" text-anchor="end">No</text>
<rect x="186.50" y="232.48" width="146.80" height="5.07" fill="#f0f0f0"/>
<circle cx="183.60" cy="234.41" r="0.48" fill="#5e6676"/><circle cx="185.20" cy="234.41" r="0.48" fill="#5e6676"/><circle cx="183.60" cy="236.31" r="0.48" fill="#5e6676"/><circle cx="185.20" cy="236.31" r="0.48" fill="#5e6676"/><circle cx="184.40" cy="233.41" r="0.4" fill="#a8aebb"/><circle cx="184.40" cy="235.36" r="0.4" fill="#a8aebb"/><circle cx="184.40" cy="237.21" r="0.4" fill="#a8aebb"/><circle cx="182.80" cy="235.36" r="0.4" fill="#a8aebb"/><circle cx="186.00" cy="235.36" r="0.4" fill="#a8aebb"/>
<text transform="translate(187.20,236.56) scale(0.94,1)" font-size="3.35" fill="#222">GT: VR Thermal Alert</text>
<text transform="translate(259.30,236.56) scale(0.91,1)" font-size="3.35" fill="#222" text-anchor="end">No</text>
<text transform="translate(283.90,236.56) scale(0.91,1)" font-size="3.35" fill="#222" text-anchor="end">No</text>
<text transform="translate(308.20,236.56) scale(0.91,1)" font-size="3.35" fill="#222" text-anchor="end">No</text>
<circle cx="183.60" cy="239.48" r="0.48" fill="#5e6676"/><circle cx="185.20" cy="239.48" r="0.48" fill="#5e6676"/><circle cx="183.60" cy="241.38" r="0.48" fill="#5e6676"/><circle cx="185.20" cy="241.38" r="0.48" fill="#5e6676"/><circle cx="184.40" cy="238.48" r="0.4" fill="#a8aebb"/><circle cx="184.40" cy="240.43" r="0.4" fill="#a8aebb"/><circle cx="184.40" cy="242.28" r="0.4" fill="#a8aebb"/><circle cx="182.80" cy="240.43" r="0.4" fill="#a8aebb"/><circle cx="186.00" cy="240.43" r="0.4" fill="#a8aebb"/>
<text transform="translate(187.20,241.63) scale(0.94,1)" font-size="3.35" fill="#222">GT: VR TDC</text>
<text transform="translate(259.30,241.63) scale(0.91,1)" font-size="3.35" fill="#222" text-anchor="end">No</text>
<text transform="translate(283.90,241.63) scale(0.91,1)" font-size="3.35" fill="#222" text-anchor="end">No</text>
<text transform="translate(308.20,241.63) scale(0.91,1)" font-size="3.35" fill="#222" text-anchor="end">No</text>
<rect x="186.50" y="242.62" width="146.80" height="5.07" fill="#f0f0f0"/>
<circle cx="183.60" cy="244.55" r="0.48" fill="#5e6676"/><circle cx="185.20" cy="244.55" r="0.48" fill="#5e6676"/><circle cx="183.60" cy="246.45" r="0.48" fill="#5e6676"/><circle cx="185.20" cy="246.45" r="0.48" fill="#5e6676"/><circle cx="184.40" cy="243.55" r="0.4" fill="#a8aebb"/><circle cx="184.40" cy="245.50" r="0.4" fill="#a8aebb"/><circle cx="184.40" cy="247.35" r="0.4" fill="#a8aebb"/><circle cx="182.80" cy="245.50" r="0.4" fill="#a8aebb"/><circle cx="186.00" cy="245.50" r="0.4" fill="#a8aebb"/>
<text transform="translate(187.20,246.70) scale(0.94,1)" font-size="3.35" fill="#222">GT: Max VR Voltage, ICCmax, ...</text>
<text transform="translate(259.30,246.70) scale(0.91,1)" font-size="3.35" fill="#222" text-anchor="end">No</text>
<text transform="translate(283.90,246.70) scale(0.91,1)" font-size="3.35" fill="#222" text-anchor="end">No</text>
<text transform="translate(308.20,246.70) scale(0.91,1)" font-size="3.35" fill="#222" text-anchor="end">No</text>
<circle cx="183.60" cy="249.62" r="0.48" fill="#5e6676"/><circle cx="185.20" cy="249.62" r="0.48" fill="#5e6676"/><circle cx="183.60" cy="251.52" r="0.48" fill="#5e6676"/><circle cx="185.20" cy="251.52" r="0.48" fill="#5e6676"/><circle cx="184.40" cy="248.62" r="0.4" fill="#a8aebb"/><circle cx="184.40" cy="250.57" r="0.4" fill="#a8aebb"/><circle cx="184.40" cy="252.42" r="0.4" fill="#a8aebb"/><circle cx="182.80" cy="250.57" r="0.4" fill="#a8aebb"/><circle cx="186.00" cy="250.57" r="0.4" fill="#a8aebb"/>
<text transform="translate(187.20,251.77) scale(0.94,1)" font-size="3.35" fill="#222">GT: Domain-Level RBM PL/CT</text>
<text transform="translate(259.30,251.77) scale(0.91,1)" font-size="3.35" fill="#222" text-anchor="end">No</text>
<text transform="translate(283.90,251.77) scale(0.91,1)" font-size="3.35" fill="#222" text-anchor="end">No</text>
<text transform="translate(308.20,251.77) scale(0.91,1)" font-size="3.35" fill="#222" text-anchor="end">No</text>
<rect x="186.50" y="252.76" width="146.80" height="5.07" fill="#f0f0f0"/>
<circle cx="183.60" cy="254.69" r="0.48" fill="#5e6676"/><circle cx="185.20" cy="254.69" r="0.48" fill="#5e6676"/><circle cx="183.60" cy="256.59" r="0.48" fill="#5e6676"/><circle cx="185.20" cy="256.59" r="0.48" fill="#5e6676"/><circle cx="184.40" cy="253.69" r="0.4" fill="#a8aebb"/><circle cx="184.40" cy="255.64" r="0.4" fill="#a8aebb"/><circle cx="184.40" cy="257.49" r="0.4" fill="#a8aebb"/><circle cx="182.80" cy="255.64" r="0.4" fill="#a8aebb"/><circle cx="186.00" cy="255.64" r="0.4" fill="#a8aebb"/>
<text transform="translate(187.20,256.84) scale(0.94,1)" font-size="3.35" fill="#222">GT: Package-Level RAPL/PBM ...</text>
<text transform="translate(259.30,256.84) scale(0.91,1)" font-size="3.35" fill="#222" text-anchor="end">No</text>
<text transform="translate(283.90,256.84) scale(0.91,1)" font-size="3.35" fill="#222" text-anchor="end">No</text>
<text transform="translate(308.20,256.84) scale(0.91,1)" font-size="3.35" fill="#222" text-anchor="end">No</text>
<circle cx="183.60" cy="259.76" r="0.48" fill="#5e6676"/><circle cx="185.20" cy="259.76" r="0.48" fill="#5e6676"/><circle cx="183.60" cy="261.66" r="0.48" fill="#5e6676"/><circle cx="185.20" cy="261.66" r="0.48" fill="#5e6676"/><circle cx="184.40" cy="258.76" r="0.4" fill="#a8aebb"/><circle cx="184.40" cy="260.71" r="0.4" fill="#a8aebb"/><circle cx="184.40" cy="262.56" r="0.4" fill="#a8aebb"/><circle cx="182.80" cy="260.71" r="0.4" fill="#a8aebb"/><circle cx="186.00" cy="260.71" r="0.4" fill="#a8aebb"/>
<text transform="translate(187.20,261.91) scale(0.94,1)" font-size="3.35" fill="#222">GT: Package-Level RAPL/PBM ...</text>
<text transform="translate(259.30,261.91) scale(0.91,1)" font-size="3.35" fill="#222" text-anchor="end">No</text>
<text transform="translate(283.90,261.91) scale(0.91,1)" font-size="3.35" fill="#222" text-anchor="end">No</text>
<text transform="translate(308.20,261.91) scale(0.91,1)" font-size="3.35" fill="#222" text-anchor="end">No</text>
<rect x="186.50" y="262.89" width="146.80" height="5.07" fill="#f0f0f0"/>
<circle cx="183.60" cy="264.83" r="0.48" fill="#5e6676"/><circle cx="185.20" cy="264.83" r="0.48" fill="#5e6676"/><circle cx="183.60" cy="266.73" r="0.48" fill="#5e6676"/><circle cx="185.20" cy="266.73" r="0.48" fill="#5e6676"/><circle cx="184.40" cy="263.83" r="0.4" fill="#a8aebb"/><circle cx="184.40" cy="265.78" r="0.4" fill="#a8aebb"/><circle cx="184.40" cy="267.63" r="0.4" fill="#a8aebb"/><circle cx="182.80" cy="265.78" r="0.4" fill="#a8aebb"/><circle cx="186.00" cy="265.78" r="0.4" fill="#a8aebb"/>
<text transform="translate(187.20,266.98) scale(0.94,1)" font-size="3.35" fill="#222">GT: Inefficient Operation</text>
<text transform="translate(259.30,266.98) scale(0.91,1)" font-size="3.35" fill="#222" text-anchor="end">No</text>
<text transform="translate(283.90,266.98) scale(0.91,1)" font-size="3.35" fill="#222" text-anchor="end">No</text>
<text transform="translate(308.20,266.98) scale(0.91,1)" font-size="3.35" fill="#222" text-anchor="end">No</text>
<circle cx="183.60" cy="269.90" r="0.48" fill="#5e6676"/><circle cx="185.20" cy="269.90" r="0.48" fill="#5e6676"/><circle cx="183.60" cy="271.80" r="0.48" fill="#5e6676"/><circle cx="185.20" cy="271.80" r="0.48" fill="#5e6676"/><circle cx="184.40" cy="268.90" r="0.4" fill="#a8aebb"/><circle cx="184.40" cy="270.85" r="0.4" fill="#a8aebb"/><circle cx="184.40" cy="272.70" r="0.4" fill="#a8aebb"/><circle cx="182.80" cy="270.85" r="0.4" fill="#a8aebb"/><circle cx="186.00" cy="270.85" r="0.4" fill="#a8aebb"/>
<text transform="translate(187.20,272.05) scale(0.94,1)" font-size="3.35" fill="#222">GT: Focus limit</text>
<text transform="translate(259.30,272.05) scale(0.91,1)" font-size="3.35" fill="#222" text-anchor="end">No</text>
<text transform="translate(283.90,272.05) scale(0.91,1)" font-size="3.35" fill="#222" text-anchor="end">No</text>
<text transform="translate(308.20,272.05) scale(0.91,1)" font-size="3.35" fill="#222" text-anchor="end">No</text>
<rect x="186.50" y="273.03" width="146.80" height="5.07" fill="#f0f0f0"/>
<path d="M177.30 275.27 L179.00 276.77 L180.70 275.27" fill="none" stroke="#606060" stroke-width="0.4"/>
<path d="M182.90 275.67 A1.6 1.6 0 0 1 186.10 275.67" fill="none" stroke="#8a90a0" stroke-width="0.5"/><circle cx="183.60" cy="277.07" r="0.5" fill="#5a6272"/><circle cx="185.40" cy="277.07" r="0.5" fill="#5a6272"/><circle cx="184.50" cy="275.67" r="0.4" fill="#8a90a0"/>
<text transform="translate(187.20,277.12) scale(0.94,1)" font-size="3.35" fill="#222">Ring Limit Reasons</text>
<text transform="translate(259.30,277.12) scale(0.91,1)" font-size="3.35" fill="#222" text-anchor="end">No</text>
<text transform="translate(283.90,277.12) scale(0.91,1)" font-size="3.35" fill="#222" text-anchor="end">No</text>
<text transform="translate(308.20,277.12) scale(0.91,1)" font-size="3.35" fill="#222" text-anchor="end">No</text>
<path d="M182.90 280.74 A1.6 1.6 0 0 1 186.10 280.74" fill="none" stroke="#8a90a0" stroke-width="0.5"/><circle cx="183.60" cy="282.14" r="0.5" fill="#5a6272"/><circle cx="185.40" cy="282.14" r="0.5" fill="#5a6272"/><circle cx="184.50" cy="280.74" r="0.4" fill="#8a90a0"/>
<text transform="translate(187.20,282.19) scale(0.94,1)" font-size="3.35" fill="#222">RING: PROCHOT</text>
<text transform="translate(259.30,282.19) scale(0.91,1)" font-size="3.35" fill="#222" text-anchor="end">No</text>
<text transform="translate(283.90,282.19) scale(0.91,1)" font-size="3.35" fill="#222" text-anchor="end">No</text>
<text transform="translate(308.20,282.19) scale(0.91,1)" font-size="3.35" fill="#222" text-anchor="end">No</text>
<rect x="186.50" y="283.18" width="146.80" height="5.07" fill="#f0f0f0"/>
<path d="M182.90 285.81 A1.6 1.6 0 0 1 186.10 285.81" fill="none" stroke="#8a90a0" stroke-width="0.5"/><circle cx="183.60" cy="287.21" r="0.5" fill="#5a6272"/><circle cx="185.40" cy="287.21" r="0.5" fill="#5a6272"/><circle cx="184.50" cy="285.81" r="0.4" fill="#8a90a0"/>
<text transform="translate(187.20,287.26) scale(0.94,1)" font-size="3.35" fill="#222">RING: Thermal Event</text>
<text transform="translate(259.30,287.26) scale(0.91,1)" font-size="3.35" fill="#222" text-anchor="end">No</text>
<text transform="translate(283.90,287.26) scale(0.91,1)" font-size="3.35" fill="#222" text-anchor="end">No</text>
<text transform="translate(308.20,287.26) scale(0.91,1)" font-size="3.35" fill="#222" text-anchor="end">No</text>
<path d="M182.90 290.88 A1.6 1.6 0 0 1 186.10 290.88" fill="none" stroke="#8a90a0" stroke-width="0.5"/><circle cx="183.60" cy="292.28" r="0.5" fill="#5a6272"/><circle cx="185.40" cy="292.28" r="0.5" fill="#5a6272"/><circle cx="184.50" cy="290.88" r="0.4" fill="#8a90a0"/>
<text transform="translate(187.20,292.33) scale(0.94,1)" font-size="3.35" fill="#222">RING: DDR RAPL</text>
<text transform="translate(259.30,292.33) scale(0.91,1)" font-size="3.35" fill="#222" text-anchor="end">No</text>
<text transform="translate(283.90,292.33) scale(0.91,1)" font-size="3.35" fill="#222" text-anchor="end">No</text>
<text transform="translate(308.20,292.33) scale(0.91,1)" font-size="3.35" fill="#222" text-anchor="end">No</text>
<rect x="186.50" y="293.31" width="146.80" height="5.07" fill="#f0f0f0"/>
<path d="M182.90 295.95 A1.6 1.6 0 0 1 186.10 295.95" fill="none" stroke="#8a90a0" stroke-width="0.5"/><circle cx="183.60" cy="297.35" r="0.5" fill="#5a6272"/><circle cx="185.40" cy="297.35" r="0.5" fill="#5a6272"/><circle cx="184.50" cy="295.95" r="0.4" fill="#8a90a0"/>
<text transform="translate(187.20,297.40) scale(0.94,1)" font-size="3.35" fill="#222">RING: Residency State Regulati...</text>
<text transform="translate(259.30,297.40) scale(0.91,1)" font-size="3.35" fill="#222" text-anchor="end">No</text>
<text transform="translate(283.90,297.40) scale(0.91,1)" font-size="3.35" fill="#222" text-anchor="end">No</text>
<text transform="translate(308.20,297.40) scale(0.91,1)" font-size="3.35" fill="#222" text-anchor="end">No</text>
<path d="M182.90 301.02 A1.6 1.6 0 0 1 186.10 301.02" fill="none" stroke="#8a90a0" stroke-width="0.5"/><circle cx="183.60" cy="302.42" r="0.5" fill="#5a6272"/><circle cx="185.40" cy="302.42" r="0.5" fill="#5a6272"/><circle cx="184.50" cy="301.02" r="0.4" fill="#8a90a0"/>
<text transform="translate(187.20,302.47) scale(0.94,1)" font-size="3.35" fill="#222">RING: Running Average Therm...</text>
<text transform="translate(259.30,302.47) scale(0.91,1)" font-size="3.35" fill="#222" text-anchor="end">No</text>
<text transform="translate(283.90,302.47) scale(0.91,1)" font-size="3.35" fill="#222" text-anchor="end">No</text>
<text transform="translate(308.20,302.47) scale(0.91,1)" font-size="3.35" fill="#222" text-anchor="end">No</text>
<rect x="186.50" y="303.45" width="146.80" height="5.07" fill="#f0f0f0"/>
<path d="M182.90 306.09 A1.6 1.6 0 0 1 186.10 306.09" fill="none" stroke="#8a90a0" stroke-width="0.5"/><circle cx="183.60" cy="307.49" r="0.5" fill="#5a6272"/><circle cx="185.40" cy="307.49" r="0.5" fill="#5a6272"/><circle cx="184.50" cy="306.09" r="0.4" fill="#8a90a0"/>
<text transform="translate(187.20,307.54) scale(0.94,1)" font-size="3.35" fill="#222">RING: VR Thermal Alert</text>
<text transform="translate(259.30,307.54) scale(0.91,1)" font-size="3.35" fill="#222" text-anchor="end">No</text>
<text transform="translate(283.90,307.54) scale(0.91,1)" font-size="3.35" fill="#222" text-anchor="end">No</text>
<text transform="translate(308.20,307.54) scale(0.91,1)" font-size="3.35" fill="#222" text-anchor="end">No</text>
<path d="M182.90 311.16 A1.6 1.6 0 0 1 186.10 311.16" fill="none" stroke="#8a90a0" stroke-width="0.5"/><circle cx="183.60" cy="312.56" r="0.5" fill="#5a6272"/><circle cx="185.40" cy="312.56" r="0.5" fill="#5a6272"/><circle cx="184.50" cy="311.16" r="0.4" fill="#8a90a0"/>
<text transform="translate(187.20,312.61) scale(0.94,1)" font-size="3.35" fill="#222">RING: VR TDC</text>
<text transform="translate(259.30,312.61) scale(0.91,1)" font-size="3.35" fill="#222" text-anchor="end">No</text>
<text transform="translate(283.90,312.61) scale(0.91,1)" font-size="3.35" fill="#222" text-anchor="end">No</text>
<text transform="translate(308.20,312.61) scale(0.91,1)" font-size="3.35" fill="#222" text-anchor="end">No</text>
<rect x="186.50" y="313.59" width="146.80" height="5.07" fill="#f0f0f0"/>
<path d="M182.90 316.23 A1.6 1.6 0 0 1 186.10 316.23" fill="none" stroke="#8a90a0" stroke-width="0.5"/><circle cx="183.60" cy="317.63" r="0.5" fill="#5a6272"/><circle cx="185.40" cy="317.63" r="0.5" fill="#5a6272"/><circle cx="184.50" cy="316.23" r="0.4" fill="#8a90a0"/>
<text transform="translate(187.20,317.68) scale(0.94,1)" font-size="3.35" fill="#222">RING: Max VR Voltage, ICCma...</text>
<text transform="translate(259.30,317.68) scale(0.91,1)" font-size="3.35" fill="#222" text-anchor="end">No</text>
<text transform="translate(283.90,317.68) scale(0.91,1)" font-size="3.35" fill="#222" text-anchor="end">No</text>
<text transform="translate(308.20,317.68) scale(0.91,1)" font-size="3.35" fill="#222" text-anchor="end">No</text>
<circle cx="183.60" cy="320.60" r="0.48" fill="#5e6676"/><circle cx="185.20" cy="320.60" r="0.48" fill="#5e6676"/><circle cx="183.60" cy="322.50" r="0.48" fill="#5e6676"/><circle cx="185.20" cy="322.50" r="0.48" fill="#5e6676"/><circle cx="184.40" cy="319.60" r="0.4" fill="#a8aebb"/><circle cx="184.40" cy="321.55" r="0.4" fill="#a8aebb"/><circle cx="184.40" cy="323.40" r="0.4" fill="#a8aebb"/><circle cx="182.80" cy="321.55" r="0.4" fill="#a8aebb"/><circle cx="186.00" cy="321.55" r="0.4" fill="#a8aebb"/>
<text transform="translate(187.20,322.75) scale(0.94,1)" font-size="3.35" fill="#222">RING: Package-Level RAPL/PB...</text>
<text transform="translate(259.30,322.75) scale(0.91,1)" font-size="3.35" fill="#222" text-anchor="end">No</text>
<text transform="translate(283.90,322.75) scale(0.91,1)" font-size="3.35" fill="#222" text-anchor="end">No</text>
<text transform="translate(308.20,322.75) scale(0.91,1)" font-size="3.35" fill="#222" text-anchor="end">No</text>
<rect x="186.50" y="323.74" width="146.80" height="5.07" fill="#f0f0f0"/>
<circle cx="183.60" cy="325.67" r="0.48" fill="#5e6676"/><circle cx="185.20" cy="325.67" r="0.48" fill="#5e6676"/><circle cx="183.60" cy="327.57" r="0.48" fill="#5e6676"/><circle cx="185.20" cy="327.57" r="0.48" fill="#5e6676"/><circle cx="184.40" cy="324.67" r="0.4" fill="#a8aebb"/><circle cx="184.40" cy="326.62" r="0.4" fill="#a8aebb"/><circle cx="184.40" cy="328.47" r="0.4" fill="#a8aebb"/><circle cx="182.80" cy="326.62" r="0.4" fill="#a8aebb"/><circle cx="186.00" cy="326.62" r="0.4" fill="#a8aebb"/>
<text transform="translate(187.20,327.82) scale(0.94,1)" font-size="3.35" fill="#222">RING: Package-Level RAPL/PB...</text>
<text transform="translate(259.30,327.82) scale(0.91,1)" font-size="3.35" fill="#222" text-anchor="end">No</text>
<text transform="translate(283.90,327.82) scale(0.91,1)" font-size="3.35" fill="#222" text-anchor="end">No</text>
<text transform="translate(308.20,327.82) scale(0.91,1)" font-size="3.35" fill="#222" text-anchor="end">No</text>
<rect x="181.40" y="333.88" width="151.90" height="5.07" fill="#e1e1e1"/>
<path d="M172.30 336.11 L174.00 337.61 L175.70 336.11" fill="none" stroke="#606060" stroke-width="0.4"/>
<rect x="178.20" y="334.41" width="2.4" height="4.0" fill="#505050"/>
<text transform="translate(182.00,338.16) scale(1.06,1)" font-size="3.4" fill="#1a1a1a" font-weight="bold">S.M.A.R.T.: KIE Acerly 512GB (YS202409180008)</text>
<path d="M179.45 340.68 L180.10 343.88 L178.80 343.88 Z" fill="#d0142a"/><rect x="179.20" y="340.38" width="0.5" height="0.6" fill="#f0a0a8"/>
<text transform="translate(182.40,343.03) scale(0.94,1)" font-size="3.35" fill="#222">Drive Temperature</text>
<text transform="translate(259.30,343.03) scale(0.91,1)" font-size="3.35" fill="#222" text-anchor="end">60 °C</text>
<text transform="translate(283.90,343.03) scale(0.91,1)" font-size="3.35" fill="#222" text-anchor="end">60 °C</text>
<text transform="translate(308.20,343.03) scale(0.91,1)" font-size="3.35" fill="#222" text-anchor="end">60 °C</text>
<text transform="translate(332.40,343.03) scale(0.91,1)" font-size="3.35" fill="#222" text-anchor="end">60 °C</text>
<rect x="181.70" y="344.01" width="151.60" height="5.07" fill="#f0f0f0"/>
<rect x="177.90" y="344.95" width="3.0" height="3.2" fill="none" stroke="#6a7080" stroke-width="0.5"/>
<text transform="translate(182.40,348.10) scale(0.94,1)" font-size="3.35" fill="#222">Drive Remaining Life</text>
<text transform="translate(259.30,348.10) scale(0.91,1)" font-size="3.35" fill="#e00010" text-anchor="end">0.0 %</text>
<text transform="translate(283.90,348.10) scale(0.91,1)" font-size="3.35" fill="#e00010" text-anchor="end">0.0 %</text>
<text transform="translate(308.20,348.10) scale(0.91,1)" font-size="3.35" fill="#e00010" text-anchor="end">0.0 %</text>
<rect x="177.90" y="350.02" width="3.0" height="3.2" fill="none" stroke="#6a7080" stroke-width="0.5"/>
<text transform="translate(182.40,353.17) scale(0.94,1)" font-size="3.35" fill="#222">Drive Failure</text>
<text transform="translate(259.30,353.17) scale(0.91,1)" font-size="3.35" fill="#222" text-anchor="end">No</text>
<text transform="translate(283.90,353.17) scale(0.91,1)" font-size="3.35" fill="#222" text-anchor="end">No</text>
<text transform="translate(308.20,353.17) scale(0.91,1)" font-size="3.35" fill="#222" text-anchor="end">No</text>
<rect x="181.70" y="354.15" width="151.60" height="5.07" fill="#f0f0f0"/>
<rect x="177.90" y="355.09" width="3.0" height="3.2" fill="none" stroke="#6a7080" stroke-width="0.5"/>
<text transform="translate(182.40,358.24) scale(0.94,1)" font-size="3.35" fill="#222">Drive Warning</text>
<text transform="translate(259.30,358.24) scale(0.91,1)" font-size="3.35" fill="#222" text-anchor="end">Yes</text>
<text transform="translate(283.90,358.24) scale(0.91,1)" font-size="3.35" fill="#222" text-anchor="end">Yes</text>
<text transform="translate(308.20,358.24) scale(0.91,1)" font-size="3.35" fill="#222" text-anchor="end">Yes</text>
<rect x="177.90" y="360.16" width="3.0" height="3.2" fill="none" stroke="#6a7080" stroke-width="0.5"/>
<text transform="translate(182.40,363.31) scale(0.94,1)" font-size="3.35" fill="#222">Total Host Writes</text>
<text transform="translate(259.30,363.31) scale(0.91,1)" font-size="3.35" fill="#222" text-anchor="end">839 GB</text>
<text transform="translate(283.90,363.31) scale(0.91,1)" font-size="3.35" fill="#222" text-anchor="end">839 GB</text>
<text transform="translate(308.20,363.31) scale(0.91,1)" font-size="3.35" fill="#222" text-anchor="end">839 GB</text>
<rect x="181.70" y="364.30" width="151.60" height="5.07" fill="#f0f0f0"/>
<rect x="177.90" y="365.23" width="3.0" height="3.2" fill="none" stroke="#6a7080" stroke-width="0.5"/>
<text transform="translate(182.40,368.38) scale(0.94,1)" font-size="3.35" fill="#222">Total Host Reads</text>
<text transform="translate(259.30,368.38) scale(0.91,1)" font-size="3.35" fill="#222" text-anchor="end">1,620 GB</text>
<text transform="translate(283.90,368.38) scale(0.91,1)" font-size="3.35" fill="#222" text-anchor="end">1,620 GB</text>
<text transform="translate(308.20,368.38) scale(0.91,1)" font-size="3.35" fill="#222" text-anchor="end">1,620 GB</text>
<rect x="177.90" y="370.30" width="3.0" height="3.2" fill="none" stroke="#6a7080" stroke-width="0.5"/>
<text transform="translate(182.40,373.45) scale(0.94,1)" font-size="3.35" fill="#222">Warning: Remaining Life</text>
<text transform="translate(259.30,373.45) scale(0.91,1)" font-size="3.35" fill="#222" text-anchor="end">0</text>
<text transform="translate(283.90,373.45) scale(0.91,1)" font-size="3.35" fill="#222" text-anchor="end">0</text>
<text transform="translate(308.20,373.45) scale(0.91,1)" font-size="3.35" fill="#222" text-anchor="end">0</text>
<rect x="0" y="405" width="340.5" height="0.9" fill="#dcdcdc"/>
<rect x="0" y="405.9" width="340.5" height="14.8" fill="#f0f0f0"/>
<rect x="1.20" y="408.0" width="11.80" height="10.2" rx="0.8" fill="#fbfbfb" stroke="#e4e4e4" stroke-width="0.35"/>
<rect x="14.00" y="408.0" width="11.80" height="10.2" rx="0.8" fill="#fbfbfb" stroke="#e4e4e4" stroke-width="0.35"/>
<path d="M2.60 413.20 L5.20 411.20 L5.20 415.20 Z M12.00 413.20 L9.40 411.20 L9.40 415.20 Z" fill="#2a88e0"/>
<rect x="4.60" y="412.30" width="5.4" height="1.8" fill="#2a88e0"/>
<path d="M19.60 413.20 L17.00 411.20 L17.00 415.20 Z M21.00 413.20 L23.60 411.20 L23.60 415.20 Z" fill="#2a88e0"/>
<rect x="15.60" y="412.30" width="9.4" height="1.8" fill="#2a88e0"/>
<rect x="248.80" y="408.0" width="12.20" height="10.2" rx="0.8" fill="#fbfbfb" stroke="#e4e4e4" stroke-width="0.35"/>
<path d="M251.60 408.20 L255.60 408.80 L254.60 411.60 L250.40 411.20 Z" fill="#2e86e0"/>
<path d="M251.80 408.50 L255.00 409.00 L254.70 409.70 L251.40 409.30 Z" fill="#7cc0f8"/>
<path d="M251.00 411.60 L254.40 412.00 L254.00 413.00 L250.80 412.60 Z" fill="#4a4a3a"/>
<path d="M256.00 412.40 L260.00 413.00 L259.00 415.80 L254.80 415.40 Z" fill="#2e86e0"/>
<path d="M256.20 412.70 L259.40 413.20 L259.10 413.90 L255.80 413.50 Z" fill="#7cc0f8"/>
<path d="M255.40 415.80 L258.80 416.20 L258.40 417.20 L255.20 416.80 Z" fill="#4a4a3a"/>
<text transform="translate(268.70,414.80) scale(0.9,1)" font-size="4.0" fill="#222" stroke="#222" stroke-width="0.04">0:13:35</text>
<rect x="282.60" y="408.0" width="12.60" height="10.2" rx="0.8" fill="#fbfbfb" stroke="#6ea8e0" stroke-width="0.35"/>
<circle cx="289.0" cy="413.0" r="3.7" fill="#fdfdfd" stroke="#3a3a3a" stroke-width="0.6"/>
<path d="M289.0 410.2 L289.0 413.2 L291.0 413.2" fill="none" stroke="#333" stroke-width="0.5"/>
<rect x="288.3" y="408.7" width="1.4" height="0.8" fill="#3a3a3a"/>
<rect x="296.60" y="408.0" width="12.40" height="10.2" rx="0.8" fill="#fbfbfb" stroke="#e4e4e4" stroke-width="0.35"/>
<path d="M299.3 409.0 L304.2 409.0 L306.0 410.8 L306.0 417.2 L299.3 417.2 Z" fill="#f6f6f6" stroke="#a8a8a8" stroke-width="0.4"/>
<path d="M300.2 411.0 h4.8 M300.2 412.2 h4.8 M300.2 413.4 h4.8 M300.2 414.6 h3.6" stroke="#c4c4c4" stroke-width="0.3"/>
<path d="M303.8 415.6 h3.2 M305.4 414.0 v3.2" stroke="#4ab04a" stroke-width="1.0"/>
<rect x="310.20" y="408.0" width="12.40" height="10.2" rx="0.8" fill="#fbfbfb" stroke="#e4e4e4" stroke-width="0.35"/>
<circle cx="316.4" cy="413.0" r="3.2" fill="none" stroke="#808080" stroke-width="1.0" stroke-dasharray="1.0 0.7"/>
<circle cx="316.4" cy="413.0" r="2.2" fill="none" stroke="#707070" stroke-width="0.45"/>
<rect x="323.80" y="408.0" width="12.80" height="10.2" rx="0.8" fill="#fbfbfb" stroke="#e4e4e4" stroke-width="0.35"/>
<path d="M328.2 410.2 L333.8 415.8 M333.8 410.2 L328.2 415.8" stroke="#1a7ad8" stroke-width="1.2"/>
<path d="M327.2 409.2 l2.8 0 l-2.8 2.8 Z M334.8 409.2 l-2.8 0 l2.8 2.8 Z M327.2 416.8 l2.8 0 l-2.8 -2.8 Z M334.8 416.8 l-2.8 0 l2.8 -2.8 Z" fill="#1a7ad8"/>
</svg>
</body></html>
